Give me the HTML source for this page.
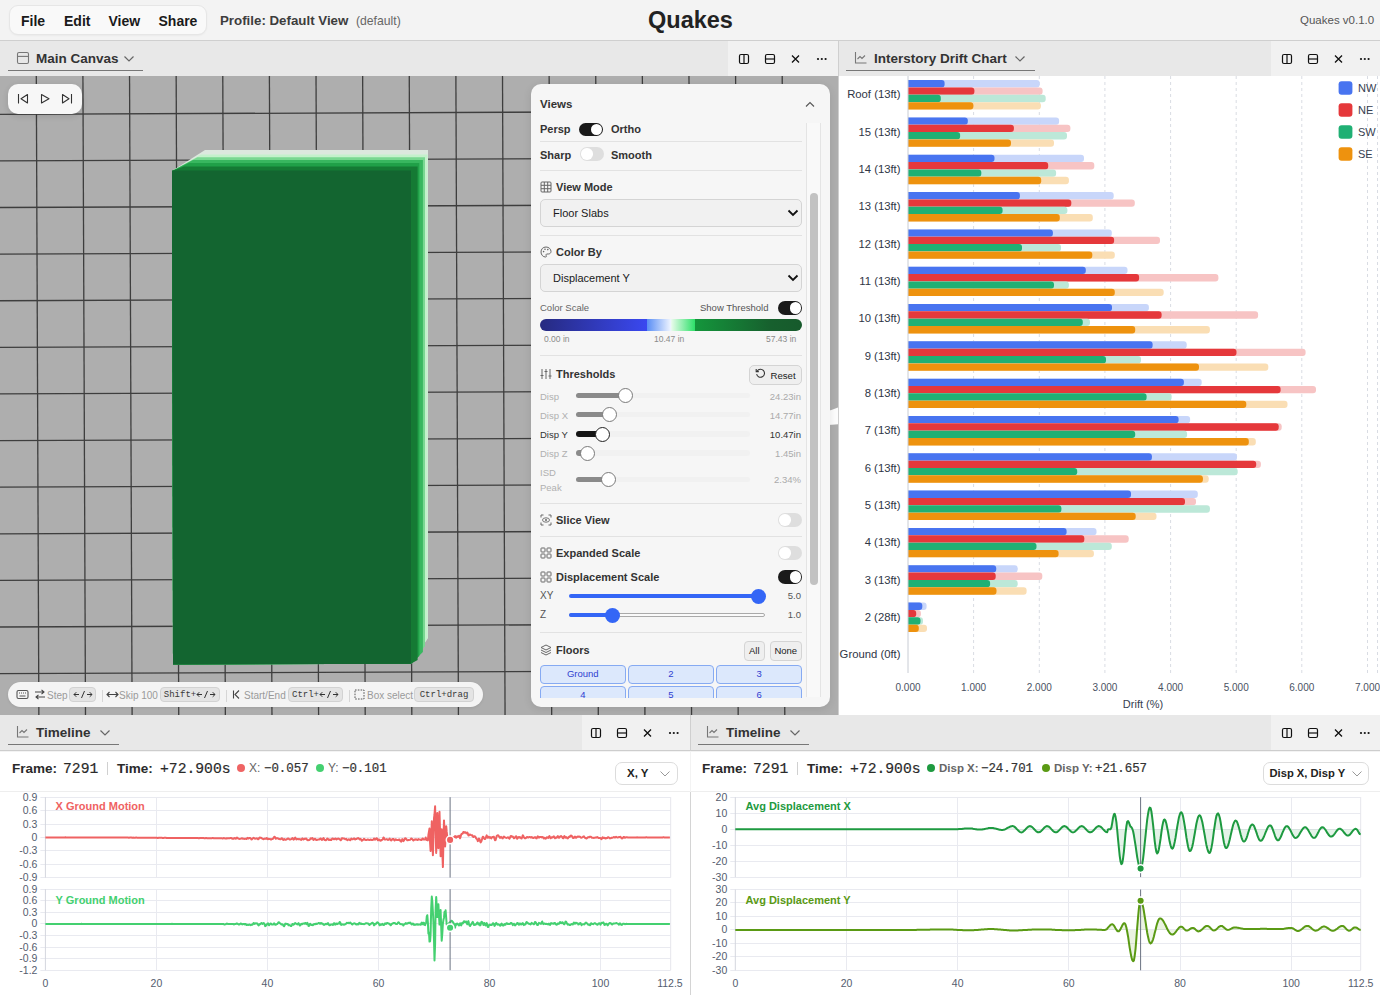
<!DOCTYPE html><html><head><meta charset="utf-8"><style>
*{box-sizing:border-box;margin:0;padding:0}
html,body{width:1380px;height:995px;overflow:hidden;background:#f3f3f3;font-family:"Liberation Sans",sans-serif;color:#222}
.a{position:absolute;white-space:nowrap}
.b{font-weight:bold}
.mono{font-family:"Liberation Mono",monospace;-webkit-text-stroke:0.2px currentColor;margin-top:1px}
.phdr{position:absolute;background:#e8e8e8}
.icons{position:absolute;background:#f1f1f1}
.tab{position:absolute;margin-top:1px;font-size:13.5px;font-weight:bold;color:#333;white-space:nowrap}
.uline{position:absolute;height:1px;background:#777}
.sep{position:absolute;height:1px;background:#e2e2e2}
.lbl{position:absolute;font-size:11px;font-weight:bold;color:#333;white-space:nowrap}
.sel{position:absolute;background:#f1f1f1;border:1px solid #d4d4d4;border-radius:5px}
.tog{position:absolute;width:24px;height:13.5px;border-radius:7px}
.knob{position:absolute;top:1px;width:11.5px;height:11.5px;border-radius:50%;background:#fff}
.kbd{position:absolute;top:687px;height:15px;background:#e4e4e4;border:1px solid #d2d2d2;border-radius:4px;font-family:"Liberation Mono",monospace;font-size:9px;color:#3a3a3a;display:flex;align-items:center;justify-content:center;padding-top:1px}
.hint{position:absolute;top:689.5px;font-size:10px;color:#9a9a9a}
.fbtn{position:absolute;height:18.5px;background:#dce8fc;border:1px solid #86aaf2;border-radius:4px;font-size:9.5px;color:#3040d0;text-align:center;line-height:16.5px}
</style></head><body>
<div class="a" style="left:0;top:40px;width:1380px;height:1px;background:#cfcfcf"></div>
<div class="a" style="left:9px;top:5px;width:198px;height:30px;background:#f9f9f9;border:1px solid #e6e6e6;border-radius:9px;box-shadow:0 1px 2px rgba(0,0,0,0.04)"></div>
<div class="a b" style="left:21px;top:12.5px;font-size:14px;color:#1a1a1a">File</div>
<div class="a b" style="left:64px;top:12.5px;font-size:14px;color:#1a1a1a">Edit</div>
<div class="a b" style="left:108.5px;top:12.5px;font-size:14px;color:#1a1a1a">View</div>
<div class="a b" style="left:158.5px;top:12.5px;font-size:14px;color:#1a1a1a">Share</div>
<div class="a b" style="left:220px;top:12.5px;font-size:13.3px;color:#3d3d3d">Profile: Default View</div>
<div class="a" style="left:356px;top:14px;font-size:12.2px;color:#666">(default)</div>
<div class="a b" style="left:648px;top:7px;font-size:23.5px;color:#222">Quakes</div>
<div class="a" style="left:1300px;top:14px;font-size:11.5px;color:#555">Quakes v0.1.0</div>
<div class="a" style="left:0;top:76px;width:838px;height:639px;background:#aeaeae;overflow:hidden">
<svg class="a" style="left:0;top:0" width="838" height="639"><line x1="-56.94" y1="0" x2="-54.38" y2="639" stroke="#3e3e3e" stroke-width="1.3"/><line x1="-10.32" y1="0" x2="-7.76" y2="639" stroke="#3e3e3e" stroke-width="1.3"/><line x1="36.30" y1="0" x2="38.86" y2="639" stroke="#3e3e3e" stroke-width="1.3"/><line x1="82.92" y1="0" x2="85.48" y2="639" stroke="#3e3e3e" stroke-width="1.3"/><line x1="129.54" y1="0" x2="132.10" y2="639" stroke="#3e3e3e" stroke-width="1.3"/><line x1="176.16" y1="0" x2="178.72" y2="639" stroke="#3e3e3e" stroke-width="1.3"/><line x1="222.78" y1="0" x2="225.34" y2="639" stroke="#3e3e3e" stroke-width="1.3"/><line x1="269.40" y1="0" x2="271.96" y2="639" stroke="#3e3e3e" stroke-width="1.3"/><line x1="316.02" y1="0" x2="318.58" y2="639" stroke="#3e3e3e" stroke-width="1.3"/><line x1="362.64" y1="0" x2="365.20" y2="639" stroke="#3e3e3e" stroke-width="1.3"/><line x1="409.26" y1="0" x2="411.82" y2="639" stroke="#3e3e3e" stroke-width="1.3"/><line x1="455.88" y1="0" x2="458.44" y2="639" stroke="#3e3e3e" stroke-width="1.3"/><line x1="502.50" y1="0" x2="505.06" y2="639" stroke="#3e3e3e" stroke-width="1.3"/><line x1="549.12" y1="0" x2="551.68" y2="639" stroke="#3e3e3e" stroke-width="1.3"/><line x1="595.74" y1="0" x2="598.30" y2="639" stroke="#3e3e3e" stroke-width="1.3"/><line x1="642.36" y1="0" x2="644.92" y2="639" stroke="#3e3e3e" stroke-width="1.3"/><line x1="688.98" y1="0" x2="691.54" y2="639" stroke="#3e3e3e" stroke-width="1.3"/><line x1="735.60" y1="0" x2="738.16" y2="639" stroke="#3e3e3e" stroke-width="1.3"/><line x1="782.22" y1="0" x2="784.78" y2="639" stroke="#3e3e3e" stroke-width="1.3"/><line x1="0" y1="-54.92" x2="784" y2="-58.06" stroke="#3e3e3e" stroke-width="1.3"/><line x1="0" y1="-8.31" x2="784" y2="-11.45" stroke="#3e3e3e" stroke-width="1.3"/><line x1="0" y1="38.30" x2="784" y2="35.16" stroke="#3e3e3e" stroke-width="1.3"/><line x1="0" y1="84.91" x2="784" y2="81.77" stroke="#3e3e3e" stroke-width="1.3"/><line x1="0" y1="131.52" x2="784" y2="128.38" stroke="#3e3e3e" stroke-width="1.3"/><line x1="0" y1="178.13" x2="784" y2="174.99" stroke="#3e3e3e" stroke-width="1.3"/><line x1="0" y1="224.74" x2="784" y2="221.60" stroke="#3e3e3e" stroke-width="1.3"/><line x1="0" y1="271.35" x2="784" y2="268.21" stroke="#3e3e3e" stroke-width="1.3"/><line x1="0" y1="317.96" x2="784" y2="314.82" stroke="#3e3e3e" stroke-width="1.3"/><line x1="0" y1="364.57" x2="784" y2="361.43" stroke="#3e3e3e" stroke-width="1.3"/><line x1="0" y1="411.18" x2="784" y2="408.04" stroke="#3e3e3e" stroke-width="1.3"/><line x1="0" y1="457.79" x2="784" y2="454.65" stroke="#3e3e3e" stroke-width="1.3"/><line x1="0" y1="504.40" x2="784" y2="501.26" stroke="#3e3e3e" stroke-width="1.3"/><line x1="0" y1="551.01" x2="784" y2="547.87" stroke="#3e3e3e" stroke-width="1.3"/><line x1="0" y1="597.62" x2="784" y2="594.48" stroke="#3e3e3e" stroke-width="1.3"/><line x1="0" y1="644.23" x2="784" y2="641.09" stroke="#3e3e3e" stroke-width="1.3"/><line x1="0" y1="690.84" x2="784" y2="687.70" stroke="#3e3e3e" stroke-width="1.3"/><line x1="0" y1="737.45" x2="784" y2="734.31" stroke="#3e3e3e" stroke-width="1.3"/><polygon points="172.0,95.0 205.0,74.0 428.0,74.0 428.0,562.0 410.9,587.8 173.0,588.6" fill="#dce8de"/><polygon points="172.0,95.0 201.0,78.5 427.6,78.5 427.6,562.0 410.9,587.8 173.0,588.6" fill="#c3f1cb"/><polygon points="172.0,95.0 197.3,81.2 425.0,81.2 425.0,570.0 410.9,587.8 173.0,588.6" fill="#79d791"/><polygon points="172.0,95.0 193.0,83.9 422.9,83.9 422.9,576.0 410.9,587.8 173.0,588.6" fill="#38b75f"/><polygon points="172.0,95.0 189.0,86.9 419.3,86.9 419.3,580.0 410.9,587.8 173.0,588.6" fill="#20a048"/><polygon points="172.0,95.0 184.0,90.5 417.6,90.5 417.6,584.0 410.9,587.8 173.0,588.6" fill="#157a34"/><polygon points="172.0,94.5 410.9,94.5 410.9,587.8 173.0,588.6" fill="#136530"/></svg>
</div>
<div class="a" style="left:8px;top:84px;width:74px;height:30px;background:#f7f7f7;border-radius:10px;box-shadow:0 2px 6px rgba(0,0,0,0.12)"></div>
<svg class="a" style="left:14px;top:90px" width="64" height="18" viewBox="0 0 64 18"><path d="M4.5 4 V13.5" stroke="#333" stroke-width="1.1"/><path d="M13.5 4.5 L7 8.8 L13.5 13 Z" fill="none" stroke="#333" stroke-width="1.1" stroke-linejoin="round"/><path d="M27.5 4.5 L35 8.8 L27.5 13 Z" fill="none" stroke="#333" stroke-width="1.1" stroke-linejoin="round"/><path d="M48.5 4.5 L55 8.8 L48.5 13 Z" fill="none" stroke="#333" stroke-width="1.1" stroke-linejoin="round"/><path d="M57.5 4 V13.5" stroke="#333" stroke-width="1.1"/></svg>
<svg class="a" style="left:826px;top:404px" width="12" height="24" viewBox="0 0 12 24"><path d="M0 7.2 Q6 6.2 12 3.5 V20.2 Q6 20.8 0 21 Z" fill="#fdfdfd"/></svg>
<div class="a" style="left:8px;top:682px;width:475px;height:25px;background:#f4f4f4;border-radius:13px;box-shadow:0 1px 3px rgba(0,0,0,0.08)"></div>
<svg class="a" style="left:16px;top:689px" width="13" height="11" viewBox="0 0 13 11"><rect x="1" y="1.5" width="11" height="8" rx="1.5" fill="none" stroke="#555" stroke-width="1.1"/><path d="M3 4 h1 M5 4 h1 M7 4 h1 M9 4 h1 M3.5 7 h6" stroke="#555" stroke-width="1"/></svg>
<svg class="a" style="left:34px;top:689px" width="12" height="11" viewBox="0 0 12 11"><path d="M1 3 H10 M7.5 0.8 L10 3 L7.5 5.2 M11 8 H2 M4.5 5.8 L2 8 L4.5 10.2" fill="none" stroke="#444" stroke-width="1.1"/></svg>
<div class="hint" style="left:47px">Step</div>
<div class="kbd" style="left:69px;width:27px"><svg width="20" height="9" viewBox="0 0 20 9" style="margin-top:-1px"><path d="M6 4.5 H1 M3.3 2.2 L1 4.5 L3.3 6.8" fill="none" stroke="#333" stroke-width="1"/><path d="M8.5 8 L11.5 1" stroke="#333" stroke-width="1"/><path d="M14 4.5 H19 M16.7 2.2 L19 4.5 L16.7 6.8" fill="none" stroke="#333" stroke-width="1"/></svg></div>
<div class="a" style="left:102px;top:690px;width:1px;height:12px;background:#d6d6d6"></div>
<svg class="a" style="left:106px;top:689px" width="13" height="11" viewBox="0 0 13 11"><path d="M1 5.5 H12 M3.5 3 L1 5.5 L3.5 8 M9.5 3 L12 5.5 L9.5 8" fill="none" stroke="#444" stroke-width="1.1"/></svg>
<div class="hint" style="left:119px">Skip 100</div>
<div class="kbd" style="left:160px;width:60px">Shift+<svg width="20" height="9" viewBox="0 0 20 9" style="margin-top:-1px"><path d="M6 4.5 H1 M3.3 2.2 L1 4.5 L3.3 6.8" fill="none" stroke="#333" stroke-width="1"/><path d="M8.5 8 L11.5 1" stroke="#333" stroke-width="1"/><path d="M14 4.5 H19 M16.7 2.2 L19 4.5 L16.7 6.8" fill="none" stroke="#333" stroke-width="1"/></svg></div>
<div class="a" style="left:226px;top:690px;width:1px;height:12px;background:#d6d6d6"></div>
<svg class="a" style="left:232px;top:689px" width="9" height="11" viewBox="0 0 9 11"><path d="M1.5 1.5 V9.5 M7 1.5 L3 5.5 L7 9.5" fill="none" stroke="#444" stroke-width="1.1"/></svg>
<div class="hint" style="left:244px">Start/End</div>
<div class="kbd" style="left:288px;width:55px">Ctrl+<svg width="20" height="9" viewBox="0 0 20 9" style="margin-top:-1px"><path d="M6 4.5 H1 M3.3 2.2 L1 4.5 L3.3 6.8" fill="none" stroke="#333" stroke-width="1"/><path d="M8.5 8 L11.5 1" stroke="#333" stroke-width="1"/><path d="M14 4.5 H19 M16.7 2.2 L19 4.5 L16.7 6.8" fill="none" stroke="#333" stroke-width="1"/></svg></div>
<div class="a" style="left:349px;top:690px;width:1px;height:12px;background:#d6d6d6"></div>
<svg class="a" style="left:354px;top:689px" width="11" height="11" viewBox="0 0 11 11"><rect x="1" y="1" width="9" height="9" fill="none" stroke="#555" stroke-width="1" stroke-dasharray="1.6 1.2"/></svg>
<div class="hint" style="left:367px">Box select</div>
<div class="kbd" style="left:414px;width:60px">Ctrl+drag</div>
<div class="a" style="left:531px;top:84px;width:299px;height:623px;background:#f6f6f6;border-radius:10px;box-shadow:0 2px 8px rgba(0,0,0,0.10)"></div>
<div class="lbl" style="left:540px;top:98px;font-size:11.5px">Views</div>
<svg class="a" style="left:805px;top:100px" width="10" height="8" viewBox="0 0 10 8"><path d="M1 6.5 L5 2.5 L9 6.5" fill="none" stroke="#555" stroke-width="1.1"/></svg>
<div class="a" style="left:806px;top:123px;width:15px;height:574px;background:#f9f9f9;border-left:1px solid #e4e4e4;border-right:1px solid #e4e4e4"></div>
<div class="a" style="left:810px;top:193px;width:7.5px;height:392px;background:#c2c2c2;border-radius:4px"></div>
<div class="lbl" style="left:540px;top:123px">Persp</div>
<div class="tog" style="left:579px;top:122.5px;background:#1a1a1a"><div class="knob" style="left:11.5px"></div></div>
<div class="lbl" style="left:611px;top:123px">Ortho</div>
<div class="sep" style="left:540px;top:141px;width:262px"></div>
<div class="lbl" style="left:540px;top:149px">Sharp</div>
<div class="tog" style="left:580px;top:147px;background:#dedede"><div class="knob" style="left:1px"></div></div>
<div class="lbl" style="left:611px;top:149px">Smooth</div>
<div class="sep" style="left:540px;top:170px;width:262px"></div>
<svg class="a" style="left:540px;top:181px" width="12" height="12" viewBox="0 0 12 12"><rect x="1" y="1" width="10" height="10" rx="1" fill="none" stroke="#666" stroke-width="1"/><path d="M4.3 1 V11 M7.7 1 V11 M1 4.3 H11 M1 7.7 H11" stroke="#666" stroke-width="1"/></svg>
<div class="lbl" style="left:556px;top:181px">View Mode</div>
<div class="sel" style="left:540px;top:199px;width:262px;height:28px"></div>
<div class="a" style="left:553px;top:207px;font-size:11px;color:#1a1a1a">Floor Slabs</div>
<svg class="a" style="left:787px;top:209px" width="12" height="8" viewBox="0 0 12 8"><path d="M1.5 1.5 L6 6 L10.5 1.5" fill="none" stroke="#111" stroke-width="1.8"/></svg>
<div class="sep" style="left:540px;top:235px;width:262px"></div>
<svg class="a" style="left:540px;top:246px" width="12" height="12" viewBox="0 0 12 12"><path d="M6 1 C2.8 1 1 3.3 1 6 C1 8.8 3 11 5.5 11 C6.5 11 6.6 10.2 6.2 9.6 C5.7 8.9 6.1 8 7 8 H8.3 C9.9 8 11 6.9 11 5.5 C11 3 8.8 1 6 1 Z" fill="none" stroke="#666" stroke-width="1"/><circle cx="3.6" cy="5.6" r="0.8" fill="#666"/><circle cx="5" cy="3.3" r="0.8" fill="#666"/><circle cx="7.8" cy="3.6" r="0.8" fill="#666"/></svg>
<div class="lbl" style="left:556px;top:246px">Color By</div>
<div class="sel" style="left:540px;top:264px;width:262px;height:28px"></div>
<div class="a" style="left:553px;top:272px;font-size:11px;color:#1a1a1a">Displacement Y</div>
<svg class="a" style="left:787px;top:274px" width="12" height="8" viewBox="0 0 12 8"><path d="M1.5 1.5 L6 6 L10.5 1.5" fill="none" stroke="#111" stroke-width="1.8"/></svg>
<div class="a" style="left:540px;top:302px;font-size:9.5px;color:#666">Color Scale</div>
<div class="a" style="left:700px;top:302px;font-size:9.5px;color:#555">Show Threshold</div>
<div class="tog" style="left:778px;top:301px;background:#1a1a1a"><div class="knob" style="left:11.5px"></div></div>
<div class="a" style="left:540px;top:319px;width:262px;height:11.5px;border-radius:6px;background:linear-gradient(90deg,#262a80 0%,#3a48f0 40.8%,#5a8ef5 40.9%,#eef4ff 49.9%,#e4fbe8 50.3%,#2ee06a 59.1%,#14963c 59.2%,#17602e 88%,#175a2c 100%)"></div>
<div class="a" style="left:544px;top:334px;font-size:8.5px;color:#8a8a8a">0.00 in</div>
<div class="a" style="left:654px;top:334px;font-size:8.5px;color:#8a8a8a">10.47 in</div>
<div class="a" style="left:766px;top:334px;font-size:8.5px;color:#8a8a8a">57.43 in</div>
<div class="sep" style="left:540px;top:355px;width:262px"></div>
<svg class="a" style="left:540px;top:368px" width="12" height="12" viewBox="0 0 12 12"><path d="M2 1 V11 M6 1 V11 M10 1 V11 M0.5 7.5 H3.5 M4.5 3.5 H7.5 M8.5 8 H11.5" stroke="#666" stroke-width="1"/></svg>
<div class="lbl" style="left:556px;top:368px">Thresholds</div>
<div class="a" style="left:749px;top:364.5px;width:53px;height:20px;background:#efefef;border:1px solid #d4d4d4;border-radius:5px"></div>
<svg class="a" style="left:755px;top:368px" width="11" height="11" viewBox="0 0 11 11"><path d="M2.2 3 A4 4 0 1 1 1.6 6.2" fill="none" stroke="#333" stroke-width="1.1"/><path d="M1.2 1 V3.6 H3.8" fill="none" stroke="#333" stroke-width="1.1"/></svg>
<div class="a" style="left:770.5px;top:369.5px;font-size:9.6px;color:#222">Reset</div>
<div class="a" style="left:540px;top:390.5px;font-size:9.5px;color:#b0b0b0">Disp</div>
<div class="a" style="left:576px;top:392.8px;width:174px;height:5.5px;border-radius:3px;background:#f1f1f1"></div>
<div class="a" style="left:576px;top:392.8px;width:49.0px;height:5.5px;border-radius:3px;background:#8a8a8a"></div>
<div class="a" style="left:617.5px;top:388.3px;width:15px;height:15px;border-radius:50%;background:#fff;border:1.1px solid #7a7a7a"></div>
<div class="a" style="right:579px;top:390.5px;font-size:9.5px;color:#aaa">24.23in</div>
<div class="a" style="left:540px;top:409.5px;font-size:9.5px;color:#b0b0b0">Disp X</div>
<div class="a" style="left:576px;top:411.8px;width:174px;height:5.5px;border-radius:3px;background:#f1f1f1"></div>
<div class="a" style="left:576px;top:411.8px;width:33.0px;height:5.5px;border-radius:3px;background:#8a8a8a"></div>
<div class="a" style="left:601.5px;top:407.3px;width:15px;height:15px;border-radius:50%;background:#fff;border:1.1px solid #7a7a7a"></div>
<div class="a" style="right:579px;top:409.5px;font-size:9.5px;color:#aaa">14.77in</div>
<div class="a" style="left:540px;top:428.7px;font-size:9.5px;color:#333">Disp Y</div>
<div class="a" style="left:576px;top:431.0px;width:174px;height:5.5px;border-radius:3px;background:#f1f1f1"></div>
<div class="a" style="left:576px;top:431.0px;width:26.0px;height:5.5px;border-radius:3px;background:#151515"></div>
<div class="a" style="left:594.5px;top:426.5px;width:15px;height:15px;border-radius:50%;background:#fff;border:1.1px solid #222"></div>
<div class="a" style="right:579px;top:428.7px;font-size:9.5px;color:#333">10.47in</div>
<div class="a" style="left:540px;top:447.7px;font-size:9.5px;color:#b0b0b0">Disp Z</div>
<div class="a" style="left:576px;top:450.0px;width:174px;height:5.5px;border-radius:3px;background:#f1f1f1"></div>
<div class="a" style="left:576px;top:450.0px;width:11.0px;height:5.5px;border-radius:3px;background:#8a8a8a"></div>
<div class="a" style="left:579.5px;top:445.5px;width:15px;height:15px;border-radius:50%;background:#fff;border:1.1px solid #7a7a7a"></div>
<div class="a" style="right:579px;top:447.7px;font-size:9.5px;color:#aaa">1.45in</div>
<div class="a" style="left:540px;top:465px;font-size:9.5px;color:#b0b0b0;line-height:15.2px">ISD<br>Peak</div>
<div class="a" style="left:576px;top:476.6px;width:174px;height:5.5px;border-radius:3px;background:#f1f1f1"></div>
<div class="a" style="left:576px;top:476.6px;width:32.0px;height:5.5px;border-radius:3px;background:#8a8a8a"></div>
<div class="a" style="left:600.5px;top:472.1px;width:15px;height:15px;border-radius:50%;background:#fff;border:1.1px solid #7a7a7a"></div>
<div class="a" style="right:579px;top:474.3px;font-size:9.5px;color:#aaa">2.34%</div>
<div class="sep" style="left:540px;top:503px;width:262px"></div>
<svg class="a" style="left:540px;top:514px" width="12" height="12" viewBox="0 0 12 12"><path d="M1 3.5 V1 H3.5 M8.5 1 H11 V3.5 M11 8.5 V11 H8.5 M3.5 11 H1 V8.5" fill="none" stroke="#666" stroke-width="1"/><ellipse cx="6" cy="6" rx="3.5" ry="2.2" fill="none" stroke="#666" stroke-width="0.9"/><circle cx="6" cy="6" r="1" fill="#666"/></svg>
<div class="lbl" style="left:556px;top:514px">Slice View</div>
<div class="tog" style="left:778px;top:513px;background:#dedede"><div class="knob" style="left:1px"></div></div>
<div class="sep" style="left:540px;top:536px;width:262px"></div>
<svg class="a" style="left:540px;top:546.5px" width="12" height="12" viewBox="0 0 12 12"><rect x="1" y="1" width="4" height="4" rx="0.6" fill="none" stroke="#666" stroke-width="1"/><rect x="7" y="1" width="4" height="4" rx="0.6" fill="none" stroke="#666" stroke-width="1"/><rect x="1" y="7" width="4" height="4" rx="0.6" fill="none" stroke="#666" stroke-width="1"/><rect x="7" y="7" width="4" height="4" rx="0.6" fill="none" stroke="#666" stroke-width="1"/></svg>
<div class="lbl" style="left:556px;top:546.5px">Expanded Scale</div>
<svg class="a" style="left:540px;top:570.5px" width="12" height="12" viewBox="0 0 12 12"><rect x="1" y="1" width="4" height="4" rx="0.6" fill="none" stroke="#666" stroke-width="1"/><rect x="7" y="1" width="4" height="4" rx="0.6" fill="none" stroke="#666" stroke-width="1"/><rect x="1" y="7" width="4" height="4" rx="0.6" fill="none" stroke="#666" stroke-width="1"/><rect x="7" y="7" width="4" height="4" rx="0.6" fill="none" stroke="#666" stroke-width="1"/></svg>
<div class="lbl" style="left:556px;top:570.5px">Displacement Scale</div>
<div class="tog" style="left:778px;top:546px;background:#dedede"><div class="knob" style="left:1px"></div></div>
<div class="tog" style="left:778px;top:570px;background:#1a1a1a"><div class="knob" style="left:11.5px"></div></div>
<div class="a" style="left:540px;top:590px;font-size:10px;color:#555">XY</div>
<div class="a" style="left:569px;top:594px;width:189px;height:4px;border-radius:2px;background:#3466f6"></div>
<div class="a" style="left:750.6px;top:588.5px;width:15px;height:15px;border-radius:50%;background:#3466f6"></div>
<div class="a" style="right:579px;top:590px;font-size:9.5px;color:#555">5.0</div>
<div class="a" style="left:540px;top:609px;font-size:10px;color:#555">Z</div>
<div class="a" style="left:569px;top:613px;width:196px;height:4px;border-radius:2px;background:#fafafa;border:1px solid #aaa"></div>
<div class="a" style="left:569px;top:613px;width:43px;height:4px;border-radius:2px;background:#3466f6"></div>
<div class="a" style="left:604.6px;top:607.5px;width:15px;height:15px;border-radius:50%;background:#3466f6"></div>
<div class="a" style="right:579px;top:609px;font-size:9.5px;color:#555">1.0</div>
<div class="sep" style="left:540px;top:631.5px;width:262px"></div>
<svg class="a" style="left:540px;top:644px" width="12" height="12" viewBox="0 0 12 12"><path d="M6 1 L11 3.5 L6 6 L1 3.5 Z" fill="none" stroke="#666" stroke-width="1" stroke-linejoin="round"/><path d="M1 6 L6 8.5 L11 6 M1 8.5 L6 11 L11 8.5" fill="none" stroke="#666" stroke-width="1" stroke-linejoin="round"/></svg>
<div class="lbl" style="left:556px;top:644px">Floors</div>
<div class="a" style="left:743.5px;top:640.5px;width:21.5px;height:20px;background:#efefef;border:1px solid #d4d4d4;border-radius:4px;font-size:9.5px;color:#222;text-align:center;line-height:18px">All</div>
<div class="a" style="left:769.5px;top:640.5px;width:32.5px;height:20px;background:#efefef;border:1px solid #d4d4d4;border-radius:4px;font-size:9.5px;color:#222;text-align:center;line-height:18px">None</div>
<div class="a" style="left:531px;top:665px;width:275px;height:33px;overflow:hidden">
<div class="fbtn" style="left:9.0px;top:0px;width:85.6px">Ground</div>
<div class="fbtn" style="left:97.2px;top:0px;width:85.6px">2</div>
<div class="fbtn" style="left:185.4px;top:0px;width:85.6px">3</div>
<div class="fbtn" style="left:9.0px;top:21px;width:85.6px">4</div>
<div class="fbtn" style="left:97.2px;top:21px;width:85.6px">5</div>
<div class="fbtn" style="left:185.4px;top:21px;width:85.6px">6</div>
</div>
<div class="phdr" style="left:0;top:41px;width:838px;height:35px"></div>
<div class="icons" style="left:728px;top:41px;width:110px;height:35px"></div>
<svg class="a" style="left:16px;top:51px" width="14" height="14" viewBox="0 0 14 14"><rect x="1.5" y="1.5" width="11" height="11" rx="1.5" fill="none" stroke="#777" stroke-width="1.1"/><line x1="1.5" y1="5.4" x2="12.5" y2="5.4" stroke="#777" stroke-width="1.1"/></svg>
<div class="tab" style="left:36px;top:50px">Main Canvas</div>
<svg class="a" style="left:123px;top:55px" width="12" height="8" viewBox="0 0 12 8"><path d="M1.5 1.5 L6 6 L10.5 1.5" fill="none" stroke="#666" stroke-width="1.2"/></svg>
<div class="uline" style="left:8px;top:70px;width:135px"></div>
<svg class="a" style="left:738px;top:53px" width="92" height="14" viewBox="0 0 92 14"><rect x="1.5" y="1.5" width="9" height="9" rx="1.5" fill="none" stroke="#111" stroke-width="1.2"/><line x1="6" y1="1.5" x2="6" y2="10.5" stroke="#111" stroke-width="1.2"/><rect x="27.5" y="1.5" width="9" height="9" rx="1.5" fill="none" stroke="#111" stroke-width="1.2"/><line x1="27.5" y1="6" x2="36.5" y2="6" stroke="#111" stroke-width="1.2"/><path d="M54 2.5 L61 9.5 M61 2.5 L54 9.5" stroke="#111" stroke-width="1.3"/><circle cx="80" cy="6" r="1.1" fill="#111"/><circle cx="83.8" cy="6" r="1.1" fill="#111"/><circle cx="87.6" cy="6" r="1.1" fill="#111"/></svg>
<div class="a" style="left:838px;top:41px;width:1px;height:674px;background:#cfcfcf"></div>
<div class="phdr" style="left:839px;top:41px;width:541px;height:35px"></div>
<div class="icons" style="left:1271px;top:41px;width:109px;height:35px"></div>
<svg class="a" style="left:854px;top:51px" width="14" height="14" viewBox="0 0 14 14"><path d="M1.5 1 V12 H12.5" fill="none" stroke="#777" stroke-width="1.1"/><path d="M3.5 8 L6 5.5 L8 7.5 L11 4.5" fill="none" stroke="#777" stroke-width="1.1"/></svg>
<div class="tab" style="left:874px;top:50px">Interstory Drift Chart</div>
<svg class="a" style="left:1014px;top:55px" width="12" height="8" viewBox="0 0 12 8"><path d="M1.5 1.5 L6 6 L10.5 1.5" fill="none" stroke="#666" stroke-width="1.2"/></svg>
<div class="uline" style="left:846px;top:70px;width:189px"></div>
<svg class="a" style="left:1281px;top:53px" width="92" height="14" viewBox="0 0 92 14"><rect x="1.5" y="1.5" width="9" height="9" rx="1.5" fill="none" stroke="#111" stroke-width="1.2"/><line x1="6" y1="1.5" x2="6" y2="10.5" stroke="#111" stroke-width="1.2"/><rect x="27.5" y="1.5" width="9" height="9" rx="1.5" fill="none" stroke="#111" stroke-width="1.2"/><line x1="27.5" y1="6" x2="36.5" y2="6" stroke="#111" stroke-width="1.2"/><path d="M54 2.5 L61 9.5 M61 2.5 L54 9.5" stroke="#111" stroke-width="1.3"/><circle cx="80" cy="6" r="1.1" fill="#111"/><circle cx="83.8" cy="6" r="1.1" fill="#111"/><circle cx="87.6" cy="6" r="1.1" fill="#111"/></svg>
<div class="a" style="left:839px;top:76px;width:541px;height:639px;background:#fff"></div>
<svg class="a" style="left:0;top:0" width="1380" height="995" viewBox="0 0 1380 995"><line x1="973.6" y1="76" x2="973.6" y2="673" stroke="#d9dce3" stroke-width="1" stroke-dasharray="3 3"/><line x1="1039.3" y1="76" x2="1039.3" y2="673" stroke="#d9dce3" stroke-width="1" stroke-dasharray="3 3"/><line x1="1104.9" y1="76" x2="1104.9" y2="673" stroke="#d9dce3" stroke-width="1" stroke-dasharray="3 3"/><line x1="1170.6" y1="76" x2="1170.6" y2="673" stroke="#d9dce3" stroke-width="1" stroke-dasharray="3 3"/><line x1="1236.2" y1="76" x2="1236.2" y2="673" stroke="#d9dce3" stroke-width="1" stroke-dasharray="3 3"/><line x1="1301.8" y1="76" x2="1301.8" y2="673" stroke="#d9dce3" stroke-width="1" stroke-dasharray="3 3"/><line x1="1367.5" y1="76" x2="1367.5" y2="673" stroke="#d9dce3" stroke-width="1" stroke-dasharray="3 3"/><line x1="1377.5" y1="76" x2="1377.5" y2="673" stroke="#d9dce3" stroke-width="1" stroke-dasharray="3 3"/><path d="M908.00 80.10 H1036.70 Q1039.70 80.10 1039.70 83.10 V84.45 Q1039.70 87.45 1036.70 87.45 H908.00 Z" fill="#c8d6fa"/><path d="M908.00 80.10 H941.60 Q944.60 80.10 944.60 83.10 V84.45 Q944.60 87.45 941.60 87.45 H908.00 Z" fill="#4874f0"/><path d="M908.00 87.45 H1039.60 Q1042.60 87.45 1042.60 90.45 V91.80 Q1042.60 94.80 1039.60 94.80 H908.00 Z" fill="#f7c4c4"/><path d="M908.00 87.45 H971.40 Q974.40 87.45 974.40 90.45 V91.80 Q974.40 94.80 971.40 94.80 H908.00 Z" fill="#e5383b"/><path d="M908.00 94.80 H1042.70 Q1045.70 94.80 1045.70 97.80 V99.15 Q1045.70 102.15 1042.70 102.15 H908.00 Z" fill="#bce8d8"/><path d="M908.00 94.80 H937.80 Q940.80 94.80 940.80 97.80 V99.15 Q940.80 102.15 937.80 102.15 H908.00 Z" fill="#20b074"/><path d="M908.00 102.15 H1037.90 Q1040.90 102.15 1040.90 105.15 V106.50 Q1040.90 109.50 1037.90 109.50 H908.00 Z" fill="#fadeb4"/><path d="M908.00 102.15 H970.40 Q973.40 102.15 973.40 105.15 V106.50 Q973.40 109.50 970.40 109.50 H908.00 Z" fill="#ee920e"/><path d="M908.00 117.42 H1056.10 Q1059.10 117.42 1059.10 120.42 V121.77 Q1059.10 124.77 1056.10 124.77 H908.00 Z" fill="#c8d6fa"/><path d="M908.00 117.42 H964.80 Q967.80 117.42 967.80 120.42 V121.77 Q967.80 124.77 964.80 124.77 H908.00 Z" fill="#4874f0"/><path d="M908.00 124.77 H1067.40 Q1070.40 124.77 1070.40 127.77 V129.12 Q1070.40 132.12 1067.40 132.12 H908.00 Z" fill="#f7c4c4"/><path d="M908.00 124.77 H1010.90 Q1013.90 124.77 1013.90 127.77 V129.12 Q1013.90 132.12 1010.90 132.12 H908.00 Z" fill="#e5383b"/><path d="M908.00 132.12 H1064.00 Q1067.00 132.12 1067.00 135.12 V136.47 Q1067.00 139.47 1064.00 139.47 H908.00 Z" fill="#bce8d8"/><path d="M908.00 132.12 H957.10 Q960.10 132.12 960.10 135.12 V136.47 Q960.10 139.47 957.10 139.47 H908.00 Z" fill="#20b074"/><path d="M908.00 139.47 H1051.00 Q1054.00 139.47 1054.00 142.47 V143.82 Q1054.00 146.82 1051.00 146.82 H908.00 Z" fill="#fadeb4"/><path d="M908.00 139.47 H1008.00 Q1011.00 139.47 1011.00 142.47 V143.82 Q1011.00 146.82 1008.00 146.82 H908.00 Z" fill="#ee920e"/><path d="M908.00 154.74 H1081.00 Q1084.00 154.74 1084.00 157.74 V159.09 Q1084.00 162.09 1081.00 162.09 H908.00 Z" fill="#c8d6fa"/><path d="M908.00 154.74 H991.50 Q994.50 154.74 994.50 157.74 V159.09 Q994.50 162.09 991.50 162.09 H908.00 Z" fill="#4874f0"/><path d="M908.00 162.09 H1091.30 Q1094.30 162.09 1094.30 165.09 V166.44 Q1094.30 169.44 1091.30 169.44 H908.00 Z" fill="#f7c4c4"/><path d="M908.00 162.09 H1045.20 Q1048.20 162.09 1048.20 165.09 V166.44 Q1048.20 169.44 1045.20 169.44 H908.00 Z" fill="#e5383b"/><path d="M908.00 169.44 H1053.10 Q1056.10 169.44 1056.10 172.44 V173.79 Q1056.10 176.79 1053.10 176.79 H908.00 Z" fill="#bce8d8"/><path d="M908.00 169.44 H978.30 Q981.30 169.44 981.30 172.44 V173.79 Q981.30 176.79 978.30 176.79 H908.00 Z" fill="#20b074"/><path d="M908.00 176.79 H1065.90 Q1068.90 176.79 1068.90 179.79 V181.14 Q1068.90 184.14 1065.90 184.14 H908.00 Z" fill="#fadeb4"/><path d="M908.00 176.79 H1038.20 Q1041.20 176.79 1041.20 179.79 V181.14 Q1041.20 184.14 1038.20 184.14 H908.00 Z" fill="#ee920e"/><path d="M908.00 192.06 H1110.70 Q1113.70 192.06 1113.70 195.06 V196.41 Q1113.70 199.41 1110.70 199.41 H908.00 Z" fill="#c8d6fa"/><path d="M908.00 192.06 H1016.90 Q1019.90 192.06 1019.90 195.06 V196.41 Q1019.90 199.41 1016.90 199.41 H908.00 Z" fill="#4874f0"/><path d="M908.00 199.41 H1131.80 Q1134.80 199.41 1134.80 202.41 V203.76 Q1134.80 206.76 1131.80 206.76 H908.00 Z" fill="#f7c4c4"/><path d="M908.00 199.41 H1068.30 Q1071.30 199.41 1071.30 202.41 V203.76 Q1071.30 206.76 1068.30 206.76 H908.00 Z" fill="#e5383b"/><path d="M908.00 206.76 H1064.40 Q1067.40 206.76 1067.40 209.76 V211.11 Q1067.40 214.11 1064.40 214.11 H908.00 Z" fill="#bce8d8"/><path d="M908.00 206.76 H999.60 Q1002.60 206.76 1002.60 209.76 V211.11 Q1002.60 214.11 999.60 214.11 H908.00 Z" fill="#20b074"/><path d="M908.00 214.11 H1089.80 Q1092.80 214.11 1092.80 217.11 V218.46 Q1092.80 221.46 1089.80 221.46 H908.00 Z" fill="#fadeb4"/><path d="M908.00 214.11 H1056.80 Q1059.80 214.11 1059.80 217.11 V218.46 Q1059.80 221.46 1056.80 221.46 H908.00 Z" fill="#ee920e"/><path d="M908.00 229.38 H1108.80 Q1111.80 229.38 1111.80 232.38 V233.73 Q1111.80 236.73 1108.80 236.73 H908.00 Z" fill="#c8d6fa"/><path d="M908.00 229.38 H1049.90 Q1052.90 229.38 1052.90 232.38 V233.73 Q1052.90 236.73 1049.90 236.73 H908.00 Z" fill="#4874f0"/><path d="M908.00 236.73 H1157.00 Q1160.00 236.73 1160.00 239.73 V241.08 Q1160.00 244.08 1157.00 244.08 H908.00 Z" fill="#f7c4c4"/><path d="M908.00 236.73 H1111.10 Q1114.10 236.73 1114.10 239.73 V241.08 Q1114.10 244.08 1111.10 244.08 H908.00 Z" fill="#e5383b"/><path d="M908.00 244.08 H1058.00 Q1061.00 244.08 1061.00 247.08 V248.43 Q1061.00 251.43 1058.00 251.43 H908.00 Z" fill="#bce8d8"/><path d="M908.00 244.08 H1019.00 Q1022.00 244.08 1022.00 247.08 V248.43 Q1022.00 251.43 1019.00 251.43 H908.00 Z" fill="#20b074"/><path d="M908.00 251.43 H1111.80 Q1114.80 251.43 1114.80 254.43 V255.78 Q1114.80 258.78 1111.80 258.78 H908.00 Z" fill="#fadeb4"/><path d="M908.00 251.43 H1089.30 Q1092.30 251.43 1092.30 254.43 V255.78 Q1092.30 258.78 1089.30 258.78 H908.00 Z" fill="#ee920e"/><path d="M908.00 266.70 H1124.50 Q1127.50 266.70 1127.50 269.70 V271.05 Q1127.50 274.05 1124.50 274.05 H908.00 Z" fill="#c8d6fa"/><path d="M908.00 266.70 H1082.80 Q1085.80 266.70 1085.80 269.70 V271.05 Q1085.80 274.05 1082.80 274.05 H908.00 Z" fill="#4874f0"/><path d="M908.00 274.05 H1215.40 Q1218.40 274.05 1218.40 277.05 V278.40 Q1218.40 281.40 1215.40 281.40 H908.00 Z" fill="#f7c4c4"/><path d="M908.00 274.05 H1136.10 Q1139.10 274.05 1139.10 277.05 V278.40 Q1139.10 281.40 1136.10 281.40 H908.00 Z" fill="#e5383b"/><path d="M908.00 281.40 H1065.90 Q1068.90 281.40 1068.90 284.40 V285.75 Q1068.90 288.75 1065.90 288.75 H908.00 Z" fill="#bce8d8"/><path d="M908.00 281.40 H1051.00 Q1054.00 281.40 1054.00 284.40 V285.75 Q1054.00 288.75 1051.00 288.75 H908.00 Z" fill="#20b074"/><path d="M908.00 288.75 H1160.70 Q1163.70 288.75 1163.70 291.75 V293.10 Q1163.70 296.10 1160.70 296.10 H908.00 Z" fill="#fadeb4"/><path d="M908.00 288.75 H1111.80 Q1114.80 288.75 1114.80 291.75 V293.10 Q1114.80 296.10 1111.80 296.10 H908.00 Z" fill="#ee920e"/><path d="M908.00 304.02 H1145.90 Q1148.90 304.02 1148.90 307.02 V308.37 Q1148.90 311.37 1145.90 311.37 H908.00 Z" fill="#c8d6fa"/><path d="M908.00 304.02 H1109.00 Q1112.00 304.02 1112.00 307.02 V308.37 Q1112.00 311.37 1109.00 311.37 H908.00 Z" fill="#4874f0"/><path d="M908.00 311.37 H1255.10 Q1258.10 311.37 1258.10 314.37 V315.72 Q1258.10 318.72 1255.10 318.72 H908.00 Z" fill="#f7c4c4"/><path d="M908.00 311.37 H1158.60 Q1161.60 311.37 1161.60 314.37 V315.72 Q1161.60 318.72 1158.60 318.72 H908.00 Z" fill="#e5383b"/><path d="M908.00 318.72 H1087.00 Q1090.00 318.72 1090.00 321.72 V323.07 Q1090.00 326.07 1087.00 326.07 H908.00 Z" fill="#bce8d8"/><path d="M908.00 318.72 H1079.80 Q1082.80 318.72 1082.80 321.72 V323.07 Q1082.80 326.07 1079.80 326.07 H908.00 Z" fill="#20b074"/><path d="M908.00 326.07 H1206.90 Q1209.90 326.07 1209.90 329.07 V330.42 Q1209.90 333.42 1206.90 333.42 H908.00 Z" fill="#fadeb4"/><path d="M908.00 326.07 H1132.20 Q1135.20 326.07 1135.20 329.07 V330.42 Q1135.20 333.42 1132.20 333.42 H908.00 Z" fill="#ee920e"/><path d="M908.00 341.34 H1183.70 Q1186.70 341.34 1186.70 344.34 V345.69 Q1186.70 348.69 1183.70 348.69 H908.00 Z" fill="#c8d6fa"/><path d="M908.00 341.34 H1149.60 Q1152.60 341.34 1152.60 344.34 V345.69 Q1152.60 348.69 1149.60 348.69 H908.00 Z" fill="#4874f0"/><path d="M908.00 348.69 H1302.60 Q1305.60 348.69 1305.60 351.69 V353.04 Q1305.60 356.04 1302.60 356.04 H908.00 Z" fill="#f7c4c4"/><path d="M908.00 348.69 H1233.50 Q1236.50 348.69 1236.50 351.69 V353.04 Q1236.50 356.04 1233.50 356.04 H908.00 Z" fill="#e5383b"/><path d="M908.00 356.04 H1138.00 Q1141.00 356.04 1141.00 359.04 V360.39 Q1141.00 363.39 1138.00 363.39 H908.00 Z" fill="#bce8d8"/><path d="M908.00 356.04 H1103.00 Q1106.00 356.04 1106.00 359.04 V360.39 Q1106.00 363.39 1103.00 363.39 H908.00 Z" fill="#20b074"/><path d="M908.00 363.39 H1265.30 Q1268.30 363.39 1268.30 366.39 V367.74 Q1268.30 370.74 1265.30 370.74 H908.00 Z" fill="#fadeb4"/><path d="M908.00 363.39 H1196.00 Q1199.00 363.39 1199.00 366.39 V367.74 Q1199.00 370.74 1196.00 370.74 H908.00 Z" fill="#ee920e"/><path d="M908.00 378.66 H1198.70 Q1201.70 378.66 1201.70 381.66 V383.01 Q1201.70 386.01 1198.70 386.01 H908.00 Z" fill="#c8d6fa"/><path d="M908.00 378.66 H1180.90 Q1183.90 378.66 1183.90 381.66 V383.01 Q1183.90 386.01 1180.90 386.01 H908.00 Z" fill="#4874f0"/><path d="M908.00 386.01 H1313.00 Q1316.00 386.01 1316.00 389.01 V390.36 Q1316.00 393.36 1313.00 393.36 H908.00 Z" fill="#f7c4c4"/><path d="M908.00 386.01 H1277.60 Q1280.60 386.01 1280.60 389.01 V390.36 Q1280.60 393.36 1277.60 393.36 H908.00 Z" fill="#e5383b"/><path d="M908.00 393.36 H1168.60 Q1171.60 393.36 1171.60 396.36 V397.71 Q1171.60 400.71 1168.60 400.71 H908.00 Z" fill="#bce8d8"/><path d="M908.00 393.36 H1143.60 Q1146.60 393.36 1146.60 396.36 V397.71 Q1146.60 400.71 1143.60 400.71 H908.00 Z" fill="#20b074"/><path d="M908.00 400.71 H1284.50 Q1287.50 400.71 1287.50 403.71 V405.06 Q1287.50 408.06 1284.50 408.06 H908.00 Z" fill="#fadeb4"/><path d="M908.00 400.71 H1243.30 Q1246.30 400.71 1246.30 403.71 V405.06 Q1246.30 408.06 1243.30 408.06 H908.00 Z" fill="#ee920e"/><path d="M908.00 415.98 H1187.10 Q1190.10 415.98 1190.10 418.98 V420.33 Q1190.10 423.33 1187.10 423.33 H908.00 Z" fill="#c8d6fa"/><path d="M908.00 415.98 H1175.60 Q1178.60 415.98 1178.60 418.98 V420.33 Q1178.60 423.33 1175.60 423.33 H908.00 Z" fill="#4874f0"/><path d="M908.00 423.33 H1278.70 Q1281.70 423.33 1281.70 426.33 V427.68 Q1281.70 430.68 1278.70 430.68 H908.00 Z" fill="#f7c4c4"/><path d="M908.00 423.33 H1275.70 Q1278.70 423.33 1278.70 426.33 V427.68 Q1278.70 430.68 1275.70 430.68 H908.00 Z" fill="#e5383b"/><path d="M908.00 430.68 H1184.10 Q1187.10 430.68 1187.10 433.68 V435.03 Q1187.10 438.03 1184.10 438.03 H908.00 Z" fill="#bce8d8"/><path d="M908.00 430.68 H1132.20 Q1135.20 430.68 1135.20 433.68 V435.03 Q1135.20 438.03 1132.20 438.03 H908.00 Z" fill="#20b074"/><path d="M908.00 438.03 H1252.80 Q1255.80 438.03 1255.80 441.03 V442.38 Q1255.80 445.38 1252.80 445.38 H908.00 Z" fill="#fadeb4"/><path d="M908.00 438.03 H1245.80 Q1248.80 438.03 1248.80 441.03 V442.38 Q1248.80 445.38 1245.80 445.38 H908.00 Z" fill="#ee920e"/><path d="M908.00 453.30 H1234.00 Q1237.00 453.30 1237.00 456.30 V457.65 Q1237.00 460.65 1234.00 460.65 H908.00 Z" fill="#c8d6fa"/><path d="M908.00 453.30 H1148.90 Q1151.90 453.30 1151.90 456.30 V457.65 Q1151.90 460.65 1148.90 460.65 H908.00 Z" fill="#4874f0"/><path d="M908.00 460.65 H1257.90 Q1260.90 460.65 1260.90 463.65 V465.00 Q1260.90 468.00 1257.90 468.00 H908.00 Z" fill="#f7c4c4"/><path d="M908.00 460.65 H1253.20 Q1256.20 460.65 1256.20 463.65 V465.00 Q1256.20 468.00 1253.20 468.00 H908.00 Z" fill="#e5383b"/><path d="M908.00 468.00 H1234.70 Q1237.70 468.00 1237.70 471.00 V472.35 Q1237.70 475.35 1234.70 475.35 H908.00 Z" fill="#bce8d8"/><path d="M908.00 468.00 H1074.20 Q1077.20 468.00 1077.20 471.00 V472.35 Q1077.20 475.35 1074.20 475.35 H908.00 Z" fill="#20b074"/><path d="M908.00 475.35 H1205.70 Q1208.70 475.35 1208.70 478.35 V479.70 Q1208.70 482.70 1205.70 482.70 H908.00 Z" fill="#fadeb4"/><path d="M908.00 475.35 H1199.90 Q1202.90 475.35 1202.90 478.35 V479.70 Q1202.90 482.70 1199.90 482.70 H908.00 Z" fill="#ee920e"/><path d="M908.00 490.62 H1194.80 Q1197.80 490.62 1197.80 493.62 V494.97 Q1197.80 497.97 1194.80 497.97 H908.00 Z" fill="#c8d6fa"/><path d="M908.00 490.62 H1128.00 Q1131.00 490.62 1131.00 493.62 V494.97 Q1131.00 497.97 1128.00 497.97 H908.00 Z" fill="#4874f0"/><path d="M908.00 497.97 H1193.00 Q1196.00 497.97 1196.00 500.97 V502.32 Q1196.00 505.32 1193.00 505.32 H908.00 Z" fill="#f7c4c4"/><path d="M908.00 497.97 H1182.00 Q1185.00 497.97 1185.00 500.97 V502.32 Q1185.00 505.32 1182.00 505.32 H908.00 Z" fill="#e5383b"/><path d="M908.00 505.32 H1206.90 Q1209.90 505.32 1209.90 508.32 V509.67 Q1209.90 512.67 1206.90 512.67 H908.00 Z" fill="#bce8d8"/><path d="M908.00 505.32 H1058.40 Q1061.40 505.32 1061.40 508.32 V509.67 Q1061.40 512.67 1058.40 512.67 H908.00 Z" fill="#20b074"/><path d="M908.00 512.67 H1153.50 Q1156.50 512.67 1156.50 515.67 V517.02 Q1156.50 520.02 1153.50 520.02 H908.00 Z" fill="#fadeb4"/><path d="M908.00 512.67 H1132.70 Q1135.70 512.67 1135.70 515.67 V517.02 Q1135.70 520.02 1132.70 520.02 H908.00 Z" fill="#ee920e"/><path d="M908.00 527.94 H1093.50 Q1096.50 527.94 1096.50 530.94 V532.29 Q1096.50 535.29 1093.50 535.29 H908.00 Z" fill="#c8d6fa"/><path d="M908.00 527.94 H1063.60 Q1066.60 527.94 1066.60 530.94 V532.29 Q1066.60 535.29 1063.60 535.29 H908.00 Z" fill="#4874f0"/><path d="M908.00 535.29 H1125.70 Q1128.70 535.29 1128.70 538.29 V539.64 Q1128.70 542.64 1125.70 542.64 H908.00 Z" fill="#f7c4c4"/><path d="M908.00 535.29 H1081.30 Q1084.30 535.29 1084.30 538.29 V539.64 Q1084.30 542.64 1081.30 542.64 H908.00 Z" fill="#e5383b"/><path d="M908.00 542.64 H1108.80 Q1111.80 542.64 1111.80 545.64 V546.99 Q1111.80 549.99 1108.80 549.99 H908.00 Z" fill="#bce8d8"/><path d="M908.00 542.64 H1033.50 Q1036.50 542.64 1036.50 545.64 V546.99 Q1036.50 549.99 1033.50 549.99 H908.00 Z" fill="#20b074"/><path d="M908.00 549.99 H1090.90 Q1093.90 549.99 1093.90 552.99 V554.34 Q1093.90 557.34 1090.90 557.34 H908.00 Z" fill="#fadeb4"/><path d="M908.00 549.99 H1055.60 Q1058.60 549.99 1058.60 552.99 V554.34 Q1058.60 557.34 1055.60 557.34 H908.00 Z" fill="#ee920e"/><path d="M908.00 565.26 H1014.70 Q1017.70 565.26 1017.70 568.26 V569.61 Q1017.70 572.61 1014.70 572.61 H908.00 Z" fill="#c8d6fa"/><path d="M908.00 565.26 H993.20 Q996.20 565.26 996.20 568.26 V569.61 Q996.20 572.61 993.20 572.61 H908.00 Z" fill="#4874f0"/><path d="M908.00 572.61 H1039.30 Q1042.30 572.61 1042.30 575.61 V576.96 Q1042.30 579.96 1039.30 579.96 H908.00 Z" fill="#f7c4c4"/><path d="M908.00 572.61 H992.70 Q995.70 572.61 995.70 575.61 V576.96 Q995.70 579.96 992.70 579.96 H908.00 Z" fill="#e5383b"/><path d="M908.00 579.96 H1014.70 Q1017.70 579.96 1017.70 582.96 V584.31 Q1017.70 587.31 1014.70 587.31 H908.00 Z" fill="#bce8d8"/><path d="M908.00 579.96 H987.10 Q990.10 579.96 990.10 582.96 V584.31 Q990.10 587.31 987.10 587.31 H908.00 Z" fill="#20b074"/><path d="M908.00 587.31 H1023.60 Q1026.60 587.31 1026.60 590.31 V591.66 Q1026.60 594.66 1023.60 594.66 H908.00 Z" fill="#fadeb4"/><path d="M908.00 587.31 H993.50 Q996.50 587.31 996.50 590.31 V591.66 Q996.50 594.66 993.50 594.66 H908.00 Z" fill="#ee920e"/><path d="M908.00 602.58 H923.60 Q926.60 602.58 926.60 605.58 V606.93 Q926.60 609.93 923.60 609.93 H908.00 Z" fill="#c8d6fa"/><path d="M908.00 602.58 H919.30 Q922.30 602.58 922.30 605.58 V606.93 Q922.30 609.93 919.30 609.93 H908.00 Z" fill="#4874f0"/><path d="M908.00 609.93 H917.90 Q920.90 609.93 920.90 612.93 V614.28 Q920.90 617.28 917.90 617.28 H908.00 Z" fill="#f7c4c4"/><path d="M908.00 609.93 H913.20 Q916.20 609.93 916.20 612.93 V614.28 Q916.20 617.28 913.20 617.28 H908.00 Z" fill="#e5383b"/><path d="M908.00 617.28 H920.00 Q923.00 617.28 923.00 620.28 V621.63 Q923.00 624.63 920.00 624.63 H908.00 Z" fill="#bce8d8"/><path d="M908.00 617.28 H917.50 Q920.50 617.28 920.50 620.28 V621.63 Q920.50 624.63 917.50 624.63 H908.00 Z" fill="#20b074"/><path d="M908.00 624.63 H924.00 Q927.00 624.63 927.00 627.63 V628.98 Q927.00 631.98 924.00 631.98 H908.00 Z" fill="#fadeb4"/><path d="M908.00 624.63 H915.80 Q918.80 624.63 918.80 627.63 V628.98 Q918.80 631.98 915.80 631.98 H908.00 Z" fill="#ee920e"/><line x1="908.0" y1="76" x2="908.0" y2="673" stroke="#c8ccd4" stroke-width="1"/><text x="900.5" y="98.4" text-anchor="end" font-family="Liberation Sans" font-size="11.3" fill="#2f3646">Roof (13ft)</text><text x="900.5" y="135.7" text-anchor="end" font-family="Liberation Sans" font-size="11.3" fill="#2f3646">15 (13ft)</text><text x="900.5" y="173.0" text-anchor="end" font-family="Liberation Sans" font-size="11.3" fill="#2f3646">14 (13ft)</text><text x="900.5" y="210.4" text-anchor="end" font-family="Liberation Sans" font-size="11.3" fill="#2f3646">13 (13ft)</text><text x="900.5" y="247.7" text-anchor="end" font-family="Liberation Sans" font-size="11.3" fill="#2f3646">12 (13ft)</text><text x="900.5" y="285.0" text-anchor="end" font-family="Liberation Sans" font-size="11.3" fill="#2f3646">11 (13ft)</text><text x="900.5" y="322.3" text-anchor="end" font-family="Liberation Sans" font-size="11.3" fill="#2f3646">10 (13ft)</text><text x="900.5" y="359.6" text-anchor="end" font-family="Liberation Sans" font-size="11.3" fill="#2f3646">9 (13ft)</text><text x="900.5" y="397.0" text-anchor="end" font-family="Liberation Sans" font-size="11.3" fill="#2f3646">8 (13ft)</text><text x="900.5" y="434.3" text-anchor="end" font-family="Liberation Sans" font-size="11.3" fill="#2f3646">7 (13ft)</text><text x="900.5" y="471.6" text-anchor="end" font-family="Liberation Sans" font-size="11.3" fill="#2f3646">6 (13ft)</text><text x="900.5" y="508.9" text-anchor="end" font-family="Liberation Sans" font-size="11.3" fill="#2f3646">5 (13ft)</text><text x="900.5" y="546.2" text-anchor="end" font-family="Liberation Sans" font-size="11.3" fill="#2f3646">4 (13ft)</text><text x="900.5" y="583.6" text-anchor="end" font-family="Liberation Sans" font-size="11.3" fill="#2f3646">3 (13ft)</text><text x="900.5" y="620.9" text-anchor="end" font-family="Liberation Sans" font-size="11.3" fill="#2f3646">2 (28ft)</text><text x="900.5" y="658.2" text-anchor="end" font-family="Liberation Sans" font-size="11.3" fill="#2f3646">Ground (0ft)</text><text x="908.0" y="691" text-anchor="middle" font-family="Liberation Sans" font-size="10" fill="#4a5262">0.000</text><text x="973.6" y="691" text-anchor="middle" font-family="Liberation Sans" font-size="10" fill="#4a5262">1.000</text><text x="1039.3" y="691" text-anchor="middle" font-family="Liberation Sans" font-size="10" fill="#4a5262">2.000</text><text x="1104.9" y="691" text-anchor="middle" font-family="Liberation Sans" font-size="10" fill="#4a5262">3.000</text><text x="1170.6" y="691" text-anchor="middle" font-family="Liberation Sans" font-size="10" fill="#4a5262">4.000</text><text x="1236.2" y="691" text-anchor="middle" font-family="Liberation Sans" font-size="10" fill="#4a5262">5.000</text><text x="1301.8" y="691" text-anchor="middle" font-family="Liberation Sans" font-size="10" fill="#4a5262">6.000</text><text x="1367.5" y="691" text-anchor="middle" font-family="Liberation Sans" font-size="10" fill="#4a5262">7.000</text><text x="1143" y="708" text-anchor="middle" font-family="Liberation Sans" font-size="11" fill="#364050">Drift (%)</text><rect x="1338.6" y="81.2" width="13.8" height="13.5" rx="3" fill="#4874f0"/><text x="1358" y="92.0" font-family="Liberation Sans" font-size="11" fill="#364050">NW</text><rect x="1338.6" y="103.2" width="13.8" height="13.5" rx="3" fill="#e5383b"/><text x="1358" y="114.0" font-family="Liberation Sans" font-size="11" fill="#364050">NE</text><rect x="1338.6" y="125.2" width="13.8" height="13.5" rx="3" fill="#20b074"/><text x="1358" y="136.0" font-family="Liberation Sans" font-size="11" fill="#364050">SW</text><rect x="1338.6" y="147.2" width="13.8" height="13.5" rx="3" fill="#ee920e"/><text x="1358" y="158.0" font-family="Liberation Sans" font-size="11" fill="#364050">SE</text></svg>
<div class="phdr" style="left:0;top:715px;width:690px;height:36px;border-bottom:1.5px solid #cdcdcd"></div>
<div class="icons" style="left:582px;top:715px;width:108px;height:35px"></div>
<svg class="a" style="left:16px;top:725px" width="14" height="14" viewBox="0 0 14 14"><path d="M1.5 1 V12 H12.5" fill="none" stroke="#777" stroke-width="1.1"/><path d="M3.5 8 L6 5.5 L8 7.5 L11 4.5" fill="none" stroke="#777" stroke-width="1.1"/></svg>
<div class="tab" style="left:36px;top:724px">Timeline</div>
<svg class="a" style="left:98.5px;top:729px" width="12" height="8" viewBox="0 0 12 8"><path d="M1.5 1.5 L6 6 L10.5 1.5" fill="none" stroke="#666" stroke-width="1.2"/></svg>
<div class="uline" style="left:8px;top:744px;width:111px"></div>
<svg class="a" style="left:590px;top:727px" width="92" height="14" viewBox="0 0 92 14"><rect x="1.5" y="1.5" width="9" height="9" rx="1.5" fill="none" stroke="#111" stroke-width="1.2"/><line x1="6" y1="1.5" x2="6" y2="10.5" stroke="#111" stroke-width="1.2"/><rect x="27.5" y="1.5" width="9" height="9" rx="1.5" fill="none" stroke="#111" stroke-width="1.2"/><line x1="27.5" y1="6" x2="36.5" y2="6" stroke="#111" stroke-width="1.2"/><path d="M54 2.5 L61 9.5 M61 2.5 L54 9.5" stroke="#111" stroke-width="1.3"/><circle cx="80" cy="6" r="1.1" fill="#111"/><circle cx="83.8" cy="6" r="1.1" fill="#111"/><circle cx="87.6" cy="6" r="1.1" fill="#111"/></svg>
<div class="a" style="left:690px;top:715px;width:1px;height:36px;background:#cfcfcf"></div>
<div class="phdr" style="left:691px;top:715px;width:689px;height:36px;border-bottom:1.5px solid #cdcdcd"></div>
<div class="icons" style="left:1271px;top:715px;width:109px;height:35px"></div>
<svg class="a" style="left:706px;top:725px" width="14" height="14" viewBox="0 0 14 14"><path d="M1.5 1 V12 H12.5" fill="none" stroke="#777" stroke-width="1.1"/><path d="M3.5 8 L6 5.5 L8 7.5 L11 4.5" fill="none" stroke="#777" stroke-width="1.1"/></svg>
<div class="tab" style="left:726px;top:724px">Timeline</div>
<svg class="a" style="left:788.5px;top:729px" width="12" height="8" viewBox="0 0 12 8"><path d="M1.5 1.5 L6 6 L10.5 1.5" fill="none" stroke="#666" stroke-width="1.2"/></svg>
<div class="uline" style="left:698px;top:744px;width:111px"></div>
<svg class="a" style="left:1281px;top:727px" width="92" height="14" viewBox="0 0 92 14"><rect x="1.5" y="1.5" width="9" height="9" rx="1.5" fill="none" stroke="#111" stroke-width="1.2"/><line x1="6" y1="1.5" x2="6" y2="10.5" stroke="#111" stroke-width="1.2"/><rect x="27.5" y="1.5" width="9" height="9" rx="1.5" fill="none" stroke="#111" stroke-width="1.2"/><line x1="27.5" y1="6" x2="36.5" y2="6" stroke="#111" stroke-width="1.2"/><path d="M54 2.5 L61 9.5 M61 2.5 L54 9.5" stroke="#111" stroke-width="1.3"/><circle cx="80" cy="6" r="1.1" fill="#111"/><circle cx="83.8" cy="6" r="1.1" fill="#111"/><circle cx="87.6" cy="6" r="1.1" fill="#111"/></svg>
<div class="a" style="left:0;top:752px;width:690px;height:243px;background:#fff"></div>
<div class="a" style="left:691px;top:752px;width:689px;height:243px;background:#fff"></div>
<div class="a" style="left:690px;top:792px;width:1px;height:203px;background:#d4d4d4"></div>
<div class="a b" style="left:12px;top:761px;font-size:13.5px;color:#2a2a2a">Frame:</div>
<div class="a mono" style="left:63px;top:759.5px;font-size:14.7px;color:#2a2a2a">7291</div>
<div class="a" style="left:107px;top:762px;width:1px;height:13px;background:#d0d0d0"></div>
<div class="a b" style="left:117px;top:761px;font-size:13.5px;color:#2a2a2a">Time:</div>
<div class="a mono" style="left:160px;top:759.5px;font-size:14.7px;color:#2a2a2a">+72.900s</div>
<div class="a" style="left:237px;top:764px;width:8px;height:8px;border-radius:50%;background:#ef6464"></div>
<div class="a" style="left:249px;top:761px;font-size:12px;color:#666">X:</div>
<div class="a mono" style="left:264px;top:761px;font-size:12.4px;color:#333">&#8722;0.057</div>
<div class="a" style="left:316px;top:764px;width:8px;height:8px;border-radius:50%;background:#44d070"></div>
<div class="a" style="left:328px;top:761px;font-size:12px;color:#666">Y:</div>
<div class="a mono" style="left:342px;top:761px;font-size:12.4px;color:#333">&#8722;0.101</div>
<div class="a" style="left:614.5px;top:761.5px;width:63px;height:23px;border:1px solid #dcdcdc;border-radius:7px;background:#fff"></div>
<div class="a b" style="left:627px;top:766.5px;font-size:11.5px;color:#222">X, Y</div>
<svg class="a" style="left:659px;top:770px" width="12" height="8" viewBox="0 0 12 8"><path d="M1.5 1.5 L6 6 L10.5 1.5" fill="none" stroke="#999" stroke-width="1"/></svg>
<div class="a b" style="left:702px;top:761px;font-size:13.5px;color:#2a2a2a">Frame:</div>
<div class="a mono" style="left:753px;top:759.5px;font-size:14.7px;color:#2a2a2a">7291</div>
<div class="a" style="left:797px;top:762px;width:1px;height:13px;background:#d0d0d0"></div>
<div class="a b" style="left:807px;top:761px;font-size:13.5px;color:#2a2a2a">Time:</div>
<div class="a mono" style="left:850px;top:759.5px;font-size:14.7px;color:#2a2a2a">+72.900s</div>
<div class="a" style="left:927px;top:764px;width:8px;height:8px;border-radius:50%;background:#1e9a40"></div>
<div class="a b" style="left:939px;top:762px;font-size:11.5px;color:#666">Disp X:</div>
<div class="a mono" style="left:981px;top:761px;font-size:12.4px;color:#333">&#8722;24.701</div>
<div class="a" style="left:1042px;top:764px;width:8px;height:8px;border-radius:50%;background:#5a9a14"></div>
<div class="a b" style="left:1054px;top:762px;font-size:11.5px;color:#666">Disp Y:</div>
<div class="a mono" style="left:1095px;top:761px;font-size:12.4px;color:#333">+21.657</div>
<div class="a" style="left:1263px;top:761.5px;width:106px;height:23px;border:1px solid #dcdcdc;border-radius:7px;background:#fff"></div>
<div class="a b" style="left:1269.5px;top:766.5px;font-size:11.2px;color:#222">Disp X, Disp Y</div>
<svg class="a" style="left:1351px;top:770px" width="12" height="8" viewBox="0 0 12 8"><path d="M1.5 1.5 L6 6 L10.5 1.5" fill="none" stroke="#999" stroke-width="1"/></svg>
<div class="a" style="left:0;top:791px;width:690px;height:1px;background:#eeeeee"></div>
<div class="a" style="left:691px;top:791px;width:689px;height:1px;background:#eeeeee"></div>
<svg class="a" style="left:0;top:0" width="1380" height="995" viewBox="0 0 1380 995"><line x1="40.4" y1="797.5" x2="670.6999999999999" y2="797.5" stroke="#e9eaf0" stroke-width="1"/><text x="37.4" y="801.1" text-anchor="end" font-family="Liberation Sans" font-size="10.5" fill="#555d6e">0.9</text><line x1="40.4" y1="810.5" x2="670.6999999999999" y2="810.5" stroke="#e9eaf0" stroke-width="1"/><text x="37.4" y="814.1" text-anchor="end" font-family="Liberation Sans" font-size="10.5" fill="#555d6e">0.6</text><line x1="40.4" y1="824.5" x2="670.6999999999999" y2="824.5" stroke="#e9eaf0" stroke-width="1"/><text x="37.4" y="828.1" text-anchor="end" font-family="Liberation Sans" font-size="10.5" fill="#555d6e">0.3</text><line x1="40.4" y1="837.5" x2="670.6999999999999" y2="837.5" stroke="#e9eaf0" stroke-width="1"/><text x="37.4" y="841.1" text-anchor="end" font-family="Liberation Sans" font-size="10.5" fill="#555d6e">0</text><line x1="40.4" y1="850.5" x2="670.6999999999999" y2="850.5" stroke="#e9eaf0" stroke-width="1"/><text x="37.4" y="854.1" text-anchor="end" font-family="Liberation Sans" font-size="10.5" fill="#555d6e">-0.3</text><line x1="40.4" y1="864.5" x2="670.6999999999999" y2="864.5" stroke="#e9eaf0" stroke-width="1"/><text x="37.4" y="868.1" text-anchor="end" font-family="Liberation Sans" font-size="10.5" fill="#555d6e">-0.6</text><line x1="40.4" y1="877.5" x2="670.6999999999999" y2="877.5" stroke="#e9eaf0" stroke-width="1"/><text x="37.4" y="881.1" text-anchor="end" font-family="Liberation Sans" font-size="10.5" fill="#555d6e">-0.9</text><line x1="156.5" y1="797.2" x2="156.5" y2="877.6" stroke="#e9eaf0" stroke-width="1"/><line x1="267.5" y1="797.2" x2="267.5" y2="877.6" stroke="#e9eaf0" stroke-width="1"/><line x1="378.5" y1="797.2" x2="378.5" y2="877.6" stroke="#e9eaf0" stroke-width="1"/><line x1="489.5" y1="797.2" x2="489.5" y2="877.6" stroke="#e9eaf0" stroke-width="1"/><line x1="600.5" y1="797.2" x2="600.5" y2="877.6" stroke="#e9eaf0" stroke-width="1"/><line x1="670.7" y1="797.2" x2="670.7" y2="877.6" stroke="#e6e6ec" stroke-width="1"/><line x1="45.4" y1="797.2" x2="45.4" y2="877.6" stroke="#d4d6de" stroke-width="1"/><path d="M45.4 837.4 L46.0 837.4 L46.5 837.4 L47.1 837.4 L47.6 837.4 L48.2 837.4 L48.7 837.4 L49.3 837.4 L49.8 837.4 L50.4 837.4 L51.0 837.4 L51.5 837.4 L52.1 837.4 L52.6 837.4 L53.2 837.4 L53.7 837.4 L54.3 837.4 L54.8 837.4 L55.4 837.4 L55.9 837.4 L56.5 837.4 L57.1 837.4 L57.6 837.4 L58.2 837.4 L58.7 837.4 L59.3 837.4 L59.8 837.4 L60.4 837.4 L60.9 837.4 L61.5 837.4 L62.1 837.4 L62.6 837.4 L63.2 837.4 L63.7 837.4 L64.3 837.4 L64.8 837.4 L65.4 837.3 L65.9 837.4 L66.5 837.4 L67.0 837.4 L67.6 837.4 L68.2 837.4 L68.7 837.4 L69.3 837.4 L69.8 837.4 L70.4 837.4 L70.9 837.4 L71.5 837.4 L72.0 837.4 L72.6 837.4 L73.2 837.4 L73.7 837.4 L74.3 837.4 L74.8 837.4 L75.4 837.4 L75.9 837.4 L76.5 837.4 L77.0 837.4 L77.6 837.4 L78.2 837.4 L78.7 837.4 L79.3 837.4 L79.8 837.4 L80.4 837.4 L80.9 837.4 L81.5 837.4 L82.0 837.4 L82.6 837.4 L83.1 837.4 L83.7 837.5 L84.3 837.5 L84.8 837.5 L85.4 837.4 L85.9 837.4 L86.5 837.4 L87.0 837.4 L87.6 837.4 L88.1 837.4 L88.7 837.4 L89.3 837.4 L89.8 837.4 L90.4 837.5 L90.9 837.5 L91.5 837.4 L92.0 837.4 L92.6 837.4 L93.1 837.5 L93.7 837.5 L94.2 837.4 L94.8 837.4 L95.4 837.5 L95.9 837.5 L96.5 837.5 L97.0 837.5 L97.6 837.5 L98.1 837.5 L98.7 837.5 L99.2 837.5 L99.8 837.5 L100.4 837.5 L100.9 837.5 L101.5 837.5 L102.0 837.5 L102.6 837.5 L103.1 837.6 L103.7 837.6 L104.2 837.5 L104.8 837.5 L105.4 837.5 L105.9 837.5 L106.5 837.5 L107.0 837.5 L107.6 837.6 L108.1 837.6 L108.7 837.5 L109.2 837.5 L109.8 837.5 L110.3 837.6 L110.9 837.6 L111.5 837.5 L112.0 837.5 L112.6 837.5 L113.1 837.5 L113.7 837.5 L114.2 837.5 L114.8 837.5 L115.3 837.6 L115.9 837.6 L116.5 837.5 L117.0 837.5 L117.6 837.5 L118.1 837.6 L118.7 837.6 L119.2 837.6 L119.8 837.6 L120.3 837.6 L120.9 837.6 L121.5 837.6 L122.0 837.6 L122.6 837.6 L123.1 837.6 L123.7 837.6 L124.2 837.6 L124.8 837.6 L125.3 837.6 L125.9 837.6 L126.4 837.6 L127.0 837.6 L127.6 837.6 L128.1 837.6 L128.7 837.7 L129.2 837.7 L129.8 837.6 L130.3 837.6 L130.9 837.6 L131.4 837.6 L132.0 837.7 L132.6 837.7 L133.1 837.6 L133.7 837.7 L134.2 837.7 L134.8 837.7 L135.3 837.7 L135.9 837.6 L136.4 837.6 L137.0 837.7 L137.5 837.7 L138.1 837.7 L138.7 837.7 L139.2 837.7 L139.8 837.7 L140.3 837.7 L140.9 837.7 L141.4 837.7 L142.0 837.7 L142.5 837.7 L143.1 837.7 L143.7 837.7 L144.2 837.7 L144.8 837.7 L145.3 837.8 L145.9 837.8 L146.4 837.8 L147.0 837.7 L147.5 837.7 L148.1 837.7 L148.7 837.7 L149.2 837.7 L149.8 837.8 L150.3 837.8 L150.9 837.8 L151.4 837.8 L152.0 837.8 L152.5 837.8 L153.1 837.7 L153.6 837.7 L154.2 837.7 L154.8 837.8 L155.3 837.8 L155.9 837.8 L156.4 837.8 L157.0 837.8 L157.5 837.9 L158.1 837.9 L158.6 837.8 L159.2 837.8 L159.8 837.8 L160.3 837.8 L160.9 837.8 L161.4 837.8 L162.0 837.8 L162.5 837.9 L163.1 837.9 L163.6 837.9 L164.2 837.8 L164.7 837.8 L165.3 837.8 L165.9 837.8 L166.4 837.9 L167.0 837.9 L167.5 837.9 L168.1 837.9 L168.6 837.9 L169.2 837.9 L169.7 837.9 L170.3 837.9 L170.9 837.9 L171.4 837.9 L172.0 838.0 L172.5 838.0 L173.1 837.9 L173.6 837.9 L174.2 837.9 L174.7 837.9 L175.3 837.9 L175.9 837.9 L176.4 838.0 L177.0 838.0 L177.5 837.9 L178.1 837.9 L178.6 837.9 L179.2 837.9 L179.7 838.0 L180.3 838.0 L180.8 838.0 L181.4 838.0 L182.0 838.0 L182.5 838.0 L183.1 838.0 L183.6 838.0 L184.2 838.0 L184.7 838.0 L185.3 838.0 L185.8 838.0 L186.4 838.0 L187.0 838.0 L187.5 838.0 L188.1 838.0 L188.6 838.1 L189.2 838.1 L189.7 838.1 L190.3 838.1 L190.8 838.1 L191.4 838.1 L191.9 838.1 L192.5 838.1 L193.1 838.1 L193.6 838.1 L194.2 838.0 L194.7 838.1 L195.3 838.1 L195.8 838.1 L196.4 838.1 L196.9 838.1 L197.5 838.1 L198.1 838.1 L198.6 838.2 L199.2 838.2 L199.7 838.1 L200.3 838.1 L200.8 838.1 L201.4 838.1 L201.9 838.1 L202.5 838.1 L203.1 838.1 L203.6 838.1 L204.2 838.2 L204.7 838.2 L205.3 838.2 L205.8 838.1 L206.4 838.1 L206.9 838.2 L207.5 838.2 L208.0 838.2 L208.6 838.2 L209.2 838.2 L209.7 838.2 L210.3 838.3 L210.8 838.3 L211.4 838.2 L211.9 838.2 L212.5 838.1 L213.0 838.1 L213.6 838.2 L214.2 838.3 L214.7 838.3 L215.3 838.2 L215.8 838.2 L216.4 838.2 L216.9 838.3 L217.5 838.2 L218.0 838.3 L218.6 838.3 L219.1 838.3 L219.7 838.3 L220.3 838.3 L220.8 838.3 L221.4 838.3 L221.9 838.3 L222.5 838.4 L223.0 838.4 L223.6 838.1 L224.1 838.1 L224.7 838.4 L225.3 838.6 L225.8 838.5 L226.4 838.3 L226.9 838.4 L227.5 838.3 L228.0 838.3 L228.6 838.3 L229.1 838.3 L229.7 838.2 L230.3 838.1 L230.8 838.1 L231.4 838.1 L231.9 838.5 L232.5 838.7 L233.0 838.5 L233.6 838.7 L234.1 838.5 L234.7 838.0 L235.2 838.2 L235.8 838.7 L236.4 838.3 L236.9 837.6 L237.5 837.8 L238.0 838.4 L238.6 838.7 L239.1 838.8 L239.7 838.9 L240.2 838.8 L240.8 838.6 L241.4 838.4 L241.9 838.2 L242.5 838.6 L243.0 838.8 L243.6 838.6 L244.1 838.8 L244.7 838.9 L245.2 838.7 L245.8 838.8 L246.4 839.0 L246.9 838.4 L247.5 837.9 L248.0 838.4 L248.6 838.5 L249.1 838.0 L249.7 837.9 L250.2 837.9 L250.8 838.4 L251.3 839.4 L251.9 839.3 L252.5 838.6 L253.0 838.1 L253.6 837.8 L254.1 838.2 L254.7 838.6 L255.2 838.7 L255.8 838.6 L256.3 838.4 L256.9 838.3 L257.5 838.8 L258.0 839.3 L258.6 839.0 L259.1 838.0 L259.7 837.5 L260.2 837.7 L260.8 837.8 L261.3 838.0 L261.9 838.3 L262.4 838.6 L263.0 839.1 L263.6 839.2 L264.1 838.9 L264.7 838.6 L265.2 838.8 L265.8 838.8 L266.3 838.2 L266.9 838.1 L267.4 839.0 L268.0 839.2 L268.6 838.8 L269.1 838.9 L269.7 838.9 L270.2 838.9 L270.8 839.4 L271.3 839.5 L271.9 839.0 L272.4 839.0 L273.0 838.8 L273.6 837.8 L274.1 837.0 L274.7 836.8 L275.2 837.8 L275.8 838.8 L276.3 838.4 L276.9 838.0 L277.4 838.3 L278.0 838.4 L278.5 838.7 L279.1 839.1 L279.7 839.1 L280.2 839.3 L280.8 839.3 L281.3 838.5 L281.9 838.3 L282.4 838.8 L283.0 839.8 L283.5 839.9 L284.1 839.1 L284.7 839.2 L285.2 839.7 L285.8 839.7 L286.3 839.6 L286.9 839.2 L287.4 838.7 L288.0 838.6 L288.5 838.6 L289.1 839.0 L289.6 839.5 L290.2 839.5 L290.8 839.3 L291.3 839.1 L291.9 838.7 L292.4 838.1 L293.0 838.6 L293.5 839.7 L294.1 839.4 L294.6 838.4 L295.2 837.6 L295.8 838.3 L296.3 839.4 L296.9 839.3 L297.4 838.9 L298.0 838.9 L298.5 839.3 L299.1 839.3 L299.6 839.1 L300.2 839.2 L300.8 839.7 L301.3 839.9 L301.9 839.0 L302.4 838.4 L303.0 839.0 L303.5 839.5 L304.1 839.0 L304.6 838.7 L305.2 839.0 L305.7 838.7 L306.3 838.6 L306.9 839.4 L307.4 840.1 L308.0 840.3 L308.5 840.1 L309.1 839.8 L309.6 839.9 L310.2 839.2 L310.7 838.4 L311.3 838.7 L311.9 838.6 L312.4 838.0 L313.0 839.0 L313.5 839.9 L314.1 839.5 L314.6 839.0 L315.2 838.8 L315.7 839.5 L316.3 840.1 L316.8 840.0 L317.4 839.7 L318.0 839.6 L318.5 839.5 L319.1 839.5 L319.6 839.3 L320.2 838.6 L320.7 838.4 L321.3 839.1 L321.8 839.9 L322.4 839.8 L323.0 838.7 L323.5 838.0 L324.1 839.0 L324.6 839.9 L325.2 840.0 L325.7 840.2 L326.3 840.0 L326.8 839.2 L327.4 838.5 L328.0 838.9 L328.5 839.9 L329.1 840.1 L329.6 839.5 L330.2 839.5 L330.7 840.1 L331.3 840.1 L331.8 839.2 L332.4 838.5 L332.9 838.6 L333.5 839.0 L334.1 839.3 L334.6 839.1 L335.2 838.6 L335.7 838.4 L336.3 839.4 L336.8 839.4 L337.4 838.7 L337.9 838.7 L338.5 838.6 L339.1 838.9 L339.6 839.3 L340.2 839.8 L340.7 840.3 L341.3 839.6 L341.8 838.2 L342.4 838.2 L342.9 838.5 L343.5 838.5 L344.0 838.5 L344.6 838.7 L345.2 839.2 L345.7 839.2 L346.3 838.9 L346.8 839.6 L347.4 840.2 L347.9 839.9 L348.5 839.5 L349.0 839.3 L349.6 839.8 L350.2 840.2 L350.7 839.4 L351.3 838.6 L351.8 838.9 L352.4 839.3 L352.9 839.2 L353.5 838.9 L354.0 838.4 L354.6 838.8 L355.2 839.5 L355.7 839.1 L356.3 839.1 L356.8 838.9 L357.4 838.2 L357.9 838.3 L358.5 838.1 L359.0 838.6 L359.6 839.5 L360.1 839.2 L360.7 838.9 L361.3 839.9 L361.8 840.8 L362.4 840.3 L362.9 839.9 L363.5 839.6 L364.0 838.8 L364.6 839.2 L365.1 839.8 L365.7 839.9 L366.3 840.1 L366.8 840.0 L367.4 839.5 L367.9 839.4 L368.5 839.6 L369.0 840.0 L369.6 840.1 L370.1 839.7 L370.7 839.6 L371.3 839.8 L371.8 840.0 L372.4 839.9 L372.9 839.8 L373.5 839.4 L374.0 838.5 L374.6 838.8 L375.1 839.7 L375.7 839.4 L376.2 838.4 L376.8 838.2 L377.4 839.3 L377.9 840.3 L378.5 840.0 L379.0 839.4 L379.6 839.9 L380.1 840.6 L380.7 840.7 L381.2 840.2 L381.8 839.9 L382.4 839.8 L382.9 838.9 L383.5 837.5 L384.0 838.0 L384.6 839.5 L385.1 839.6 L385.7 839.4 L386.2 839.3 L386.8 839.1 L387.3 839.5 L387.9 839.9 L388.5 839.8 L389.0 839.3 L389.6 838.6 L390.1 839.1 L390.7 840.2 L391.2 840.4 L391.8 839.9 L392.3 839.2 L392.9 838.9 L393.5 839.0 L394.0 839.9 L394.6 840.5 L395.1 839.8 L395.7 839.2 L396.2 839.6 L396.8 840.1 L397.3 840.1 L397.9 840.1 L398.5 840.0 L399.0 839.4 L399.6 839.5 L400.1 840.4 L400.7 841.4 L401.2 841.6 L401.8 840.3 L402.3 839.1 L402.9 839.9 L403.4 841.1 L404.0 840.6 L404.6 839.1 L405.1 838.2 L405.7 838.4 L406.2 839.0 L406.8 839.7 L407.3 840.2 L407.9 840.2 L408.4 840.1 L409.0 840.1 L409.6 839.9 L410.1 839.7 L410.7 839.1 L411.2 838.5 L411.8 838.7 L412.3 839.2 L412.9 840.0 L413.4 840.5 L414.0 839.9 L414.5 839.6 L415.1 839.7 L415.7 839.3 L416.2 839.3 L416.8 839.6 L417.3 840.0 L417.9 839.8 L418.4 839.1 L419.0 839.4 L419.5 839.6 L420.1 839.6 L420.7 839.8 L421.2 840.1 L421.8 839.8 L422.3 838.7 L422.9 838.5 L423.4 839.5 L424.0 839.6 L424.5 839.3 L425.1 839.5 L425.7 837.4 L426.2 839.4 L426.8 840.0 L427.3 839.0 L427.9 840.4 L428.4 835.0 L429.0 831.4 L429.5 828.5 L430.1 843.0 L430.6 851.0 L431.2 840.9 L431.8 821.3 L432.3 840.8 L432.9 855.3 L433.4 838.7 L434.0 818.2 L434.5 814.5 L435.1 806.3 L435.6 829.1 L436.2 852.9 L436.8 835.3 L437.3 813.0 L437.9 830.5 L438.4 848.3 L439.0 827.9 L439.5 811.8 L440.1 833.2 L440.6 856.3 L441.2 842.9 L441.7 829.3 L442.3 851.2 L442.9 867.1 L443.4 842.0 L444.0 820.4 L444.5 832.8 L445.1 846.5 L445.6 838.1 L446.2 826.2 L446.7 831.7 L447.3 836.8 L447.9 842.0 L448.4 840.8 L449.0 840.1 L449.5 840.2 L450.1 840.2 L450.6 838.9 L451.2 838.2 L451.7 838.2 L452.3 838.0 L452.9 837.5 L453.4 837.3 L454.0 837.2 L454.5 836.9 L455.1 836.0 L455.6 836.5 L456.2 837.7 L456.7 836.8 L457.3 836.2 L457.8 836.9 L458.4 836.6 L459.0 835.7 L459.5 836.9 L460.1 838.3 L460.6 836.7 L461.2 834.6 L461.7 833.8 L462.3 833.8 L462.8 833.4 L463.4 831.9 L464.0 832.0 L464.5 832.7 L465.1 832.2 L465.6 832.2 L466.2 833.2 L466.7 833.4 L467.3 832.6 L467.8 833.5 L468.4 835.6 L468.9 835.5 L469.5 834.5 L470.1 834.5 L470.6 834.9 L471.2 835.2 L471.7 835.2 L472.3 835.3 L472.8 836.5 L473.4 837.0 L473.9 836.5 L474.5 836.3 L475.1 836.4 L475.6 837.2 L476.2 838.5 L476.7 838.8 L477.3 839.7 L477.8 841.1 L478.4 840.2 L478.9 838.6 L479.5 839.1 L480.1 841.2 L480.6 842.4 L481.2 841.6 L481.7 840.3 L482.3 838.4 L482.8 836.7 L483.4 836.9 L483.9 838.0 L484.5 839.0 L485.0 839.1 L485.6 838.3 L486.2 836.7 L486.7 835.4 L487.3 836.8 L487.8 837.6 L488.4 836.7 L488.9 837.4 L489.5 837.8 L490.0 837.0 L490.6 837.7 L491.2 838.4 L491.7 837.5 L492.3 837.0 L492.8 837.2 L493.4 836.7 L493.9 836.8 L494.5 838.6 L495.0 840.3 L495.6 840.1 L496.2 838.0 L496.7 836.1 L497.3 835.6 L497.8 835.2 L498.4 835.4 L498.9 836.3 L499.5 837.2 L500.0 837.9 L500.6 837.3 L501.1 836.9 L501.7 837.5 L502.3 838.2 L502.8 838.4 L503.4 837.2 L503.9 836.5 L504.5 837.0 L505.0 837.4 L505.6 837.6 L506.1 837.8 L506.7 837.9 L507.3 837.6 L507.8 837.3 L508.4 837.5 L508.9 838.2 L509.5 838.6 L510.0 837.7 L510.6 836.1 L511.1 835.9 L511.7 836.8 L512.2 836.6 L512.8 836.4 L513.4 837.4 L513.9 838.3 L514.5 838.1 L515.0 837.6 L515.6 836.6 L516.1 836.2 L516.7 837.6 L517.2 838.8 L517.8 837.6 L518.4 837.1 L518.9 837.7 L519.5 837.1 L520.0 837.1 L520.6 837.8 L521.1 838.3 L521.7 838.5 L522.2 837.0 L522.8 835.3 L523.4 836.1 L523.9 837.4 L524.5 838.0 L525.0 838.3 L525.6 838.3 L526.1 837.9 L526.7 837.2 L527.2 837.0 L527.8 837.3 L528.3 837.6 L528.9 837.2 L529.5 836.9 L530.0 837.0 L530.6 837.5 L531.1 837.6 L531.7 837.0 L532.2 837.3 L532.8 837.9 L533.3 838.0 L533.9 837.7 L534.5 837.5 L535.0 837.2 L535.6 837.3 L536.1 838.2 L536.7 838.4 L537.2 837.3 L537.8 836.4 L538.3 837.0 L538.9 837.7 L539.4 837.3 L540.0 836.9 L540.6 837.0 L541.1 837.1 L541.7 837.4 L542.2 837.1 L542.8 836.9 L543.3 837.9 L543.9 838.5 L544.4 837.8 L545.0 837.9 L545.6 838.7 L546.1 838.2 L546.7 837.3 L547.2 837.3 L547.8 837.8 L548.3 837.9 L548.9 836.7 L549.4 836.1 L550.0 837.2 L550.6 838.2 L551.1 838.0 L551.7 837.2 L552.2 837.3 L552.8 837.5 L553.3 836.7 L553.9 836.4 L554.4 837.3 L555.0 838.3 L555.5 837.8 L556.1 837.4 L556.7 837.7 L557.2 836.8 L557.8 836.1 L558.3 836.6 L558.9 837.7 L559.4 837.7 L560.0 836.8 L560.5 836.3 L561.1 836.1 L561.7 836.5 L562.2 837.2 L562.8 838.1 L563.3 838.3 L563.9 836.9 L564.4 836.1 L565.0 837.2 L565.5 837.6 L566.1 837.1 L566.6 837.4 L567.2 838.2 L567.8 838.4 L568.3 837.6 L568.9 836.8 L569.4 837.0 L570.0 836.7 L570.5 835.7 L571.1 835.6 L571.6 835.8 L572.2 836.5 L572.8 837.7 L573.3 838.1 L573.9 837.9 L574.4 837.1 L575.0 836.6 L575.5 837.4 L576.1 837.8 L576.6 837.5 L577.2 836.7 L577.8 836.6 L578.3 836.8 L578.9 836.5 L579.4 836.6 L580.0 836.7 L580.5 837.1 L581.1 837.7 L581.6 837.7 L582.2 837.4 L582.7 837.1 L583.3 836.6 L583.9 836.3 L584.4 837.1 L585.0 837.8 L585.5 838.0 L586.1 838.3 L586.6 838.5 L587.2 838.0 L587.7 837.2 L588.3 837.2 L588.9 837.4 L589.4 837.0 L590.0 836.7 L590.5 836.7 L591.1 837.0 L591.6 837.5 L592.2 837.8 L592.7 837.8 L593.3 837.8 L593.8 837.9 L594.4 837.8 L595.0 837.6 L595.5 837.6 L596.1 837.7 L596.6 837.4 L597.2 837.0 L597.7 837.5 L598.3 837.9 L598.8 837.8 L599.4 838.1 L600.0 838.1 L600.5 838.0 L601.1 838.8 L601.6 839.1 L602.2 837.8 L602.7 837.2 L603.3 838.1 L603.8 838.0 L604.4 837.8 L605.0 838.3 L605.5 838.5 L606.1 838.1 L606.6 838.2 L607.2 838.1 L607.7 837.5 L608.3 837.2 L608.8 837.4 L609.4 837.9 L609.9 838.4 L610.5 838.2 L611.1 838.0 L611.6 837.8 L612.2 837.8 L612.7 837.7 L613.3 837.4 L613.8 837.0 L614.4 837.2 L614.9 837.6 L615.5 837.3 L616.1 836.8 L616.6 837.1 L617.2 837.6 L617.7 837.6 L618.3 837.4 L618.8 837.1 L619.4 837.2 L619.9 836.9 L620.5 836.8 L621.1 837.7 L621.6 838.3 L622.2 838.4 L622.7 838.1 L623.3 837.3 L623.8 836.9 L624.4 837.2 L624.9 837.8 L625.5 837.6 L626.0 837.2 L626.6 837.2 L627.2 837.3 L627.7 837.4 L628.3 837.4 L628.8 837.4 L629.4 837.4 L629.9 837.4 L630.5 837.4 L631.0 837.4 L631.6 837.4 L632.2 837.4 L632.7 837.4 L633.3 837.4 L633.8 837.4 L634.4 837.4 L634.9 837.4 L635.5 837.4 L636.0 837.4 L636.6 837.4 L637.1 837.3 L637.7 837.4 L638.3 837.4 L638.8 837.4 L639.4 837.4 L639.9 837.4 L640.5 837.4 L641.0 837.4 L641.6 837.4 L642.1 837.4 L642.7 837.4 L643.3 837.4 L643.8 837.4 L644.4 837.4 L644.9 837.4 L645.5 837.4 L646.0 837.3 L646.6 837.3 L647.1 837.4 L647.7 837.4 L648.3 837.4 L648.8 837.4 L649.4 837.4 L649.9 837.4 L650.5 837.4 L651.0 837.4 L651.6 837.4 L652.1 837.5 L652.7 837.4 L653.2 837.4 L653.8 837.4 L654.4 837.4 L654.9 837.4 L655.5 837.4 L656.0 837.4 L656.6 837.4 L657.1 837.4 L657.7 837.5 L658.2 837.4 L658.8 837.4 L659.4 837.4 L659.9 837.4 L660.5 837.4 L661.0 837.4 L661.6 837.4 L662.1 837.4 L662.7 837.4 L663.2 837.3 L663.8 837.3 L664.3 837.4 L664.9 837.4 L665.5 837.4 L666.0 837.4 L666.6 837.4 L667.1 837.4 L667.7 837.4 L668.2 837.4 L668.8 837.4 L669.3 837.4 L669.9 837.4" fill="none" stroke="#ef6262" stroke-width="2" stroke-linejoin="round"/><line x1="450.1" y1="797.2" x2="450.1" y2="877.6" stroke="#6a7282" stroke-width="1"/><circle cx="450.1" cy="839.9" r="3.8" fill="#ef6262" stroke="#fff" stroke-width="1.5"/><text x="55.6" y="810.3" font-family="Liberation Sans" font-size="11" font-weight="bold" fill="#ef6262">X Ground Motion</text><line x1="40.4" y1="889.5" x2="670.6999999999999" y2="889.5" stroke="#e9eaf0" stroke-width="1"/><text x="37.4" y="893.1" text-anchor="end" font-family="Liberation Sans" font-size="10.5" fill="#555d6e">0.9</text><line x1="40.4" y1="900.5" x2="670.6999999999999" y2="900.5" stroke="#e9eaf0" stroke-width="1"/><text x="37.4" y="904.1" text-anchor="end" font-family="Liberation Sans" font-size="10.5" fill="#555d6e">0.6</text><line x1="40.4" y1="912.5" x2="670.6999999999999" y2="912.5" stroke="#e9eaf0" stroke-width="1"/><text x="37.4" y="916.1" text-anchor="end" font-family="Liberation Sans" font-size="10.5" fill="#555d6e">0.3</text><line x1="40.4" y1="923.5" x2="670.6999999999999" y2="923.5" stroke="#e9eaf0" stroke-width="1"/><text x="37.4" y="927.1" text-anchor="end" font-family="Liberation Sans" font-size="10.5" fill="#555d6e">0</text><line x1="40.4" y1="935.5" x2="670.6999999999999" y2="935.5" stroke="#e9eaf0" stroke-width="1"/><text x="37.4" y="939.1" text-anchor="end" font-family="Liberation Sans" font-size="10.5" fill="#555d6e">-0.3</text><line x1="40.4" y1="947.5" x2="670.6999999999999" y2="947.5" stroke="#e9eaf0" stroke-width="1"/><text x="37.4" y="951.1" text-anchor="end" font-family="Liberation Sans" font-size="10.5" fill="#555d6e">-0.6</text><line x1="40.4" y1="958.5" x2="670.6999999999999" y2="958.5" stroke="#e9eaf0" stroke-width="1"/><text x="37.4" y="962.1" text-anchor="end" font-family="Liberation Sans" font-size="10.5" fill="#555d6e">-0.9</text><line x1="40.4" y1="970.5" x2="670.6999999999999" y2="970.5" stroke="#e9eaf0" stroke-width="1"/><text x="37.4" y="974.1" text-anchor="end" font-family="Liberation Sans" font-size="10.5" fill="#555d6e">-1.2</text><line x1="156.5" y1="889.2" x2="156.5" y2="970.2" stroke="#e9eaf0" stroke-width="1"/><line x1="267.5" y1="889.2" x2="267.5" y2="970.2" stroke="#e9eaf0" stroke-width="1"/><line x1="378.5" y1="889.2" x2="378.5" y2="970.2" stroke="#e9eaf0" stroke-width="1"/><line x1="489.5" y1="889.2" x2="489.5" y2="970.2" stroke="#e9eaf0" stroke-width="1"/><line x1="600.5" y1="889.2" x2="600.5" y2="970.2" stroke="#e9eaf0" stroke-width="1"/><line x1="670.7" y1="889.2" x2="670.7" y2="970.2" stroke="#e6e6ec" stroke-width="1"/><line x1="45.4" y1="889.2" x2="45.4" y2="970.2" stroke="#d4d6de" stroke-width="1"/><path d="M45.4 923.9 L46.0 923.9 L46.5 923.9 L47.1 923.9 L47.6 923.9 L48.2 923.9 L48.7 923.9 L49.3 923.9 L49.8 923.9 L50.4 923.9 L51.0 923.9 L51.5 923.9 L52.1 923.9 L52.6 923.9 L53.2 923.9 L53.7 924.0 L54.3 924.0 L54.8 923.9 L55.4 923.9 L55.9 923.9 L56.5 923.9 L57.1 923.9 L57.6 924.0 L58.2 923.9 L58.7 923.9 L59.3 923.9 L59.8 923.9 L60.4 923.9 L60.9 924.0 L61.5 923.9 L62.1 923.9 L62.6 923.9 L63.2 923.9 L63.7 923.9 L64.3 923.9 L64.8 923.9 L65.4 923.9 L65.9 923.9 L66.5 923.9 L67.0 923.9 L67.6 923.9 L68.2 923.9 L68.7 923.9 L69.3 923.9 L69.8 923.9 L70.4 923.9 L70.9 924.0 L71.5 924.0 L72.0 923.9 L72.6 923.9 L73.2 923.9 L73.7 923.9 L74.3 923.9 L74.8 923.9 L75.4 923.9 L75.9 923.9 L76.5 923.9 L77.0 923.9 L77.6 923.9 L78.2 923.9 L78.7 924.0 L79.3 924.0 L79.8 924.0 L80.4 923.9 L80.9 923.9 L81.5 923.8 L82.0 923.9 L82.6 923.9 L83.1 923.9 L83.7 923.9 L84.3 924.0 L84.8 924.0 L85.4 923.9 L85.9 924.0 L86.5 924.0 L87.0 924.0 L87.6 923.9 L88.1 923.9 L88.7 923.9 L89.3 923.9 L89.8 923.9 L90.4 923.9 L90.9 923.9 L91.5 923.9 L92.0 923.9 L92.6 923.9 L93.1 923.9 L93.7 923.9 L94.2 923.9 L94.8 923.9 L95.4 924.0 L95.9 923.9 L96.5 923.9 L97.0 923.9 L97.6 923.9 L98.1 923.9 L98.7 923.9 L99.2 923.9 L99.8 923.9 L100.4 923.9 L100.9 923.9 L101.5 923.9 L102.0 924.0 L102.6 924.0 L103.1 923.9 L103.7 923.9 L104.2 923.9 L104.8 923.9 L105.4 923.9 L105.9 924.0 L106.5 924.0 L107.0 923.9 L107.6 923.9 L108.1 923.9 L108.7 923.9 L109.2 923.9 L109.8 923.9 L110.3 923.9 L110.9 923.9 L111.5 923.9 L112.0 923.9 L112.6 923.9 L113.1 923.9 L113.7 923.9 L114.2 923.9 L114.8 923.9 L115.3 923.9 L115.9 923.9 L116.5 923.9 L117.0 923.9 L117.6 923.9 L118.1 923.9 L118.7 923.9 L119.2 923.9 L119.8 923.9 L120.3 923.9 L120.9 923.9 L121.5 923.9 L122.0 923.9 L122.6 923.9 L123.1 923.9 L123.7 924.0 L124.2 924.0 L124.8 923.9 L125.3 923.9 L125.9 923.9 L126.4 923.9 L127.0 923.9 L127.6 923.9 L128.1 923.9 L128.7 923.9 L129.2 923.9 L129.8 923.9 L130.3 923.9 L130.9 923.9 L131.4 923.9 L132.0 923.9 L132.6 923.9 L133.1 923.9 L133.7 923.9 L134.2 923.9 L134.8 923.9 L135.3 923.9 L135.9 923.9 L136.4 923.9 L137.0 923.9 L137.5 923.9 L138.1 923.9 L138.7 923.9 L139.2 923.9 L139.8 923.9 L140.3 923.9 L140.9 923.9 L141.4 923.9 L142.0 923.9 L142.5 923.9 L143.1 923.9 L143.7 923.9 L144.2 923.9 L144.8 923.9 L145.3 923.9 L145.9 923.9 L146.4 923.9 L147.0 923.9 L147.5 923.9 L148.1 923.9 L148.7 923.9 L149.2 923.9 L149.8 923.9 L150.3 923.9 L150.9 923.9 L151.4 923.9 L152.0 923.9 L152.5 923.9 L153.1 923.9 L153.6 923.9 L154.2 923.9 L154.8 923.9 L155.3 923.9 L155.9 923.9 L156.4 923.9 L157.0 923.9 L157.5 923.9 L158.1 923.9 L158.6 923.9 L159.2 923.9 L159.8 923.9 L160.3 923.9 L160.9 923.9 L161.4 923.9 L162.0 923.9 L162.5 923.9 L163.1 923.9 L163.6 923.9 L164.2 923.9 L164.7 923.9 L165.3 923.9 L165.9 923.9 L166.4 923.9 L167.0 923.9 L167.5 923.9 L168.1 923.9 L168.6 923.9 L169.2 923.9 L169.7 923.9 L170.3 924.0 L170.9 923.9 L171.4 923.9 L172.0 923.8 L172.5 923.9 L173.1 923.9 L173.6 923.9 L174.2 923.9 L174.7 923.9 L175.3 923.9 L175.9 923.9 L176.4 923.9 L177.0 924.0 L177.5 923.9 L178.1 923.9 L178.6 923.9 L179.2 923.9 L179.7 923.9 L180.3 923.9 L180.8 923.9 L181.4 923.9 L182.0 923.9 L182.5 923.9 L183.1 923.9 L183.6 923.9 L184.2 923.9 L184.7 923.9 L185.3 923.9 L185.8 923.9 L186.4 923.9 L187.0 923.9 L187.5 923.9 L188.1 924.0 L188.6 924.0 L189.2 923.9 L189.7 923.9 L190.3 923.9 L190.8 923.9 L191.4 923.9 L191.9 923.9 L192.5 923.9 L193.1 923.9 L193.6 923.9 L194.2 923.9 L194.7 923.9 L195.3 923.9 L195.8 923.9 L196.4 923.9 L196.9 923.9 L197.5 923.9 L198.1 923.9 L198.6 923.9 L199.2 923.9 L199.7 923.9 L200.3 923.9 L200.8 923.9 L201.4 923.9 L201.9 923.9 L202.5 923.9 L203.1 923.9 L203.6 923.9 L204.2 923.9 L204.7 923.9 L205.3 923.9 L205.8 923.9 L206.4 923.9 L206.9 923.9 L207.5 923.9 L208.0 923.9 L208.6 923.9 L209.2 923.9 L209.7 923.9 L210.3 923.9 L210.8 923.9 L211.4 923.9 L211.9 923.9 L212.5 923.9 L213.0 923.9 L213.6 923.9 L214.2 923.9 L214.7 923.9 L215.3 924.0 L215.8 924.0 L216.4 923.9 L216.9 923.9 L217.5 923.9 L218.0 923.9 L218.6 923.9 L219.1 923.9 L219.7 923.9 L220.3 923.9 L220.8 923.9 L221.4 924.0 L221.9 923.9 L222.5 923.9 L223.0 924.0 L223.6 924.1 L224.1 924.4 L224.7 924.4 L225.3 924.3 L225.8 924.2 L226.4 923.8 L226.9 923.6 L227.5 923.8 L228.0 924.0 L228.6 924.0 L229.1 924.0 L229.7 923.9 L230.3 923.9 L230.8 924.0 L231.4 924.0 L231.9 924.0 L232.5 923.9 L233.0 923.9 L233.6 924.3 L234.1 924.4 L234.7 924.1 L235.2 924.0 L235.8 924.0 L236.4 923.6 L236.9 923.5 L237.5 923.8 L238.0 924.0 L238.6 924.4 L239.1 924.5 L239.7 924.3 L240.2 923.8 L240.8 923.5 L241.4 923.8 L241.9 924.2 L242.5 924.4 L243.0 924.1 L243.6 924.0 L244.1 924.1 L244.7 924.4 L245.2 924.0 L245.8 924.1 L246.4 925.0 L246.9 925.1 L247.5 924.7 L248.0 924.8 L248.6 924.9 L249.1 924.6 L249.7 924.5 L250.2 924.8 L250.8 925.2 L251.3 924.9 L251.9 924.4 L252.5 924.7 L253.0 924.1 L253.6 923.0 L254.1 923.5 L254.7 923.9 L255.2 923.3 L255.8 923.4 L256.3 923.4 L256.9 923.3 L257.5 923.8 L258.0 924.6 L258.6 925.5 L259.1 924.8 L259.7 924.0 L260.2 924.2 L260.8 923.7 L261.3 923.0 L261.9 923.3 L262.4 923.9 L263.0 923.4 L263.6 923.0 L264.1 923.5 L264.7 924.6 L265.2 926.1 L265.8 925.8 L266.3 924.8 L266.9 924.7 L267.4 923.6 L268.0 923.3 L268.6 924.7 L269.1 925.3 L269.7 924.5 L270.2 923.7 L270.8 923.5 L271.3 923.9 L271.9 924.5 L272.4 924.6 L273.0 924.5 L273.6 924.2 L274.1 923.4 L274.7 923.8 L275.2 924.8 L275.8 924.8 L276.3 924.4 L276.9 924.1 L277.4 924.0 L278.0 923.2 L278.5 922.3 L279.1 922.3 L279.7 923.2 L280.2 923.5 L280.8 923.7 L281.3 924.5 L281.9 924.6 L282.4 924.3 L283.0 924.8 L283.5 925.7 L284.1 926.3 L284.7 925.3 L285.2 923.8 L285.8 923.6 L286.3 923.8 L286.9 924.0 L287.4 923.9 L288.0 924.1 L288.5 925.3 L289.1 925.3 L289.6 925.0 L290.2 925.5 L290.8 926.0 L291.3 926.1 L291.9 925.0 L292.4 924.0 L293.0 924.3 L293.5 924.7 L294.1 924.2 L294.6 923.4 L295.2 923.1 L295.8 923.6 L296.3 923.8 L296.9 924.0 L297.4 924.4 L298.0 923.6 L298.5 923.1 L299.1 924.2 L299.6 925.4 L300.2 925.4 L300.8 924.4 L301.3 923.8 L301.9 924.3 L302.4 924.1 L303.0 923.4 L303.5 923.4 L304.1 923.7 L304.6 923.7 L305.2 923.0 L305.7 923.1 L306.3 924.1 L306.9 923.7 L307.4 922.9 L308.0 924.3 L308.5 925.9 L309.1 925.8 L309.6 924.4 L310.2 923.8 L310.7 924.6 L311.3 925.1 L311.9 924.8 L312.4 925.0 L313.0 925.2 L313.5 924.5 L314.1 924.0 L314.6 924.2 L315.2 924.2 L315.7 923.7 L316.3 923.8 L316.8 924.0 L317.4 923.7 L318.0 923.4 L318.5 923.1 L319.1 923.0 L319.6 923.5 L320.2 923.8 L320.7 923.0 L321.3 923.1 L321.8 923.7 L322.4 923.4 L323.0 923.9 L323.5 924.7 L324.1 924.9 L324.6 924.6 L325.2 924.2 L325.7 924.0 L326.3 923.8 L326.8 924.2 L327.4 924.0 L328.0 923.1 L328.5 923.9 L329.1 925.1 L329.6 925.3 L330.2 925.1 L330.7 924.6 L331.3 924.5 L331.8 924.5 L332.4 924.7 L332.9 925.0 L333.5 923.7 L334.1 923.1 L334.6 924.3 L335.2 924.6 L335.7 923.6 L336.3 923.4 L336.8 924.2 L337.4 924.1 L337.9 923.4 L338.5 923.5 L339.1 923.4 L339.6 922.0 L340.2 922.3 L340.7 924.5 L341.3 924.9 L341.8 924.3 L342.4 924.5 L342.9 924.6 L343.5 924.5 L344.0 924.7 L344.6 924.6 L345.2 924.2 L345.7 924.1 L346.3 923.6 L346.8 922.8 L347.4 922.9 L347.9 922.9 L348.5 922.8 L349.0 923.3 L349.6 923.0 L350.2 922.5 L350.7 923.0 L351.3 923.6 L351.8 924.2 L352.4 924.5 L352.9 923.9 L353.5 923.5 L354.0 923.4 L354.6 923.3 L355.2 923.6 L355.7 924.2 L356.3 924.5 L356.8 924.3 L357.4 924.0 L357.9 924.4 L358.5 924.3 L359.0 923.2 L359.6 922.8 L360.1 923.6 L360.7 923.9 L361.3 923.5 L361.8 923.9 L362.4 924.0 L362.9 923.9 L363.5 924.1 L364.0 924.2 L364.6 924.1 L365.1 923.6 L365.7 923.3 L366.3 923.2 L366.8 923.3 L367.4 923.5 L367.9 923.4 L368.5 923.6 L369.0 924.7 L369.6 925.0 L370.1 924.3 L370.7 923.9 L371.3 923.6 L371.8 922.9 L372.4 922.8 L372.9 923.0 L373.5 923.9 L374.0 925.3 L374.6 925.0 L375.1 923.7 L375.7 923.7 L376.2 923.8 L376.8 922.7 L377.4 922.3 L377.9 922.7 L378.5 923.1 L379.0 924.1 L379.6 925.2 L380.1 925.0 L380.7 924.3 L381.2 924.7 L381.8 924.7 L382.4 923.9 L382.9 924.2 L383.5 925.1 L384.0 925.0 L384.6 924.1 L385.1 923.3 L385.7 923.8 L386.2 923.9 L386.8 923.0 L387.3 923.0 L387.9 923.3 L388.5 923.5 L389.0 923.7 L389.6 923.8 L390.1 924.6 L390.7 925.3 L391.2 924.6 L391.8 923.9 L392.3 923.7 L392.9 923.2 L393.5 923.1 L394.0 923.2 L394.6 923.0 L395.1 923.2 L395.7 923.7 L396.2 924.1 L396.8 924.1 L397.3 923.7 L397.9 922.8 L398.5 922.2 L399.0 922.7 L399.6 923.5 L400.1 923.9 L400.7 924.0 L401.2 924.2 L401.8 924.3 L402.3 924.2 L402.9 924.9 L403.4 925.5 L404.0 924.5 L404.6 923.9 L405.1 923.9 L405.7 923.1 L406.2 923.5 L406.8 923.8 L407.3 923.5 L407.9 923.2 L408.4 922.7 L409.0 923.2 L409.6 923.1 L410.1 922.5 L410.7 923.0 L411.2 923.9 L411.8 924.4 L412.3 924.2 L412.9 923.5 L413.4 924.0 L414.0 924.9 L414.5 924.6 L415.1 924.7 L415.7 924.8 L416.2 924.4 L416.8 924.2 L417.3 924.3 L417.9 924.7 L418.4 924.5 L419.0 924.6 L419.5 924.5 L420.1 924.6 L420.7 924.8 L421.2 923.4 L421.8 922.6 L422.3 924.0 L422.9 924.3 L423.4 922.7 L424.0 923.0 L424.5 924.9 L425.1 925.1 L425.7 923.4 L426.2 922.9 L426.8 916.3 L427.3 915.2 L427.9 922.6 L428.4 933.6 L429.0 932.6 L429.5 941.6 L430.1 941.3 L430.6 933.8 L431.2 908.2 L431.8 896.5 L432.3 901.5 L432.9 912.0 L433.4 921.8 L434.0 940.3 L434.5 960.5 L435.1 944.1 L435.6 910.4 L436.2 897.0 L436.8 907.7 L437.3 917.1 L437.9 908.3 L438.4 904.2 L439.0 916.2 L439.5 924.6 L440.1 916.4 L440.6 910.0 L441.2 927.0 L441.7 940.7 L442.3 933.7 L442.9 923.5 L443.4 920.1 L444.0 917.7 L444.5 912.0 L445.1 913.1 L445.6 910.3 L446.2 918.2 L446.7 924.7 L447.3 924.2 L447.9 927.7 L448.4 927.0 L449.0 923.4 L449.5 922.6 L450.1 922.9 L450.6 921.6 L451.2 920.8 L451.7 920.8 L452.3 921.3 L452.9 922.1 L453.4 922.9 L454.0 923.9 L454.5 926.5 L455.1 927.6 L455.6 924.2 L456.2 923.7 L456.7 924.6 L457.3 923.6 L457.8 923.9 L458.4 924.5 L459.0 925.5 L459.5 925.2 L460.1 923.2 L460.6 924.1 L461.2 925.4 L461.7 923.6 L462.3 922.7 L462.8 923.4 L463.4 922.5 L464.0 921.3 L464.5 921.5 L465.1 922.1 L465.6 921.8 L466.2 921.5 L466.7 922.9 L467.3 924.3 L467.8 922.6 L468.4 921.1 L468.9 923.3 L469.5 925.5 L470.1 926.0 L470.6 925.1 L471.2 924.2 L471.7 923.7 L472.3 922.4 L472.8 921.9 L473.4 923.4 L473.9 925.0 L474.5 924.9 L475.1 924.6 L475.6 924.7 L476.2 924.1 L476.7 923.4 L477.3 922.5 L477.8 922.7 L478.4 924.5 L478.9 924.1 L479.5 923.4 L480.1 925.4 L480.6 925.1 L481.2 922.3 L481.7 921.8 L482.3 922.4 L482.8 923.0 L483.4 924.9 L483.9 924.8 L484.5 923.0 L485.0 923.9 L485.6 925.5 L486.2 924.1 L486.7 923.1 L487.3 925.0 L487.8 927.1 L488.4 927.0 L488.9 925.3 L489.5 924.5 L490.0 924.9 L490.6 925.0 L491.2 924.8 L491.7 925.0 L492.3 924.4 L492.8 923.3 L493.4 923.3 L493.9 924.4 L494.5 925.9 L495.0 925.2 L495.6 923.4 L496.2 922.9 L496.7 923.6 L497.3 924.6 L497.8 924.3 L498.4 924.2 L498.9 924.6 L499.5 925.1 L500.0 925.7 L500.6 925.5 L501.1 924.1 L501.7 923.6 L502.3 924.8 L502.8 925.5 L503.4 925.6 L503.9 924.9 L504.5 924.0 L505.0 924.5 L505.6 924.7 L506.1 923.6 L506.7 923.2 L507.3 923.4 L507.8 924.0 L508.4 924.1 L508.9 923.8 L509.5 924.1 L510.0 924.0 L510.6 923.2 L511.1 922.9 L511.7 923.2 L512.2 924.1 L512.8 925.1 L513.4 924.5 L513.9 923.7 L514.5 924.7 L515.0 925.4 L515.6 924.5 L516.1 924.5 L516.7 924.2 L517.2 923.0 L517.8 923.1 L518.4 924.0 L518.9 924.8 L519.5 924.0 L520.0 923.4 L520.6 924.0 L521.1 924.5 L521.7 924.2 L522.2 923.4 L522.8 923.1 L523.4 924.5 L523.9 925.1 L524.5 924.2 L525.0 924.5 L525.6 924.3 L526.1 922.7 L526.7 922.0 L527.2 922.5 L527.8 923.0 L528.3 923.5 L528.9 923.8 L529.5 923.8 L530.0 924.1 L530.6 924.5 L531.1 923.7 L531.7 922.9 L532.2 923.4 L532.8 923.7 L533.3 923.8 L533.9 924.4 L534.5 923.6 L535.0 921.9 L535.6 922.1 L536.1 923.1 L536.7 924.0 L537.2 925.0 L537.8 925.1 L538.3 923.9 L538.9 922.9 L539.4 923.2 L540.0 923.4 L540.6 923.8 L541.1 923.8 L541.7 922.5 L542.2 921.5 L542.8 923.1 L543.3 924.2 L543.9 923.6 L544.4 923.4 L545.0 923.8 L545.6 923.9 L546.1 923.8 L546.7 924.0 L547.2 924.0 L547.8 924.3 L548.3 924.4 L548.9 923.6 L549.4 924.1 L550.0 925.0 L550.6 923.9 L551.1 923.0 L551.7 923.4 L552.2 923.5 L552.8 923.5 L553.3 923.7 L553.9 923.7 L554.4 922.9 L555.0 923.0 L555.5 924.0 L556.1 924.5 L556.7 924.7 L557.2 924.2 L557.8 923.4 L558.3 923.5 L558.9 923.9 L559.4 923.3 L560.0 922.1 L560.5 922.2 L561.1 923.2 L561.7 923.1 L562.2 922.3 L562.8 922.5 L563.3 923.4 L563.9 924.3 L564.4 924.3 L565.0 922.9 L565.5 921.6 L566.1 921.8 L566.6 922.7 L567.2 923.9 L567.8 924.7 L568.3 924.3 L568.9 924.4 L569.4 924.9 L570.0 925.0 L570.5 924.9 L571.1 924.3 L571.6 924.0 L572.2 924.3 L572.8 924.4 L573.3 923.5 L573.9 922.5 L574.4 923.0 L575.0 923.8 L575.5 923.1 L576.1 922.7 L576.6 923.3 L577.2 923.2 L577.8 923.5 L578.3 924.4 L578.9 924.3 L579.4 923.7 L580.0 923.1 L580.5 923.0 L581.1 924.3 L581.6 925.1 L582.2 924.6 L582.7 924.2 L583.3 924.2 L583.9 924.3 L584.4 924.4 L585.0 923.7 L585.5 922.8 L586.1 922.6 L586.6 923.1 L587.2 923.6 L587.7 924.2 L588.3 924.7 L588.9 924.6 L589.4 924.6 L590.0 925.2 L590.5 924.7 L591.1 923.2 L591.6 923.5 L592.2 923.9 L592.7 923.9 L593.3 924.2 L593.8 923.8 L594.4 923.3 L595.0 923.1 L595.5 923.6 L596.1 924.1 L596.6 924.2 L597.2 924.7 L597.7 924.7 L598.3 923.8 L598.8 923.4 L599.4 923.3 L600.0 923.9 L600.5 924.7 L601.1 923.6 L601.6 922.7 L602.2 923.0 L602.7 923.0 L603.3 922.4 L603.8 923.2 L604.4 924.9 L605.0 924.8 L605.5 924.2 L606.1 923.8 L606.6 923.7 L607.2 924.9 L607.7 925.4 L608.3 924.5 L608.8 923.7 L609.4 923.2 L609.9 923.0 L610.5 923.2 L611.1 923.5 L611.6 924.2 L612.2 924.5 L612.7 924.1 L613.3 923.4 L613.8 923.4 L614.4 923.5 L614.9 923.4 L615.5 923.3 L616.1 923.1 L616.6 923.1 L617.2 923.4 L617.7 923.6 L618.3 924.0 L618.8 924.7 L619.4 924.3 L619.9 923.4 L620.5 923.7 L621.1 924.6 L621.6 924.9 L622.2 924.7 L622.7 924.1 L623.3 923.7 L623.8 923.7 L624.4 923.9 L624.9 924.2 L625.5 924.0 L626.0 923.9 L626.6 923.8 L627.2 923.9 L627.7 923.9 L628.3 923.9 L628.8 923.9 L629.4 923.9 L629.9 923.9 L630.5 923.9 L631.0 923.9 L631.6 923.9 L632.2 923.9 L632.7 923.9 L633.3 923.9 L633.8 923.9 L634.4 923.9 L634.9 923.9 L635.5 923.9 L636.0 923.9 L636.6 923.9 L637.1 923.9 L637.7 923.9 L638.3 923.9 L638.8 923.9 L639.4 923.9 L639.9 923.9 L640.5 923.9 L641.0 923.9 L641.6 923.9 L642.1 923.9 L642.7 923.9 L643.3 923.9 L643.8 923.9 L644.4 924.0 L644.9 924.0 L645.5 923.9 L646.0 923.9 L646.6 923.9 L647.1 923.9 L647.7 923.9 L648.3 923.9 L648.8 923.9 L649.4 923.9 L649.9 923.9 L650.5 923.9 L651.0 923.9 L651.6 923.9 L652.1 923.9 L652.7 923.9 L653.2 923.9 L653.8 923.9 L654.4 923.9 L654.9 923.9 L655.5 923.9 L656.0 923.9 L656.6 923.9 L657.1 923.9 L657.7 923.9 L658.2 923.9 L658.8 923.9 L659.4 923.9 L659.9 923.9 L660.5 923.9 L661.0 923.9 L661.6 923.9 L662.1 923.9 L662.7 923.9 L663.2 923.9 L663.8 923.9 L664.3 923.9 L664.9 923.9 L665.5 923.9 L666.0 923.9 L666.6 923.9 L667.1 923.9 L667.7 923.9 L668.2 923.9 L668.8 923.9 L669.3 923.9 L669.9 923.9" fill="none" stroke="#44d070" stroke-width="2" stroke-linejoin="round"/><line x1="450.1" y1="889.2" x2="450.1" y2="970.2" stroke="#6a7282" stroke-width="1"/><circle cx="450.1" cy="927.8" r="3.8" fill="#44d070" stroke="#fff" stroke-width="1.5"/><text x="55.6" y="904.0" font-family="Liberation Sans" font-size="11" font-weight="bold" fill="#44d070">Y Ground Motion</text><line x1="730.3" y1="797.5" x2="1360.7" y2="797.5" stroke="#e9eaf0" stroke-width="1"/><text x="727.3" y="801.1" text-anchor="end" font-family="Liberation Sans" font-size="10.5" fill="#555d6e">20</text><line x1="730.3" y1="813.5" x2="1360.7" y2="813.5" stroke="#e9eaf0" stroke-width="1"/><text x="727.3" y="817.1" text-anchor="end" font-family="Liberation Sans" font-size="10.5" fill="#555d6e">10</text><line x1="730.3" y1="829.5" x2="1360.7" y2="829.5" stroke="#e9eaf0" stroke-width="1"/><text x="727.3" y="833.1" text-anchor="end" font-family="Liberation Sans" font-size="10.5" fill="#555d6e">0</text><line x1="730.3" y1="845.5" x2="1360.7" y2="845.5" stroke="#e9eaf0" stroke-width="1"/><text x="727.3" y="849.1" text-anchor="end" font-family="Liberation Sans" font-size="10.5" fill="#555d6e">-10</text><line x1="730.3" y1="861.5" x2="1360.7" y2="861.5" stroke="#e9eaf0" stroke-width="1"/><text x="727.3" y="865.1" text-anchor="end" font-family="Liberation Sans" font-size="10.5" fill="#555d6e">-20</text><line x1="730.3" y1="877.5" x2="1360.7" y2="877.5" stroke="#e9eaf0" stroke-width="1"/><text x="727.3" y="881.1" text-anchor="end" font-family="Liberation Sans" font-size="10.5" fill="#555d6e">-30</text><line x1="846.5" y1="797.2" x2="846.5" y2="877.1" stroke="#e9eaf0" stroke-width="1"/><line x1="957.5" y1="797.2" x2="957.5" y2="877.1" stroke="#e9eaf0" stroke-width="1"/><line x1="1068.5" y1="797.2" x2="1068.5" y2="877.1" stroke="#e9eaf0" stroke-width="1"/><line x1="1180.5" y1="797.2" x2="1180.5" y2="877.1" stroke="#e9eaf0" stroke-width="1"/><line x1="1291.5" y1="797.2" x2="1291.5" y2="877.1" stroke="#e9eaf0" stroke-width="1"/><line x1="1360.7" y1="797.2" x2="1360.7" y2="877.1" stroke="#e6e6ec" stroke-width="1"/><line x1="735.3" y1="797.2" x2="735.3" y2="877.1" stroke="#d4d6de" stroke-width="1"/><path d="M735.3 829.2 L736.1 829.2 L737.0 829.2 L737.8 829.2 L738.6 829.2 L739.5 829.2 L740.3 829.2 L741.1 829.2 L742.0 829.2 L742.8 829.2 L743.6 829.2 L744.5 829.2 L745.3 829.2 L746.1 829.2 L747.0 829.2 L747.8 829.2 L748.6 829.2 L749.5 829.2 L750.3 829.2 L751.1 829.2 L752.0 829.2 L752.8 829.2 L753.6 829.2 L754.5 829.2 L755.3 829.2 L756.1 829.2 L757.0 829.2 L757.8 829.2 L758.6 829.2 L759.5 829.2 L760.3 829.2 L761.1 829.2 L762.0 829.2 L762.8 829.2 L763.7 829.2 L764.5 829.2 L765.3 829.2 L766.2 829.2 L767.0 829.2 L767.8 829.2 L768.7 829.2 L769.5 829.2 L770.3 829.2 L771.2 829.2 L772.0 829.2 L772.8 829.2 L773.7 829.2 L774.5 829.2 L775.3 829.2 L776.2 829.2 L777.0 829.2 L777.8 829.2 L778.7 829.2 L779.5 829.2 L780.3 829.2 L781.2 829.2 L782.0 829.2 L782.8 829.2 L783.7 829.2 L784.5 829.2 L785.3 829.2 L786.2 829.2 L787.0 829.2 L787.8 829.2 L788.7 829.2 L789.5 829.2 L790.3 829.2 L791.2 829.2 L792.0 829.2 L792.8 829.2 L793.7 829.2 L794.5 829.2 L795.3 829.2 L796.2 829.2 L797.0 829.2 L797.8 829.2 L798.7 829.2 L799.5 829.2 L800.3 829.2 L801.2 829.2 L802.0 829.2 L802.8 829.2 L803.7 829.2 L804.5 829.2 L805.3 829.2 L806.2 829.2 L807.0 829.2 L807.8 829.2 L808.7 829.2 L809.5 829.2 L810.3 829.2 L811.2 829.2 L812.0 829.2 L812.8 829.2 L813.7 829.2 L814.5 829.2 L815.4 829.2 L816.2 829.2 L817.0 829.2 L817.9 829.2 L818.7 829.2 L819.5 829.2 L820.4 829.2 L821.2 829.2 L822.0 829.2 L822.9 829.2 L823.7 829.2 L824.5 829.2 L825.4 829.2 L826.2 829.2 L827.0 829.2 L827.9 829.2 L828.7 829.2 L829.5 829.2 L830.4 829.2 L831.2 829.2 L832.0 829.2 L832.9 829.2 L833.7 829.2 L834.5 829.2 L835.4 829.2 L836.2 829.2 L837.0 829.2 L837.9 829.2 L838.7 829.2 L839.5 829.2 L840.4 829.2 L841.2 829.2 L842.0 829.2 L842.9 829.2 L843.7 829.2 L844.5 829.2 L845.4 829.2 L846.2 829.2 L847.0 829.2 L847.9 829.2 L848.7 829.2 L849.5 829.2 L850.4 829.2 L851.2 829.2 L852.0 829.2 L852.9 829.2 L853.7 829.2 L854.5 829.2 L855.4 829.2 L856.2 829.2 L857.0 829.2 L857.9 829.2 L858.7 829.2 L859.5 829.2 L860.4 829.2 L861.2 829.2 L862.0 829.2 L862.9 829.2 L863.7 829.2 L864.5 829.2 L865.4 829.2 L866.2 829.2 L867.1 829.2 L867.9 829.2 L868.7 829.2 L869.6 829.2 L870.4 829.2 L871.2 829.2 L872.1 829.2 L872.9 829.2 L873.7 829.2 L874.6 829.2 L875.4 829.2 L876.2 829.2 L877.1 829.2 L877.9 829.2 L878.7 829.2 L879.6 829.2 L880.4 829.2 L881.2 829.2 L882.1 829.2 L882.9 829.2 L883.7 829.2 L884.6 829.2 L885.4 829.2 L886.2 829.2 L887.1 829.2 L887.9 829.2 L888.7 829.2 L889.6 829.2 L890.4 829.2 L891.2 829.2 L892.1 829.2 L892.9 829.2 L893.7 829.2 L894.6 829.2 L895.4 829.2 L896.2 829.2 L897.1 829.2 L897.9 829.2 L898.7 829.2 L899.6 829.2 L900.4 829.2 L901.2 829.2 L902.1 829.2 L902.9 829.2 L903.7 829.2 L904.6 829.2 L905.4 829.2 L906.2 829.2 L907.1 829.2 L907.9 829.2 L908.7 829.2 L909.6 829.2 L910.4 829.2 L911.2 829.2 L912.1 829.2 L912.9 829.2 L913.7 829.2 L914.6 829.2 L915.4 829.2 L916.2 829.2 L917.1 829.2 L917.9 829.2 L918.8 829.2 L919.6 829.2 L920.4 829.2 L921.3 829.2 L922.1 829.2 L922.9 829.2 L923.8 829.2 L924.6 829.2 L925.4 829.2 L926.3 829.2 L927.1 829.2 L927.9 829.2 L928.8 829.2 L929.6 829.2 L930.4 829.2 L931.3 829.2 L932.1 829.2 L932.9 829.2 L933.8 829.2 L934.6 829.2 L935.4 829.2 L936.3 829.2 L937.1 829.2 L937.9 829.2 L938.8 829.2 L939.6 829.2 L940.4 829.2 L941.3 829.2 L942.1 829.2 L942.9 829.2 L943.8 829.2 L944.6 829.2 L945.4 829.2 L946.3 829.2 L947.1 829.2 L947.9 829.2 L948.8 829.2 L949.6 829.2 L950.4 829.2 L951.3 829.2 L952.1 829.2 L952.9 829.2 L953.8 829.2 L954.6 829.2 L955.4 829.2 L956.3 829.2 L957.1 829.2 L957.9 829.2 L958.8 829.1 L959.6 829.1 L960.4 829.0 L961.3 829.0 L962.1 828.9 L962.9 828.8 L963.8 828.7 L964.6 828.6 L965.4 828.5 L966.3 828.5 L967.1 828.4 L967.9 828.4 L968.8 828.4 L969.6 828.4 L970.5 828.4 L971.3 828.5 L972.1 828.6 L973.0 828.8 L973.8 828.9 L974.6 829.1 L975.5 829.2 L976.3 829.3 L977.1 829.5 L978.0 829.5 L978.8 829.6 L979.6 829.6 L980.5 829.6 L981.3 829.6 L982.1 829.5 L983.0 829.3 L983.8 829.2 L984.6 829.0 L985.5 828.8 L986.3 828.6 L987.1 828.4 L988.0 828.2 L988.8 828.0 L989.6 827.9 L990.5 827.9 L991.3 827.9 L992.1 827.9 L993.0 828.0 L993.8 828.2 L994.6 828.4 L995.5 828.6 L996.3 828.8 L997.1 829.1 L998.0 829.3 L998.8 829.5 L999.6 829.7 L1000.5 829.8 L1001.3 829.9 L1002.1 830.0 L1003.0 829.9 L1003.8 829.7 L1004.6 829.5 L1005.5 829.1 L1006.3 828.7 L1007.1 828.2 L1008.0 827.7 L1008.8 827.3 L1009.6 826.9 L1010.5 826.5 L1011.3 826.3 L1012.1 826.1 L1013.0 826.1 L1013.8 826.4 L1014.6 826.9 L1015.5 827.6 L1016.3 828.5 L1017.1 829.4 L1018.0 830.3 L1018.8 831.1 L1019.6 831.8 L1020.5 832.2 L1021.3 832.4 L1022.2 832.2 L1023.0 831.8 L1023.8 831.1 L1024.7 830.3 L1025.5 829.4 L1026.3 828.5 L1027.2 827.6 L1028.0 826.9 L1028.8 826.4 L1029.7 826.1 L1030.5 826.2 L1031.3 826.5 L1032.2 827.1 L1033.0 827.9 L1033.8 828.8 L1034.7 829.7 L1035.5 830.6 L1036.3 831.4 L1037.2 832.0 L1038.0 832.3 L1038.8 832.3 L1039.7 832.1 L1040.5 831.6 L1041.3 830.9 L1042.2 830.0 L1043.0 829.1 L1043.8 828.2 L1044.7 827.3 L1045.5 826.7 L1046.3 826.3 L1047.2 826.1 L1048.0 826.3 L1048.8 826.7 L1049.7 827.3 L1050.5 828.2 L1051.3 829.1 L1052.2 830.0 L1053.0 830.9 L1053.8 831.6 L1054.7 832.1 L1055.5 832.3 L1056.3 832.3 L1057.2 832.0 L1058.0 831.4 L1058.8 830.6 L1059.7 829.7 L1060.5 828.8 L1061.3 827.9 L1062.2 827.1 L1063.0 826.5 L1063.8 826.2 L1064.7 826.1 L1065.5 826.4 L1066.3 826.9 L1067.2 827.6 L1068.0 828.5 L1068.8 829.4 L1069.7 830.3 L1070.5 831.1 L1071.3 831.8 L1072.2 832.2 L1073.0 832.4 L1073.8 832.2 L1074.7 831.8 L1075.5 831.1 L1076.4 830.3 L1077.2 829.4 L1078.0 828.5 L1078.9 827.6 L1079.7 826.9 L1080.5 826.4 L1081.4 826.1 L1082.2 826.2 L1083.0 826.5 L1083.9 827.1 L1084.7 827.9 L1085.5 828.8 L1086.4 829.7 L1087.2 830.6 L1088.0 831.4 L1088.9 832.0 L1089.7 832.3 L1090.5 832.3 L1091.4 832.1 L1092.2 831.6 L1093.0 830.9 L1093.9 830.0 L1094.7 829.1 L1095.5 828.2 L1096.4 827.3 L1097.2 826.7 L1098.0 826.3 L1098.9 826.1 L1099.7 826.3 L1100.5 826.7 L1101.4 827.3 L1102.2 828.2 L1103.0 829.1 L1103.9 830.0 L1104.7 830.9 L1105.5 831.6 L1106.4 832.1 L1107.2 832.3 L1108.0 829.5 L1108.9 829.3 L1109.7 829.2 L1110.5 829.2 L1111.4 827.5 L1112.2 823.1 L1113.0 818.0 L1113.9 814.4 L1114.7 813.8 L1115.5 816.6 L1116.4 822.2 L1117.2 830.0 L1118.0 839.0 L1118.9 848.0 L1119.7 855.8 L1120.5 861.4 L1121.4 864.1 L1122.2 863.4 L1123.0 859.0 L1123.9 851.6 L1124.7 842.6 L1125.5 833.6 L1126.4 826.2 L1127.2 821.7 L1128.1 821.0 L1128.9 822.4 L1129.7 824.8 L1130.6 826.7 L1131.4 827.2 L1132.2 828.5 L1133.1 831.3 L1133.9 835.3 L1134.7 840.4 L1135.6 845.9 L1136.4 851.7 L1137.2 857.1 L1138.1 861.9 L1138.9 865.5 L1139.7 867.8 L1140.6 868.6 L1141.4 867.5 L1142.2 864.0 L1143.1 858.6 L1143.9 851.7 L1144.7 843.7 L1145.6 835.2 L1146.4 827.0 L1147.2 819.6 L1148.1 813.6 L1148.9 809.5 L1149.7 807.6 L1150.6 808.1 L1151.4 811.5 L1152.2 817.4 L1153.1 824.9 L1153.9 833.2 L1154.7 841.1 L1155.6 847.7 L1156.4 852.0 L1157.2 853.4 L1158.1 852.3 L1158.9 849.2 L1159.7 844.3 L1160.6 838.5 L1161.4 832.4 L1162.2 826.8 L1163.1 822.4 L1163.9 819.9 L1164.7 819.5 L1165.6 820.9 L1166.4 823.7 L1167.2 827.7 L1168.1 832.4 L1168.9 837.3 L1169.7 841.8 L1170.6 845.5 L1171.4 847.8 L1172.2 848.7 L1173.1 847.9 L1173.9 845.6 L1174.7 842.0 L1175.6 837.4 L1176.4 832.2 L1177.2 826.9 L1178.1 821.9 L1178.9 817.6 L1179.8 814.4 L1180.6 812.6 L1181.4 812.3 L1182.3 813.7 L1183.1 816.6 L1183.9 820.9 L1184.8 826.1 L1185.6 831.7 L1186.4 837.4 L1187.3 842.5 L1188.1 846.8 L1188.9 849.7 L1189.8 851.1 L1190.6 850.9 L1191.4 849.3 L1192.3 846.5 L1193.1 842.7 L1193.9 838.2 L1194.8 833.2 L1195.6 828.3 L1196.4 823.8 L1197.3 819.9 L1198.1 817.1 L1198.9 815.6 L1199.8 815.3 L1200.6 816.4 L1201.4 818.7 L1202.3 822.0 L1203.1 826.1 L1203.9 830.8 L1204.8 835.8 L1205.6 840.6 L1206.4 844.9 L1207.3 848.6 L1208.1 851.2 L1208.9 852.7 L1209.8 852.9 L1210.6 851.3 L1211.4 847.9 L1212.3 843.1 L1213.1 837.3 L1213.9 831.1 L1214.8 825.1 L1215.6 819.9 L1216.4 816.0 L1217.3 813.8 L1218.1 813.4 L1218.9 814.8 L1219.8 817.8 L1220.6 822.0 L1221.4 827.1 L1222.3 832.6 L1223.1 837.8 L1223.9 842.4 L1224.8 845.8 L1225.6 847.8 L1226.4 848.1 L1227.3 847.2 L1228.1 845.4 L1228.9 842.7 L1229.8 839.3 L1230.6 835.6 L1231.5 831.8 L1232.3 828.2 L1233.1 825.0 L1234.0 822.6 L1234.8 821.1 L1235.6 820.5 L1236.5 821.0 L1237.3 822.5 L1238.1 824.9 L1239.0 827.8 L1239.8 831.1 L1240.6 834.3 L1241.5 837.3 L1242.3 839.6 L1243.1 841.1 L1244.0 841.6 L1244.8 841.2 L1245.6 840.0 L1246.5 838.1 L1247.3 835.7 L1248.1 833.0 L1249.0 830.3 L1249.8 827.9 L1250.6 826.0 L1251.5 824.8 L1252.3 824.4 L1253.1 824.8 L1254.0 825.9 L1254.8 827.8 L1255.6 830.1 L1256.5 832.6 L1257.3 835.1 L1258.1 837.4 L1259.0 839.3 L1259.8 840.4 L1260.6 840.8 L1261.5 840.5 L1262.3 839.7 L1263.1 838.3 L1264.0 836.5 L1264.8 834.5 L1265.6 832.4 L1266.5 830.3 L1267.3 828.4 L1268.1 826.9 L1269.0 825.8 L1269.8 825.4 L1270.6 825.5 L1271.5 826.5 L1272.3 828.2 L1273.1 830.4 L1274.0 832.8 L1274.8 835.3 L1275.6 837.5 L1276.5 839.2 L1277.3 840.2 L1278.1 840.3 L1279.0 839.8 L1279.8 838.7 L1280.6 837.2 L1281.5 835.3 L1282.3 833.2 L1283.2 831.2 L1284.0 829.3 L1284.8 827.7 L1285.7 826.7 L1286.5 826.2 L1287.3 826.2 L1288.2 826.8 L1289.0 827.9 L1289.8 829.2 L1290.7 830.9 L1291.5 832.6 L1292.3 834.3 L1293.2 835.8 L1294.0 837.0 L1294.8 837.7 L1295.7 837.9 L1296.5 837.7 L1297.3 837.1 L1298.2 836.2 L1299.0 835.0 L1299.8 833.6 L1300.7 832.1 L1301.5 830.7 L1302.3 829.4 L1303.2 828.3 L1304.0 827.6 L1304.8 827.3 L1305.7 827.3 L1306.5 827.9 L1307.3 828.8 L1308.2 830.1 L1309.0 831.6 L1309.8 833.1 L1310.7 834.6 L1311.5 836.0 L1312.3 837.0 L1313.2 837.7 L1314.0 837.9 L1314.8 837.7 L1315.7 836.9 L1316.5 835.7 L1317.3 834.2 L1318.2 832.6 L1319.0 830.9 L1319.8 829.4 L1320.7 828.3 L1321.5 827.5 L1322.3 827.2 L1323.2 827.4 L1324.0 828.0 L1324.8 829.0 L1325.7 830.2 L1326.5 831.5 L1327.3 832.9 L1328.2 834.2 L1329.0 835.3 L1329.8 836.1 L1330.7 836.6 L1331.5 836.6 L1332.3 836.3 L1333.2 835.6 L1334.0 834.7 L1334.9 833.5 L1335.7 832.3 L1336.5 831.1 L1337.4 830.0 L1338.2 829.2 L1339.0 828.8 L1339.9 828.7 L1340.7 829.0 L1341.5 829.6 L1342.4 830.4 L1343.2 831.4 L1344.0 832.5 L1344.9 833.5 L1345.7 834.4 L1346.5 835.1 L1347.4 835.5 L1348.2 835.5 L1349.0 835.2 L1349.9 834.6 L1350.7 833.7 L1351.5 832.6 L1352.4 831.4 L1353.2 830.4 L1354.0 829.6 L1354.9 829.0 L1355.7 828.8 L1356.5 829.2 L1357.4 830.2 L1358.2 831.6 L1359.0 833.0 L1359.9 834.1 L1360.7 834.4 L1360.7 829.2 L735.3 829.2 Z" fill="#1e9a40" fill-opacity="0.12"/><path d="M735.3 829.2 L736.1 829.2 L737.0 829.2 L737.8 829.2 L738.6 829.2 L739.5 829.2 L740.3 829.2 L741.1 829.2 L742.0 829.2 L742.8 829.2 L743.6 829.2 L744.5 829.2 L745.3 829.2 L746.1 829.2 L747.0 829.2 L747.8 829.2 L748.6 829.2 L749.5 829.2 L750.3 829.2 L751.1 829.2 L752.0 829.2 L752.8 829.2 L753.6 829.2 L754.5 829.2 L755.3 829.2 L756.1 829.2 L757.0 829.2 L757.8 829.2 L758.6 829.2 L759.5 829.2 L760.3 829.2 L761.1 829.2 L762.0 829.2 L762.8 829.2 L763.7 829.2 L764.5 829.2 L765.3 829.2 L766.2 829.2 L767.0 829.2 L767.8 829.2 L768.7 829.2 L769.5 829.2 L770.3 829.2 L771.2 829.2 L772.0 829.2 L772.8 829.2 L773.7 829.2 L774.5 829.2 L775.3 829.2 L776.2 829.2 L777.0 829.2 L777.8 829.2 L778.7 829.2 L779.5 829.2 L780.3 829.2 L781.2 829.2 L782.0 829.2 L782.8 829.2 L783.7 829.2 L784.5 829.2 L785.3 829.2 L786.2 829.2 L787.0 829.2 L787.8 829.2 L788.7 829.2 L789.5 829.2 L790.3 829.2 L791.2 829.2 L792.0 829.2 L792.8 829.2 L793.7 829.2 L794.5 829.2 L795.3 829.2 L796.2 829.2 L797.0 829.2 L797.8 829.2 L798.7 829.2 L799.5 829.2 L800.3 829.2 L801.2 829.2 L802.0 829.2 L802.8 829.2 L803.7 829.2 L804.5 829.2 L805.3 829.2 L806.2 829.2 L807.0 829.2 L807.8 829.2 L808.7 829.2 L809.5 829.2 L810.3 829.2 L811.2 829.2 L812.0 829.2 L812.8 829.2 L813.7 829.2 L814.5 829.2 L815.4 829.2 L816.2 829.2 L817.0 829.2 L817.9 829.2 L818.7 829.2 L819.5 829.2 L820.4 829.2 L821.2 829.2 L822.0 829.2 L822.9 829.2 L823.7 829.2 L824.5 829.2 L825.4 829.2 L826.2 829.2 L827.0 829.2 L827.9 829.2 L828.7 829.2 L829.5 829.2 L830.4 829.2 L831.2 829.2 L832.0 829.2 L832.9 829.2 L833.7 829.2 L834.5 829.2 L835.4 829.2 L836.2 829.2 L837.0 829.2 L837.9 829.2 L838.7 829.2 L839.5 829.2 L840.4 829.2 L841.2 829.2 L842.0 829.2 L842.9 829.2 L843.7 829.2 L844.5 829.2 L845.4 829.2 L846.2 829.2 L847.0 829.2 L847.9 829.2 L848.7 829.2 L849.5 829.2 L850.4 829.2 L851.2 829.2 L852.0 829.2 L852.9 829.2 L853.7 829.2 L854.5 829.2 L855.4 829.2 L856.2 829.2 L857.0 829.2 L857.9 829.2 L858.7 829.2 L859.5 829.2 L860.4 829.2 L861.2 829.2 L862.0 829.2 L862.9 829.2 L863.7 829.2 L864.5 829.2 L865.4 829.2 L866.2 829.2 L867.1 829.2 L867.9 829.2 L868.7 829.2 L869.6 829.2 L870.4 829.2 L871.2 829.2 L872.1 829.2 L872.9 829.2 L873.7 829.2 L874.6 829.2 L875.4 829.2 L876.2 829.2 L877.1 829.2 L877.9 829.2 L878.7 829.2 L879.6 829.2 L880.4 829.2 L881.2 829.2 L882.1 829.2 L882.9 829.2 L883.7 829.2 L884.6 829.2 L885.4 829.2 L886.2 829.2 L887.1 829.2 L887.9 829.2 L888.7 829.2 L889.6 829.2 L890.4 829.2 L891.2 829.2 L892.1 829.2 L892.9 829.2 L893.7 829.2 L894.6 829.2 L895.4 829.2 L896.2 829.2 L897.1 829.2 L897.9 829.2 L898.7 829.2 L899.6 829.2 L900.4 829.2 L901.2 829.2 L902.1 829.2 L902.9 829.2 L903.7 829.2 L904.6 829.2 L905.4 829.2 L906.2 829.2 L907.1 829.2 L907.9 829.2 L908.7 829.2 L909.6 829.2 L910.4 829.2 L911.2 829.2 L912.1 829.2 L912.9 829.2 L913.7 829.2 L914.6 829.2 L915.4 829.2 L916.2 829.2 L917.1 829.2 L917.9 829.2 L918.8 829.2 L919.6 829.2 L920.4 829.2 L921.3 829.2 L922.1 829.2 L922.9 829.2 L923.8 829.2 L924.6 829.2 L925.4 829.2 L926.3 829.2 L927.1 829.2 L927.9 829.2 L928.8 829.2 L929.6 829.2 L930.4 829.2 L931.3 829.2 L932.1 829.2 L932.9 829.2 L933.8 829.2 L934.6 829.2 L935.4 829.2 L936.3 829.2 L937.1 829.2 L937.9 829.2 L938.8 829.2 L939.6 829.2 L940.4 829.2 L941.3 829.2 L942.1 829.2 L942.9 829.2 L943.8 829.2 L944.6 829.2 L945.4 829.2 L946.3 829.2 L947.1 829.2 L947.9 829.2 L948.8 829.2 L949.6 829.2 L950.4 829.2 L951.3 829.2 L952.1 829.2 L952.9 829.2 L953.8 829.2 L954.6 829.2 L955.4 829.2 L956.3 829.2 L957.1 829.2 L957.9 829.2 L958.8 829.1 L959.6 829.1 L960.4 829.0 L961.3 829.0 L962.1 828.9 L962.9 828.8 L963.8 828.7 L964.6 828.6 L965.4 828.5 L966.3 828.5 L967.1 828.4 L967.9 828.4 L968.8 828.4 L969.6 828.4 L970.5 828.4 L971.3 828.5 L972.1 828.6 L973.0 828.8 L973.8 828.9 L974.6 829.1 L975.5 829.2 L976.3 829.3 L977.1 829.5 L978.0 829.5 L978.8 829.6 L979.6 829.6 L980.5 829.6 L981.3 829.6 L982.1 829.5 L983.0 829.3 L983.8 829.2 L984.6 829.0 L985.5 828.8 L986.3 828.6 L987.1 828.4 L988.0 828.2 L988.8 828.0 L989.6 827.9 L990.5 827.9 L991.3 827.9 L992.1 827.9 L993.0 828.0 L993.8 828.2 L994.6 828.4 L995.5 828.6 L996.3 828.8 L997.1 829.1 L998.0 829.3 L998.8 829.5 L999.6 829.7 L1000.5 829.8 L1001.3 829.9 L1002.1 830.0 L1003.0 829.9 L1003.8 829.7 L1004.6 829.5 L1005.5 829.1 L1006.3 828.7 L1007.1 828.2 L1008.0 827.7 L1008.8 827.3 L1009.6 826.9 L1010.5 826.5 L1011.3 826.3 L1012.1 826.1 L1013.0 826.1 L1013.8 826.4 L1014.6 826.9 L1015.5 827.6 L1016.3 828.5 L1017.1 829.4 L1018.0 830.3 L1018.8 831.1 L1019.6 831.8 L1020.5 832.2 L1021.3 832.4 L1022.2 832.2 L1023.0 831.8 L1023.8 831.1 L1024.7 830.3 L1025.5 829.4 L1026.3 828.5 L1027.2 827.6 L1028.0 826.9 L1028.8 826.4 L1029.7 826.1 L1030.5 826.2 L1031.3 826.5 L1032.2 827.1 L1033.0 827.9 L1033.8 828.8 L1034.7 829.7 L1035.5 830.6 L1036.3 831.4 L1037.2 832.0 L1038.0 832.3 L1038.8 832.3 L1039.7 832.1 L1040.5 831.6 L1041.3 830.9 L1042.2 830.0 L1043.0 829.1 L1043.8 828.2 L1044.7 827.3 L1045.5 826.7 L1046.3 826.3 L1047.2 826.1 L1048.0 826.3 L1048.8 826.7 L1049.7 827.3 L1050.5 828.2 L1051.3 829.1 L1052.2 830.0 L1053.0 830.9 L1053.8 831.6 L1054.7 832.1 L1055.5 832.3 L1056.3 832.3 L1057.2 832.0 L1058.0 831.4 L1058.8 830.6 L1059.7 829.7 L1060.5 828.8 L1061.3 827.9 L1062.2 827.1 L1063.0 826.5 L1063.8 826.2 L1064.7 826.1 L1065.5 826.4 L1066.3 826.9 L1067.2 827.6 L1068.0 828.5 L1068.8 829.4 L1069.7 830.3 L1070.5 831.1 L1071.3 831.8 L1072.2 832.2 L1073.0 832.4 L1073.8 832.2 L1074.7 831.8 L1075.5 831.1 L1076.4 830.3 L1077.2 829.4 L1078.0 828.5 L1078.9 827.6 L1079.7 826.9 L1080.5 826.4 L1081.4 826.1 L1082.2 826.2 L1083.0 826.5 L1083.9 827.1 L1084.7 827.9 L1085.5 828.8 L1086.4 829.7 L1087.2 830.6 L1088.0 831.4 L1088.9 832.0 L1089.7 832.3 L1090.5 832.3 L1091.4 832.1 L1092.2 831.6 L1093.0 830.9 L1093.9 830.0 L1094.7 829.1 L1095.5 828.2 L1096.4 827.3 L1097.2 826.7 L1098.0 826.3 L1098.9 826.1 L1099.7 826.3 L1100.5 826.7 L1101.4 827.3 L1102.2 828.2 L1103.0 829.1 L1103.9 830.0 L1104.7 830.9 L1105.5 831.6 L1106.4 832.1 L1107.2 832.3 L1108.0 829.5 L1108.9 829.3 L1109.7 829.2 L1110.5 829.2 L1111.4 827.5 L1112.2 823.1 L1113.0 818.0 L1113.9 814.4 L1114.7 813.8 L1115.5 816.6 L1116.4 822.2 L1117.2 830.0 L1118.0 839.0 L1118.9 848.0 L1119.7 855.8 L1120.5 861.4 L1121.4 864.1 L1122.2 863.4 L1123.0 859.0 L1123.9 851.6 L1124.7 842.6 L1125.5 833.6 L1126.4 826.2 L1127.2 821.7 L1128.1 821.0 L1128.9 822.4 L1129.7 824.8 L1130.6 826.7 L1131.4 827.2 L1132.2 828.5 L1133.1 831.3 L1133.9 835.3 L1134.7 840.4 L1135.6 845.9 L1136.4 851.7 L1137.2 857.1 L1138.1 861.9 L1138.9 865.5 L1139.7 867.8 L1140.6 868.6 L1141.4 867.5 L1142.2 864.0 L1143.1 858.6 L1143.9 851.7 L1144.7 843.7 L1145.6 835.2 L1146.4 827.0 L1147.2 819.6 L1148.1 813.6 L1148.9 809.5 L1149.7 807.6 L1150.6 808.1 L1151.4 811.5 L1152.2 817.4 L1153.1 824.9 L1153.9 833.2 L1154.7 841.1 L1155.6 847.7 L1156.4 852.0 L1157.2 853.4 L1158.1 852.3 L1158.9 849.2 L1159.7 844.3 L1160.6 838.5 L1161.4 832.4 L1162.2 826.8 L1163.1 822.4 L1163.9 819.9 L1164.7 819.5 L1165.6 820.9 L1166.4 823.7 L1167.2 827.7 L1168.1 832.4 L1168.9 837.3 L1169.7 841.8 L1170.6 845.5 L1171.4 847.8 L1172.2 848.7 L1173.1 847.9 L1173.9 845.6 L1174.7 842.0 L1175.6 837.4 L1176.4 832.2 L1177.2 826.9 L1178.1 821.9 L1178.9 817.6 L1179.8 814.4 L1180.6 812.6 L1181.4 812.3 L1182.3 813.7 L1183.1 816.6 L1183.9 820.9 L1184.8 826.1 L1185.6 831.7 L1186.4 837.4 L1187.3 842.5 L1188.1 846.8 L1188.9 849.7 L1189.8 851.1 L1190.6 850.9 L1191.4 849.3 L1192.3 846.5 L1193.1 842.7 L1193.9 838.2 L1194.8 833.2 L1195.6 828.3 L1196.4 823.8 L1197.3 819.9 L1198.1 817.1 L1198.9 815.6 L1199.8 815.3 L1200.6 816.4 L1201.4 818.7 L1202.3 822.0 L1203.1 826.1 L1203.9 830.8 L1204.8 835.8 L1205.6 840.6 L1206.4 844.9 L1207.3 848.6 L1208.1 851.2 L1208.9 852.7 L1209.8 852.9 L1210.6 851.3 L1211.4 847.9 L1212.3 843.1 L1213.1 837.3 L1213.9 831.1 L1214.8 825.1 L1215.6 819.9 L1216.4 816.0 L1217.3 813.8 L1218.1 813.4 L1218.9 814.8 L1219.8 817.8 L1220.6 822.0 L1221.4 827.1 L1222.3 832.6 L1223.1 837.8 L1223.9 842.4 L1224.8 845.8 L1225.6 847.8 L1226.4 848.1 L1227.3 847.2 L1228.1 845.4 L1228.9 842.7 L1229.8 839.3 L1230.6 835.6 L1231.5 831.8 L1232.3 828.2 L1233.1 825.0 L1234.0 822.6 L1234.8 821.1 L1235.6 820.5 L1236.5 821.0 L1237.3 822.5 L1238.1 824.9 L1239.0 827.8 L1239.8 831.1 L1240.6 834.3 L1241.5 837.3 L1242.3 839.6 L1243.1 841.1 L1244.0 841.6 L1244.8 841.2 L1245.6 840.0 L1246.5 838.1 L1247.3 835.7 L1248.1 833.0 L1249.0 830.3 L1249.8 827.9 L1250.6 826.0 L1251.5 824.8 L1252.3 824.4 L1253.1 824.8 L1254.0 825.9 L1254.8 827.8 L1255.6 830.1 L1256.5 832.6 L1257.3 835.1 L1258.1 837.4 L1259.0 839.3 L1259.8 840.4 L1260.6 840.8 L1261.5 840.5 L1262.3 839.7 L1263.1 838.3 L1264.0 836.5 L1264.8 834.5 L1265.6 832.4 L1266.5 830.3 L1267.3 828.4 L1268.1 826.9 L1269.0 825.8 L1269.8 825.4 L1270.6 825.5 L1271.5 826.5 L1272.3 828.2 L1273.1 830.4 L1274.0 832.8 L1274.8 835.3 L1275.6 837.5 L1276.5 839.2 L1277.3 840.2 L1278.1 840.3 L1279.0 839.8 L1279.8 838.7 L1280.6 837.2 L1281.5 835.3 L1282.3 833.2 L1283.2 831.2 L1284.0 829.3 L1284.8 827.7 L1285.7 826.7 L1286.5 826.2 L1287.3 826.2 L1288.2 826.8 L1289.0 827.9 L1289.8 829.2 L1290.7 830.9 L1291.5 832.6 L1292.3 834.3 L1293.2 835.8 L1294.0 837.0 L1294.8 837.7 L1295.7 837.9 L1296.5 837.7 L1297.3 837.1 L1298.2 836.2 L1299.0 835.0 L1299.8 833.6 L1300.7 832.1 L1301.5 830.7 L1302.3 829.4 L1303.2 828.3 L1304.0 827.6 L1304.8 827.3 L1305.7 827.3 L1306.5 827.9 L1307.3 828.8 L1308.2 830.1 L1309.0 831.6 L1309.8 833.1 L1310.7 834.6 L1311.5 836.0 L1312.3 837.0 L1313.2 837.7 L1314.0 837.9 L1314.8 837.7 L1315.7 836.9 L1316.5 835.7 L1317.3 834.2 L1318.2 832.6 L1319.0 830.9 L1319.8 829.4 L1320.7 828.3 L1321.5 827.5 L1322.3 827.2 L1323.2 827.4 L1324.0 828.0 L1324.8 829.0 L1325.7 830.2 L1326.5 831.5 L1327.3 832.9 L1328.2 834.2 L1329.0 835.3 L1329.8 836.1 L1330.7 836.6 L1331.5 836.6 L1332.3 836.3 L1333.2 835.6 L1334.0 834.7 L1334.9 833.5 L1335.7 832.3 L1336.5 831.1 L1337.4 830.0 L1338.2 829.2 L1339.0 828.8 L1339.9 828.7 L1340.7 829.0 L1341.5 829.6 L1342.4 830.4 L1343.2 831.4 L1344.0 832.5 L1344.9 833.5 L1345.7 834.4 L1346.5 835.1 L1347.4 835.5 L1348.2 835.5 L1349.0 835.2 L1349.9 834.6 L1350.7 833.7 L1351.5 832.6 L1352.4 831.4 L1353.2 830.4 L1354.0 829.6 L1354.9 829.0 L1355.7 828.8 L1356.5 829.2 L1357.4 830.2 L1358.2 831.6 L1359.0 833.0 L1359.9 834.1 L1360.7 834.4" fill="none" stroke="#1e9a40" stroke-width="2" stroke-linejoin="round"/><line x1="1140.6" y1="797.2" x2="1140.6" y2="877.1" stroke="#6a7282" stroke-width="1"/><circle cx="1140.6" cy="868.6" r="3.8" fill="#1e9a40" stroke="#fff" stroke-width="1.5"/><text x="745.5" y="810.2" font-family="Liberation Sans" font-size="11" font-weight="bold" fill="#1e9a40">Avg Displacement X</text><line x1="730.3" y1="889.5" x2="1360.7" y2="889.5" stroke="#e9eaf0" stroke-width="1"/><text x="727.3" y="893.1" text-anchor="end" font-family="Liberation Sans" font-size="10.5" fill="#555d6e">30</text><line x1="730.3" y1="902.5" x2="1360.7" y2="902.5" stroke="#e9eaf0" stroke-width="1"/><text x="727.3" y="906.1" text-anchor="end" font-family="Liberation Sans" font-size="10.5" fill="#555d6e">20</text><line x1="730.3" y1="916.5" x2="1360.7" y2="916.5" stroke="#e9eaf0" stroke-width="1"/><text x="727.3" y="920.1" text-anchor="end" font-family="Liberation Sans" font-size="10.5" fill="#555d6e">10</text><line x1="730.3" y1="929.5" x2="1360.7" y2="929.5" stroke="#e9eaf0" stroke-width="1"/><text x="727.3" y="933.1" text-anchor="end" font-family="Liberation Sans" font-size="10.5" fill="#555d6e">0</text><line x1="730.3" y1="943.5" x2="1360.7" y2="943.5" stroke="#e9eaf0" stroke-width="1"/><text x="727.3" y="947.1" text-anchor="end" font-family="Liberation Sans" font-size="10.5" fill="#555d6e">-10</text><line x1="730.3" y1="956.5" x2="1360.7" y2="956.5" stroke="#e9eaf0" stroke-width="1"/><text x="727.3" y="960.1" text-anchor="end" font-family="Liberation Sans" font-size="10.5" fill="#555d6e">-20</text><line x1="730.3" y1="970.5" x2="1360.7" y2="970.5" stroke="#e9eaf0" stroke-width="1"/><text x="727.3" y="974.1" text-anchor="end" font-family="Liberation Sans" font-size="10.5" fill="#555d6e">-30</text><line x1="846.5" y1="889.5" x2="846.5" y2="970.3" stroke="#e9eaf0" stroke-width="1"/><line x1="957.5" y1="889.5" x2="957.5" y2="970.3" stroke="#e9eaf0" stroke-width="1"/><line x1="1068.5" y1="889.5" x2="1068.5" y2="970.3" stroke="#e9eaf0" stroke-width="1"/><line x1="1180.5" y1="889.5" x2="1180.5" y2="970.3" stroke="#e9eaf0" stroke-width="1"/><line x1="1291.5" y1="889.5" x2="1291.5" y2="970.3" stroke="#e9eaf0" stroke-width="1"/><line x1="1360.7" y1="889.5" x2="1360.7" y2="970.3" stroke="#e6e6ec" stroke-width="1"/><line x1="735.3" y1="889.5" x2="735.3" y2="970.3" stroke="#d4d6de" stroke-width="1"/><path d="M735.3 929.9 L736.1 929.9 L737.0 929.9 L737.8 929.9 L738.6 929.9 L739.5 929.9 L740.3 929.9 L741.1 929.9 L742.0 929.9 L742.8 929.9 L743.6 929.9 L744.5 929.9 L745.3 929.9 L746.1 929.9 L747.0 929.9 L747.8 929.9 L748.6 929.9 L749.5 929.9 L750.3 929.9 L751.1 929.9 L752.0 929.9 L752.8 929.9 L753.6 929.9 L754.5 929.9 L755.3 929.9 L756.1 929.9 L757.0 929.9 L757.8 929.9 L758.6 929.9 L759.5 929.9 L760.3 929.9 L761.1 929.9 L762.0 929.9 L762.8 929.9 L763.7 929.9 L764.5 929.9 L765.3 929.9 L766.2 929.9 L767.0 929.9 L767.8 929.9 L768.7 929.9 L769.5 929.9 L770.3 929.9 L771.2 929.9 L772.0 929.9 L772.8 929.9 L773.7 929.9 L774.5 929.9 L775.3 929.9 L776.2 929.9 L777.0 929.9 L777.8 929.9 L778.7 929.9 L779.5 929.9 L780.3 929.9 L781.2 929.9 L782.0 929.9 L782.8 929.9 L783.7 929.9 L784.5 929.9 L785.3 929.9 L786.2 929.9 L787.0 929.9 L787.8 929.9 L788.7 929.9 L789.5 929.9 L790.3 929.9 L791.2 929.9 L792.0 929.9 L792.8 929.9 L793.7 929.9 L794.5 929.9 L795.3 929.9 L796.2 929.9 L797.0 929.9 L797.8 929.9 L798.7 929.9 L799.5 929.9 L800.3 929.9 L801.2 929.9 L802.0 929.9 L802.8 929.9 L803.7 929.9 L804.5 929.9 L805.3 929.9 L806.2 929.9 L807.0 929.9 L807.8 929.9 L808.7 929.9 L809.5 929.9 L810.3 929.9 L811.2 929.9 L812.0 929.9 L812.8 929.9 L813.7 929.9 L814.5 929.9 L815.4 929.9 L816.2 929.9 L817.0 929.9 L817.9 929.9 L818.7 929.9 L819.5 929.9 L820.4 929.9 L821.2 929.9 L822.0 929.9 L822.9 929.9 L823.7 929.9 L824.5 929.9 L825.4 929.9 L826.2 929.9 L827.0 929.9 L827.9 929.9 L828.7 929.9 L829.5 929.9 L830.4 929.9 L831.2 929.9 L832.0 929.9 L832.9 929.9 L833.7 929.9 L834.5 929.9 L835.4 929.9 L836.2 929.9 L837.0 929.9 L837.9 929.9 L838.7 929.9 L839.5 929.9 L840.4 929.9 L841.2 929.9 L842.0 929.9 L842.9 929.9 L843.7 929.9 L844.5 929.9 L845.4 929.9 L846.2 929.9 L847.0 929.9 L847.9 929.9 L848.7 929.9 L849.5 929.9 L850.4 929.9 L851.2 929.9 L852.0 929.9 L852.9 929.9 L853.7 929.9 L854.5 929.9 L855.4 929.9 L856.2 929.9 L857.0 929.9 L857.9 929.9 L858.7 929.9 L859.5 929.9 L860.4 929.9 L861.2 929.9 L862.0 929.9 L862.9 929.9 L863.7 929.9 L864.5 929.9 L865.4 929.9 L866.2 929.9 L867.1 929.9 L867.9 929.9 L868.7 929.9 L869.6 929.9 L870.4 929.9 L871.2 929.9 L872.1 929.9 L872.9 929.9 L873.7 929.9 L874.6 929.9 L875.4 929.9 L876.2 929.9 L877.1 929.9 L877.9 929.9 L878.7 929.9 L879.6 929.9 L880.4 929.9 L881.2 929.9 L882.1 929.9 L882.9 929.9 L883.7 929.9 L884.6 929.9 L885.4 929.9 L886.2 929.9 L887.1 929.9 L887.9 929.9 L888.7 929.9 L889.6 929.9 L890.4 929.9 L891.2 929.9 L892.1 929.9 L892.9 929.9 L893.7 929.9 L894.6 929.9 L895.4 929.9 L896.2 929.9 L897.1 929.9 L897.9 929.9 L898.7 929.9 L899.6 929.9 L900.4 929.9 L901.2 929.9 L902.1 929.9 L902.9 929.9 L903.7 929.9 L904.6 929.9 L905.4 929.9 L906.2 929.9 L907.1 929.9 L907.9 929.9 L908.7 929.9 L909.6 929.9 L910.4 929.9 L911.2 929.9 L912.1 929.9 L912.9 929.9 L913.7 929.9 L914.6 929.9 L915.4 929.9 L916.2 929.9 L917.1 929.8 L917.9 929.8 L918.8 929.8 L919.6 929.8 L920.4 929.8 L921.3 929.8 L922.1 929.8 L922.9 929.8 L923.8 929.8 L924.6 929.7 L925.4 929.7 L926.3 929.7 L927.1 929.7 L927.9 929.7 L928.8 929.7 L929.6 929.7 L930.4 929.6 L931.3 929.6 L932.1 929.6 L932.9 929.6 L933.8 929.6 L934.6 929.6 L935.4 929.6 L936.3 929.6 L937.1 929.6 L937.9 929.5 L938.8 929.5 L939.6 929.5 L940.4 929.5 L941.3 929.5 L942.1 929.5 L942.9 929.5 L943.8 929.5 L944.6 929.5 L945.4 929.5 L946.3 929.5 L947.1 929.5 L947.9 929.5 L948.8 929.5 L949.6 929.5 L950.4 929.6 L951.3 929.6 L952.1 929.6 L952.9 929.6 L953.8 929.7 L954.6 929.7 L955.4 929.8 L956.3 929.8 L957.1 929.9 L957.9 929.9 L958.8 930.0 L959.6 930.0 L960.4 930.1 L961.3 930.1 L962.1 930.1 L962.9 930.2 L963.8 930.2 L964.6 930.2 L965.4 930.3 L966.3 930.3 L967.1 930.3 L967.9 930.3 L968.8 930.3 L969.6 930.3 L970.5 930.3 L971.3 930.3 L972.1 930.2 L973.0 930.2 L973.8 930.2 L974.6 930.1 L975.5 930.1 L976.3 930.0 L977.1 929.9 L978.0 929.9 L978.8 929.8 L979.6 929.7 L980.5 929.7 L981.3 929.6 L982.1 929.5 L983.0 929.4 L983.8 929.4 L984.6 929.3 L985.5 929.3 L986.3 929.2 L987.1 929.2 L988.0 929.1 L988.8 929.1 L989.6 929.1 L990.5 929.1 L991.3 929.1 L992.1 929.1 L993.0 929.1 L993.8 929.1 L994.6 929.2 L995.5 929.2 L996.3 929.3 L997.1 929.3 L998.0 929.4 L998.8 929.5 L999.6 929.5 L1000.5 929.6 L1001.3 929.7 L1002.1 929.8 L1003.0 929.8 L1003.8 929.9 L1004.6 930.0 L1005.5 930.1 L1006.3 930.1 L1007.1 930.2 L1008.0 930.3 L1008.8 930.3 L1009.6 930.4 L1010.5 930.4 L1011.3 930.4 L1012.1 930.4 L1013.0 930.4 L1013.8 930.4 L1014.6 930.4 L1015.5 930.4 L1016.3 930.4 L1017.1 930.4 L1018.0 930.4 L1018.8 930.3 L1019.6 930.3 L1020.5 930.3 L1021.3 930.2 L1022.2 930.2 L1023.0 930.1 L1023.8 930.1 L1024.7 930.1 L1025.5 930.0 L1026.3 930.0 L1027.2 929.9 L1028.0 929.8 L1028.8 929.8 L1029.7 929.7 L1030.5 929.7 L1031.3 929.7 L1032.2 929.6 L1033.0 929.6 L1033.8 929.5 L1034.7 929.5 L1035.5 929.5 L1036.3 929.4 L1037.2 929.4 L1038.0 929.4 L1038.8 929.4 L1039.7 929.4 L1040.5 929.4 L1041.3 929.4 L1042.2 929.4 L1043.0 929.4 L1043.8 929.4 L1044.7 929.4 L1045.5 929.4 L1046.3 929.4 L1047.2 929.5 L1048.0 929.5 L1048.8 929.5 L1049.7 929.6 L1050.5 929.6 L1051.3 929.6 L1052.2 929.7 L1053.0 929.7 L1053.8 929.8 L1054.7 929.8 L1055.5 929.9 L1056.3 929.9 L1057.2 929.9 L1058.0 930.0 L1058.8 930.0 L1059.7 930.1 L1060.5 930.1 L1061.3 930.1 L1062.2 930.2 L1063.0 930.2 L1063.8 930.2 L1064.7 930.3 L1065.5 930.3 L1066.3 930.3 L1067.2 930.3 L1068.0 930.3 L1068.8 930.3 L1069.7 930.3 L1070.5 930.3 L1071.3 930.3 L1072.2 930.3 L1073.0 930.2 L1073.8 930.2 L1074.7 930.2 L1075.5 930.1 L1076.4 930.1 L1077.2 930.1 L1078.0 930.0 L1078.9 930.0 L1079.7 929.9 L1080.5 929.9 L1081.4 929.8 L1082.2 929.8 L1083.0 929.7 L1083.9 929.7 L1084.7 929.6 L1085.5 929.6 L1086.4 929.6 L1087.2 929.6 L1088.0 929.5 L1088.9 929.5 L1089.7 929.5 L1090.5 929.5 L1091.4 929.5 L1092.2 929.5 L1093.0 929.5 L1093.9 929.5 L1094.7 929.6 L1095.5 929.6 L1096.4 929.6 L1097.2 929.7 L1098.0 929.7 L1098.9 929.7 L1099.7 929.8 L1100.5 929.8 L1101.4 929.8 L1102.2 929.9 L1103.0 929.9 L1103.9 929.9 L1104.7 929.9 L1105.5 929.8 L1106.4 929.4 L1107.2 928.7 L1108.0 927.7 L1108.9 926.7 L1109.7 925.8 L1110.5 925.0 L1111.4 924.4 L1112.2 924.2 L1113.0 924.6 L1113.9 925.5 L1114.7 926.8 L1115.5 928.3 L1116.4 929.7 L1117.2 930.8 L1118.0 931.3 L1118.9 931.2 L1119.7 930.4 L1120.5 929.0 L1121.4 927.3 L1122.2 925.6 L1123.0 924.2 L1123.9 923.3 L1124.7 923.3 L1125.5 924.6 L1126.4 927.5 L1127.2 931.7 L1128.1 936.7 L1128.9 942.3 L1129.7 947.8 L1130.6 952.9 L1131.4 957.1 L1132.2 960.0 L1133.1 961.3 L1133.9 960.5 L1134.7 956.0 L1135.6 948.3 L1136.4 938.3 L1137.2 927.4 L1138.1 916.9 L1138.9 908.3 L1139.7 902.7 L1140.6 900.7 L1141.4 901.4 L1142.2 903.5 L1143.1 906.9 L1143.9 911.3 L1144.7 916.5 L1145.6 922.0 L1146.4 927.5 L1147.2 932.7 L1148.1 937.1 L1148.9 940.5 L1149.7 942.6 L1150.6 943.4 L1151.4 942.9 L1152.2 941.5 L1153.1 939.3 L1153.9 936.4 L1154.7 933.1 L1155.6 929.7 L1156.4 926.3 L1157.2 923.3 L1158.1 920.8 L1158.9 919.2 L1159.7 918.4 L1160.6 918.4 L1161.4 918.8 L1162.2 919.6 L1163.1 920.7 L1163.9 922.1 L1164.7 923.6 L1165.6 925.3 L1166.4 927.0 L1167.2 928.8 L1168.1 930.4 L1168.9 931.8 L1169.7 933.0 L1170.6 933.9 L1171.4 934.4 L1172.2 934.6 L1173.1 934.4 L1173.9 933.9 L1174.7 933.2 L1175.6 932.2 L1176.4 931.0 L1177.2 929.9 L1178.1 928.8 L1178.9 927.8 L1179.8 927.1 L1180.6 926.7 L1181.4 926.7 L1182.3 927.0 L1183.1 927.7 L1183.9 928.6 L1184.8 929.5 L1185.6 930.2 L1186.4 930.5 L1187.3 930.5 L1188.1 930.2 L1188.9 929.8 L1189.8 929.2 L1190.6 928.7 L1191.4 928.2 L1192.3 927.9 L1193.1 927.9 L1193.9 928.2 L1194.8 928.8 L1195.6 929.6 L1196.4 930.4 L1197.3 931.0 L1198.1 931.4 L1198.9 931.3 L1199.8 931.1 L1200.6 930.6 L1201.4 929.9 L1202.3 929.2 L1203.1 928.4 L1203.9 927.6 L1204.8 926.9 L1205.6 926.3 L1206.4 926.0 L1207.3 925.9 L1208.1 926.0 L1208.9 926.5 L1209.8 927.3 L1210.6 928.1 L1211.4 929.0 L1212.3 929.8 L1213.1 930.3 L1213.9 930.4 L1214.8 930.3 L1215.6 929.9 L1216.4 929.2 L1217.3 928.4 L1218.1 927.6 L1218.9 926.8 L1219.8 926.3 L1220.6 925.9 L1221.4 925.9 L1222.3 926.1 L1223.1 926.7 L1223.9 927.4 L1224.8 928.1 L1225.6 928.9 L1226.4 929.5 L1227.3 929.8 L1228.1 929.9 L1228.9 929.7 L1229.8 929.4 L1230.6 929.0 L1231.5 928.5 L1232.3 928.1 L1233.1 927.7 L1234.0 927.5 L1234.8 927.5 L1235.6 927.5 L1236.5 927.6 L1237.3 927.7 L1238.1 927.8 L1239.0 927.9 L1239.8 928.1 L1240.6 928.3 L1241.5 928.5 L1242.3 928.6 L1243.1 928.8 L1244.0 928.9 L1244.8 929.0 L1245.6 929.1 L1246.5 929.1 L1247.3 929.1 L1248.1 929.1 L1249.0 929.1 L1249.8 929.1 L1250.6 929.1 L1251.5 929.0 L1252.3 929.0 L1253.1 929.0 L1254.0 929.0 L1254.8 929.0 L1255.6 928.9 L1256.5 928.9 L1257.3 928.9 L1258.1 928.9 L1259.0 928.9 L1259.8 928.9 L1260.6 928.8 L1261.5 928.8 L1262.3 928.8 L1263.1 928.8 L1264.0 928.8 L1264.8 928.8 L1265.6 928.8 L1266.5 928.8 L1267.3 928.9 L1268.1 928.9 L1269.0 928.9 L1269.8 928.9 L1270.6 928.9 L1271.5 929.0 L1272.3 929.0 L1273.1 929.0 L1274.0 929.0 L1274.8 929.0 L1275.6 929.0 L1276.5 929.1 L1277.3 929.1 L1278.1 929.1 L1279.0 929.1 L1279.8 929.1 L1280.6 929.1 L1281.5 929.0 L1282.3 929.0 L1283.2 928.9 L1284.0 928.8 L1284.8 928.6 L1285.7 928.5 L1286.5 928.3 L1287.3 928.2 L1288.2 928.1 L1289.0 928.0 L1289.8 927.9 L1290.7 927.9 L1291.5 927.9 L1292.3 928.1 L1293.2 928.5 L1294.0 929.0 L1294.8 929.6 L1295.7 930.2 L1296.5 930.7 L1297.3 930.9 L1298.2 931.0 L1299.0 930.8 L1299.8 930.5 L1300.7 930.0 L1301.5 929.3 L1302.3 928.7 L1303.2 927.9 L1304.0 927.3 L1304.8 926.7 L1305.7 926.2 L1306.5 926.0 L1307.3 925.9 L1308.2 926.0 L1309.0 926.3 L1309.8 926.9 L1310.7 927.5 L1311.5 928.3 L1312.3 929.0 L1313.2 929.7 L1314.0 930.2 L1314.8 930.6 L1315.7 930.7 L1316.5 930.6 L1317.3 930.3 L1318.2 929.8 L1319.0 929.3 L1319.8 928.6 L1320.7 928.0 L1321.5 927.4 L1322.3 926.9 L1323.2 926.6 L1324.0 926.5 L1324.8 926.6 L1325.7 926.9 L1326.5 927.3 L1327.3 927.8 L1328.2 928.4 L1329.0 929.0 L1329.8 929.6 L1330.7 930.1 L1331.5 930.5 L1332.3 930.7 L1333.2 930.7 L1334.0 930.5 L1334.9 930.2 L1335.7 929.7 L1336.5 929.2 L1337.4 928.5 L1338.2 927.8 L1339.0 927.2 L1339.9 926.7 L1340.7 926.2 L1341.5 926.0 L1342.4 925.9 L1343.2 926.0 L1344.0 926.6 L1344.9 927.4 L1345.7 928.3 L1346.5 929.2 L1347.4 930.0 L1348.2 930.5 L1349.0 930.7 L1349.9 930.6 L1350.7 930.1 L1351.5 929.5 L1352.4 928.8 L1353.2 928.1 L1354.0 927.6 L1354.9 927.4 L1355.7 927.4 L1356.5 927.7 L1357.4 928.2 L1358.2 928.8 L1359.0 929.4 L1359.9 929.8 L1360.7 929.9 L1360.7 929.9 L735.3 929.9 Z" fill="#5a9a14" fill-opacity="0.12"/><path d="M735.3 929.9 L736.1 929.9 L737.0 929.9 L737.8 929.9 L738.6 929.9 L739.5 929.9 L740.3 929.9 L741.1 929.9 L742.0 929.9 L742.8 929.9 L743.6 929.9 L744.5 929.9 L745.3 929.9 L746.1 929.9 L747.0 929.9 L747.8 929.9 L748.6 929.9 L749.5 929.9 L750.3 929.9 L751.1 929.9 L752.0 929.9 L752.8 929.9 L753.6 929.9 L754.5 929.9 L755.3 929.9 L756.1 929.9 L757.0 929.9 L757.8 929.9 L758.6 929.9 L759.5 929.9 L760.3 929.9 L761.1 929.9 L762.0 929.9 L762.8 929.9 L763.7 929.9 L764.5 929.9 L765.3 929.9 L766.2 929.9 L767.0 929.9 L767.8 929.9 L768.7 929.9 L769.5 929.9 L770.3 929.9 L771.2 929.9 L772.0 929.9 L772.8 929.9 L773.7 929.9 L774.5 929.9 L775.3 929.9 L776.2 929.9 L777.0 929.9 L777.8 929.9 L778.7 929.9 L779.5 929.9 L780.3 929.9 L781.2 929.9 L782.0 929.9 L782.8 929.9 L783.7 929.9 L784.5 929.9 L785.3 929.9 L786.2 929.9 L787.0 929.9 L787.8 929.9 L788.7 929.9 L789.5 929.9 L790.3 929.9 L791.2 929.9 L792.0 929.9 L792.8 929.9 L793.7 929.9 L794.5 929.9 L795.3 929.9 L796.2 929.9 L797.0 929.9 L797.8 929.9 L798.7 929.9 L799.5 929.9 L800.3 929.9 L801.2 929.9 L802.0 929.9 L802.8 929.9 L803.7 929.9 L804.5 929.9 L805.3 929.9 L806.2 929.9 L807.0 929.9 L807.8 929.9 L808.7 929.9 L809.5 929.9 L810.3 929.9 L811.2 929.9 L812.0 929.9 L812.8 929.9 L813.7 929.9 L814.5 929.9 L815.4 929.9 L816.2 929.9 L817.0 929.9 L817.9 929.9 L818.7 929.9 L819.5 929.9 L820.4 929.9 L821.2 929.9 L822.0 929.9 L822.9 929.9 L823.7 929.9 L824.5 929.9 L825.4 929.9 L826.2 929.9 L827.0 929.9 L827.9 929.9 L828.7 929.9 L829.5 929.9 L830.4 929.9 L831.2 929.9 L832.0 929.9 L832.9 929.9 L833.7 929.9 L834.5 929.9 L835.4 929.9 L836.2 929.9 L837.0 929.9 L837.9 929.9 L838.7 929.9 L839.5 929.9 L840.4 929.9 L841.2 929.9 L842.0 929.9 L842.9 929.9 L843.7 929.9 L844.5 929.9 L845.4 929.9 L846.2 929.9 L847.0 929.9 L847.9 929.9 L848.7 929.9 L849.5 929.9 L850.4 929.9 L851.2 929.9 L852.0 929.9 L852.9 929.9 L853.7 929.9 L854.5 929.9 L855.4 929.9 L856.2 929.9 L857.0 929.9 L857.9 929.9 L858.7 929.9 L859.5 929.9 L860.4 929.9 L861.2 929.9 L862.0 929.9 L862.9 929.9 L863.7 929.9 L864.5 929.9 L865.4 929.9 L866.2 929.9 L867.1 929.9 L867.9 929.9 L868.7 929.9 L869.6 929.9 L870.4 929.9 L871.2 929.9 L872.1 929.9 L872.9 929.9 L873.7 929.9 L874.6 929.9 L875.4 929.9 L876.2 929.9 L877.1 929.9 L877.9 929.9 L878.7 929.9 L879.6 929.9 L880.4 929.9 L881.2 929.9 L882.1 929.9 L882.9 929.9 L883.7 929.9 L884.6 929.9 L885.4 929.9 L886.2 929.9 L887.1 929.9 L887.9 929.9 L888.7 929.9 L889.6 929.9 L890.4 929.9 L891.2 929.9 L892.1 929.9 L892.9 929.9 L893.7 929.9 L894.6 929.9 L895.4 929.9 L896.2 929.9 L897.1 929.9 L897.9 929.9 L898.7 929.9 L899.6 929.9 L900.4 929.9 L901.2 929.9 L902.1 929.9 L902.9 929.9 L903.7 929.9 L904.6 929.9 L905.4 929.9 L906.2 929.9 L907.1 929.9 L907.9 929.9 L908.7 929.9 L909.6 929.9 L910.4 929.9 L911.2 929.9 L912.1 929.9 L912.9 929.9 L913.7 929.9 L914.6 929.9 L915.4 929.9 L916.2 929.9 L917.1 929.8 L917.9 929.8 L918.8 929.8 L919.6 929.8 L920.4 929.8 L921.3 929.8 L922.1 929.8 L922.9 929.8 L923.8 929.8 L924.6 929.7 L925.4 929.7 L926.3 929.7 L927.1 929.7 L927.9 929.7 L928.8 929.7 L929.6 929.7 L930.4 929.6 L931.3 929.6 L932.1 929.6 L932.9 929.6 L933.8 929.6 L934.6 929.6 L935.4 929.6 L936.3 929.6 L937.1 929.6 L937.9 929.5 L938.8 929.5 L939.6 929.5 L940.4 929.5 L941.3 929.5 L942.1 929.5 L942.9 929.5 L943.8 929.5 L944.6 929.5 L945.4 929.5 L946.3 929.5 L947.1 929.5 L947.9 929.5 L948.8 929.5 L949.6 929.5 L950.4 929.6 L951.3 929.6 L952.1 929.6 L952.9 929.6 L953.8 929.7 L954.6 929.7 L955.4 929.8 L956.3 929.8 L957.1 929.9 L957.9 929.9 L958.8 930.0 L959.6 930.0 L960.4 930.1 L961.3 930.1 L962.1 930.1 L962.9 930.2 L963.8 930.2 L964.6 930.2 L965.4 930.3 L966.3 930.3 L967.1 930.3 L967.9 930.3 L968.8 930.3 L969.6 930.3 L970.5 930.3 L971.3 930.3 L972.1 930.2 L973.0 930.2 L973.8 930.2 L974.6 930.1 L975.5 930.1 L976.3 930.0 L977.1 929.9 L978.0 929.9 L978.8 929.8 L979.6 929.7 L980.5 929.7 L981.3 929.6 L982.1 929.5 L983.0 929.4 L983.8 929.4 L984.6 929.3 L985.5 929.3 L986.3 929.2 L987.1 929.2 L988.0 929.1 L988.8 929.1 L989.6 929.1 L990.5 929.1 L991.3 929.1 L992.1 929.1 L993.0 929.1 L993.8 929.1 L994.6 929.2 L995.5 929.2 L996.3 929.3 L997.1 929.3 L998.0 929.4 L998.8 929.5 L999.6 929.5 L1000.5 929.6 L1001.3 929.7 L1002.1 929.8 L1003.0 929.8 L1003.8 929.9 L1004.6 930.0 L1005.5 930.1 L1006.3 930.1 L1007.1 930.2 L1008.0 930.3 L1008.8 930.3 L1009.6 930.4 L1010.5 930.4 L1011.3 930.4 L1012.1 930.4 L1013.0 930.4 L1013.8 930.4 L1014.6 930.4 L1015.5 930.4 L1016.3 930.4 L1017.1 930.4 L1018.0 930.4 L1018.8 930.3 L1019.6 930.3 L1020.5 930.3 L1021.3 930.2 L1022.2 930.2 L1023.0 930.1 L1023.8 930.1 L1024.7 930.1 L1025.5 930.0 L1026.3 930.0 L1027.2 929.9 L1028.0 929.8 L1028.8 929.8 L1029.7 929.7 L1030.5 929.7 L1031.3 929.7 L1032.2 929.6 L1033.0 929.6 L1033.8 929.5 L1034.7 929.5 L1035.5 929.5 L1036.3 929.4 L1037.2 929.4 L1038.0 929.4 L1038.8 929.4 L1039.7 929.4 L1040.5 929.4 L1041.3 929.4 L1042.2 929.4 L1043.0 929.4 L1043.8 929.4 L1044.7 929.4 L1045.5 929.4 L1046.3 929.4 L1047.2 929.5 L1048.0 929.5 L1048.8 929.5 L1049.7 929.6 L1050.5 929.6 L1051.3 929.6 L1052.2 929.7 L1053.0 929.7 L1053.8 929.8 L1054.7 929.8 L1055.5 929.9 L1056.3 929.9 L1057.2 929.9 L1058.0 930.0 L1058.8 930.0 L1059.7 930.1 L1060.5 930.1 L1061.3 930.1 L1062.2 930.2 L1063.0 930.2 L1063.8 930.2 L1064.7 930.3 L1065.5 930.3 L1066.3 930.3 L1067.2 930.3 L1068.0 930.3 L1068.8 930.3 L1069.7 930.3 L1070.5 930.3 L1071.3 930.3 L1072.2 930.3 L1073.0 930.2 L1073.8 930.2 L1074.7 930.2 L1075.5 930.1 L1076.4 930.1 L1077.2 930.1 L1078.0 930.0 L1078.9 930.0 L1079.7 929.9 L1080.5 929.9 L1081.4 929.8 L1082.2 929.8 L1083.0 929.7 L1083.9 929.7 L1084.7 929.6 L1085.5 929.6 L1086.4 929.6 L1087.2 929.6 L1088.0 929.5 L1088.9 929.5 L1089.7 929.5 L1090.5 929.5 L1091.4 929.5 L1092.2 929.5 L1093.0 929.5 L1093.9 929.5 L1094.7 929.6 L1095.5 929.6 L1096.4 929.6 L1097.2 929.7 L1098.0 929.7 L1098.9 929.7 L1099.7 929.8 L1100.5 929.8 L1101.4 929.8 L1102.2 929.9 L1103.0 929.9 L1103.9 929.9 L1104.7 929.9 L1105.5 929.8 L1106.4 929.4 L1107.2 928.7 L1108.0 927.7 L1108.9 926.7 L1109.7 925.8 L1110.5 925.0 L1111.4 924.4 L1112.2 924.2 L1113.0 924.6 L1113.9 925.5 L1114.7 926.8 L1115.5 928.3 L1116.4 929.7 L1117.2 930.8 L1118.0 931.3 L1118.9 931.2 L1119.7 930.4 L1120.5 929.0 L1121.4 927.3 L1122.2 925.6 L1123.0 924.2 L1123.9 923.3 L1124.7 923.3 L1125.5 924.6 L1126.4 927.5 L1127.2 931.7 L1128.1 936.7 L1128.9 942.3 L1129.7 947.8 L1130.6 952.9 L1131.4 957.1 L1132.2 960.0 L1133.1 961.3 L1133.9 960.5 L1134.7 956.0 L1135.6 948.3 L1136.4 938.3 L1137.2 927.4 L1138.1 916.9 L1138.9 908.3 L1139.7 902.7 L1140.6 900.7 L1141.4 901.4 L1142.2 903.5 L1143.1 906.9 L1143.9 911.3 L1144.7 916.5 L1145.6 922.0 L1146.4 927.5 L1147.2 932.7 L1148.1 937.1 L1148.9 940.5 L1149.7 942.6 L1150.6 943.4 L1151.4 942.9 L1152.2 941.5 L1153.1 939.3 L1153.9 936.4 L1154.7 933.1 L1155.6 929.7 L1156.4 926.3 L1157.2 923.3 L1158.1 920.8 L1158.9 919.2 L1159.7 918.4 L1160.6 918.4 L1161.4 918.8 L1162.2 919.6 L1163.1 920.7 L1163.9 922.1 L1164.7 923.6 L1165.6 925.3 L1166.4 927.0 L1167.2 928.8 L1168.1 930.4 L1168.9 931.8 L1169.7 933.0 L1170.6 933.9 L1171.4 934.4 L1172.2 934.6 L1173.1 934.4 L1173.9 933.9 L1174.7 933.2 L1175.6 932.2 L1176.4 931.0 L1177.2 929.9 L1178.1 928.8 L1178.9 927.8 L1179.8 927.1 L1180.6 926.7 L1181.4 926.7 L1182.3 927.0 L1183.1 927.7 L1183.9 928.6 L1184.8 929.5 L1185.6 930.2 L1186.4 930.5 L1187.3 930.5 L1188.1 930.2 L1188.9 929.8 L1189.8 929.2 L1190.6 928.7 L1191.4 928.2 L1192.3 927.9 L1193.1 927.9 L1193.9 928.2 L1194.8 928.8 L1195.6 929.6 L1196.4 930.4 L1197.3 931.0 L1198.1 931.4 L1198.9 931.3 L1199.8 931.1 L1200.6 930.6 L1201.4 929.9 L1202.3 929.2 L1203.1 928.4 L1203.9 927.6 L1204.8 926.9 L1205.6 926.3 L1206.4 926.0 L1207.3 925.9 L1208.1 926.0 L1208.9 926.5 L1209.8 927.3 L1210.6 928.1 L1211.4 929.0 L1212.3 929.8 L1213.1 930.3 L1213.9 930.4 L1214.8 930.3 L1215.6 929.9 L1216.4 929.2 L1217.3 928.4 L1218.1 927.6 L1218.9 926.8 L1219.8 926.3 L1220.6 925.9 L1221.4 925.9 L1222.3 926.1 L1223.1 926.7 L1223.9 927.4 L1224.8 928.1 L1225.6 928.9 L1226.4 929.5 L1227.3 929.8 L1228.1 929.9 L1228.9 929.7 L1229.8 929.4 L1230.6 929.0 L1231.5 928.5 L1232.3 928.1 L1233.1 927.7 L1234.0 927.5 L1234.8 927.5 L1235.6 927.5 L1236.5 927.6 L1237.3 927.7 L1238.1 927.8 L1239.0 927.9 L1239.8 928.1 L1240.6 928.3 L1241.5 928.5 L1242.3 928.6 L1243.1 928.8 L1244.0 928.9 L1244.8 929.0 L1245.6 929.1 L1246.5 929.1 L1247.3 929.1 L1248.1 929.1 L1249.0 929.1 L1249.8 929.1 L1250.6 929.1 L1251.5 929.0 L1252.3 929.0 L1253.1 929.0 L1254.0 929.0 L1254.8 929.0 L1255.6 928.9 L1256.5 928.9 L1257.3 928.9 L1258.1 928.9 L1259.0 928.9 L1259.8 928.9 L1260.6 928.8 L1261.5 928.8 L1262.3 928.8 L1263.1 928.8 L1264.0 928.8 L1264.8 928.8 L1265.6 928.8 L1266.5 928.8 L1267.3 928.9 L1268.1 928.9 L1269.0 928.9 L1269.8 928.9 L1270.6 928.9 L1271.5 929.0 L1272.3 929.0 L1273.1 929.0 L1274.0 929.0 L1274.8 929.0 L1275.6 929.0 L1276.5 929.1 L1277.3 929.1 L1278.1 929.1 L1279.0 929.1 L1279.8 929.1 L1280.6 929.1 L1281.5 929.0 L1282.3 929.0 L1283.2 928.9 L1284.0 928.8 L1284.8 928.6 L1285.7 928.5 L1286.5 928.3 L1287.3 928.2 L1288.2 928.1 L1289.0 928.0 L1289.8 927.9 L1290.7 927.9 L1291.5 927.9 L1292.3 928.1 L1293.2 928.5 L1294.0 929.0 L1294.8 929.6 L1295.7 930.2 L1296.5 930.7 L1297.3 930.9 L1298.2 931.0 L1299.0 930.8 L1299.8 930.5 L1300.7 930.0 L1301.5 929.3 L1302.3 928.7 L1303.2 927.9 L1304.0 927.3 L1304.8 926.7 L1305.7 926.2 L1306.5 926.0 L1307.3 925.9 L1308.2 926.0 L1309.0 926.3 L1309.8 926.9 L1310.7 927.5 L1311.5 928.3 L1312.3 929.0 L1313.2 929.7 L1314.0 930.2 L1314.8 930.6 L1315.7 930.7 L1316.5 930.6 L1317.3 930.3 L1318.2 929.8 L1319.0 929.3 L1319.8 928.6 L1320.7 928.0 L1321.5 927.4 L1322.3 926.9 L1323.2 926.6 L1324.0 926.5 L1324.8 926.6 L1325.7 926.9 L1326.5 927.3 L1327.3 927.8 L1328.2 928.4 L1329.0 929.0 L1329.8 929.6 L1330.7 930.1 L1331.5 930.5 L1332.3 930.7 L1333.2 930.7 L1334.0 930.5 L1334.9 930.2 L1335.7 929.7 L1336.5 929.2 L1337.4 928.5 L1338.2 927.8 L1339.0 927.2 L1339.9 926.7 L1340.7 926.2 L1341.5 926.0 L1342.4 925.9 L1343.2 926.0 L1344.0 926.6 L1344.9 927.4 L1345.7 928.3 L1346.5 929.2 L1347.4 930.0 L1348.2 930.5 L1349.0 930.7 L1349.9 930.6 L1350.7 930.1 L1351.5 929.5 L1352.4 928.8 L1353.2 928.1 L1354.0 927.6 L1354.9 927.4 L1355.7 927.4 L1356.5 927.7 L1357.4 928.2 L1358.2 928.8 L1359.0 929.4 L1359.9 929.8 L1360.7 929.9" fill="none" stroke="#5a9a14" stroke-width="2" stroke-linejoin="round"/><line x1="1140.6" y1="889.5" x2="1140.6" y2="970.3" stroke="#6a7282" stroke-width="1"/><circle cx="1140.6" cy="900.7" r="3.8" fill="#5a9a14" stroke="#fff" stroke-width="1.5"/><text x="745.5" y="904.2" font-family="Liberation Sans" font-size="11" font-weight="bold" fill="#5a9a14">Avg Displacement Y</text><text x="45.4" y="987" text-anchor="middle" font-family="Liberation Sans" font-size="10.5" fill="#555d6e">0</text><text x="156.4" y="987" text-anchor="middle" font-family="Liberation Sans" font-size="10.5" fill="#555d6e">20</text><text x="267.4" y="987" text-anchor="middle" font-family="Liberation Sans" font-size="10.5" fill="#555d6e">40</text><text x="378.5" y="987" text-anchor="middle" font-family="Liberation Sans" font-size="10.5" fill="#555d6e">60</text><text x="489.5" y="987" text-anchor="middle" font-family="Liberation Sans" font-size="10.5" fill="#555d6e">80</text><text x="600.5" y="987" text-anchor="middle" font-family="Liberation Sans" font-size="10.5" fill="#555d6e">100</text><text x="669.9" y="987" text-anchor="middle" font-family="Liberation Sans" font-size="10.5" fill="#555d6e">112.5</text><text x="735.3" y="987" text-anchor="middle" font-family="Liberation Sans" font-size="10.5" fill="#555d6e">0</text><text x="846.5" y="987" text-anchor="middle" font-family="Liberation Sans" font-size="10.5" fill="#555d6e">20</text><text x="957.7" y="987" text-anchor="middle" font-family="Liberation Sans" font-size="10.5" fill="#555d6e">40</text><text x="1068.8" y="987" text-anchor="middle" font-family="Liberation Sans" font-size="10.5" fill="#555d6e">60</text><text x="1180.0" y="987" text-anchor="middle" font-family="Liberation Sans" font-size="10.5" fill="#555d6e">80</text><text x="1291.2" y="987" text-anchor="middle" font-family="Liberation Sans" font-size="10.5" fill="#555d6e">100</text><text x="1360.7" y="987" text-anchor="middle" font-family="Liberation Sans" font-size="10.5" fill="#555d6e">112.5</text></svg>
</body></html>
